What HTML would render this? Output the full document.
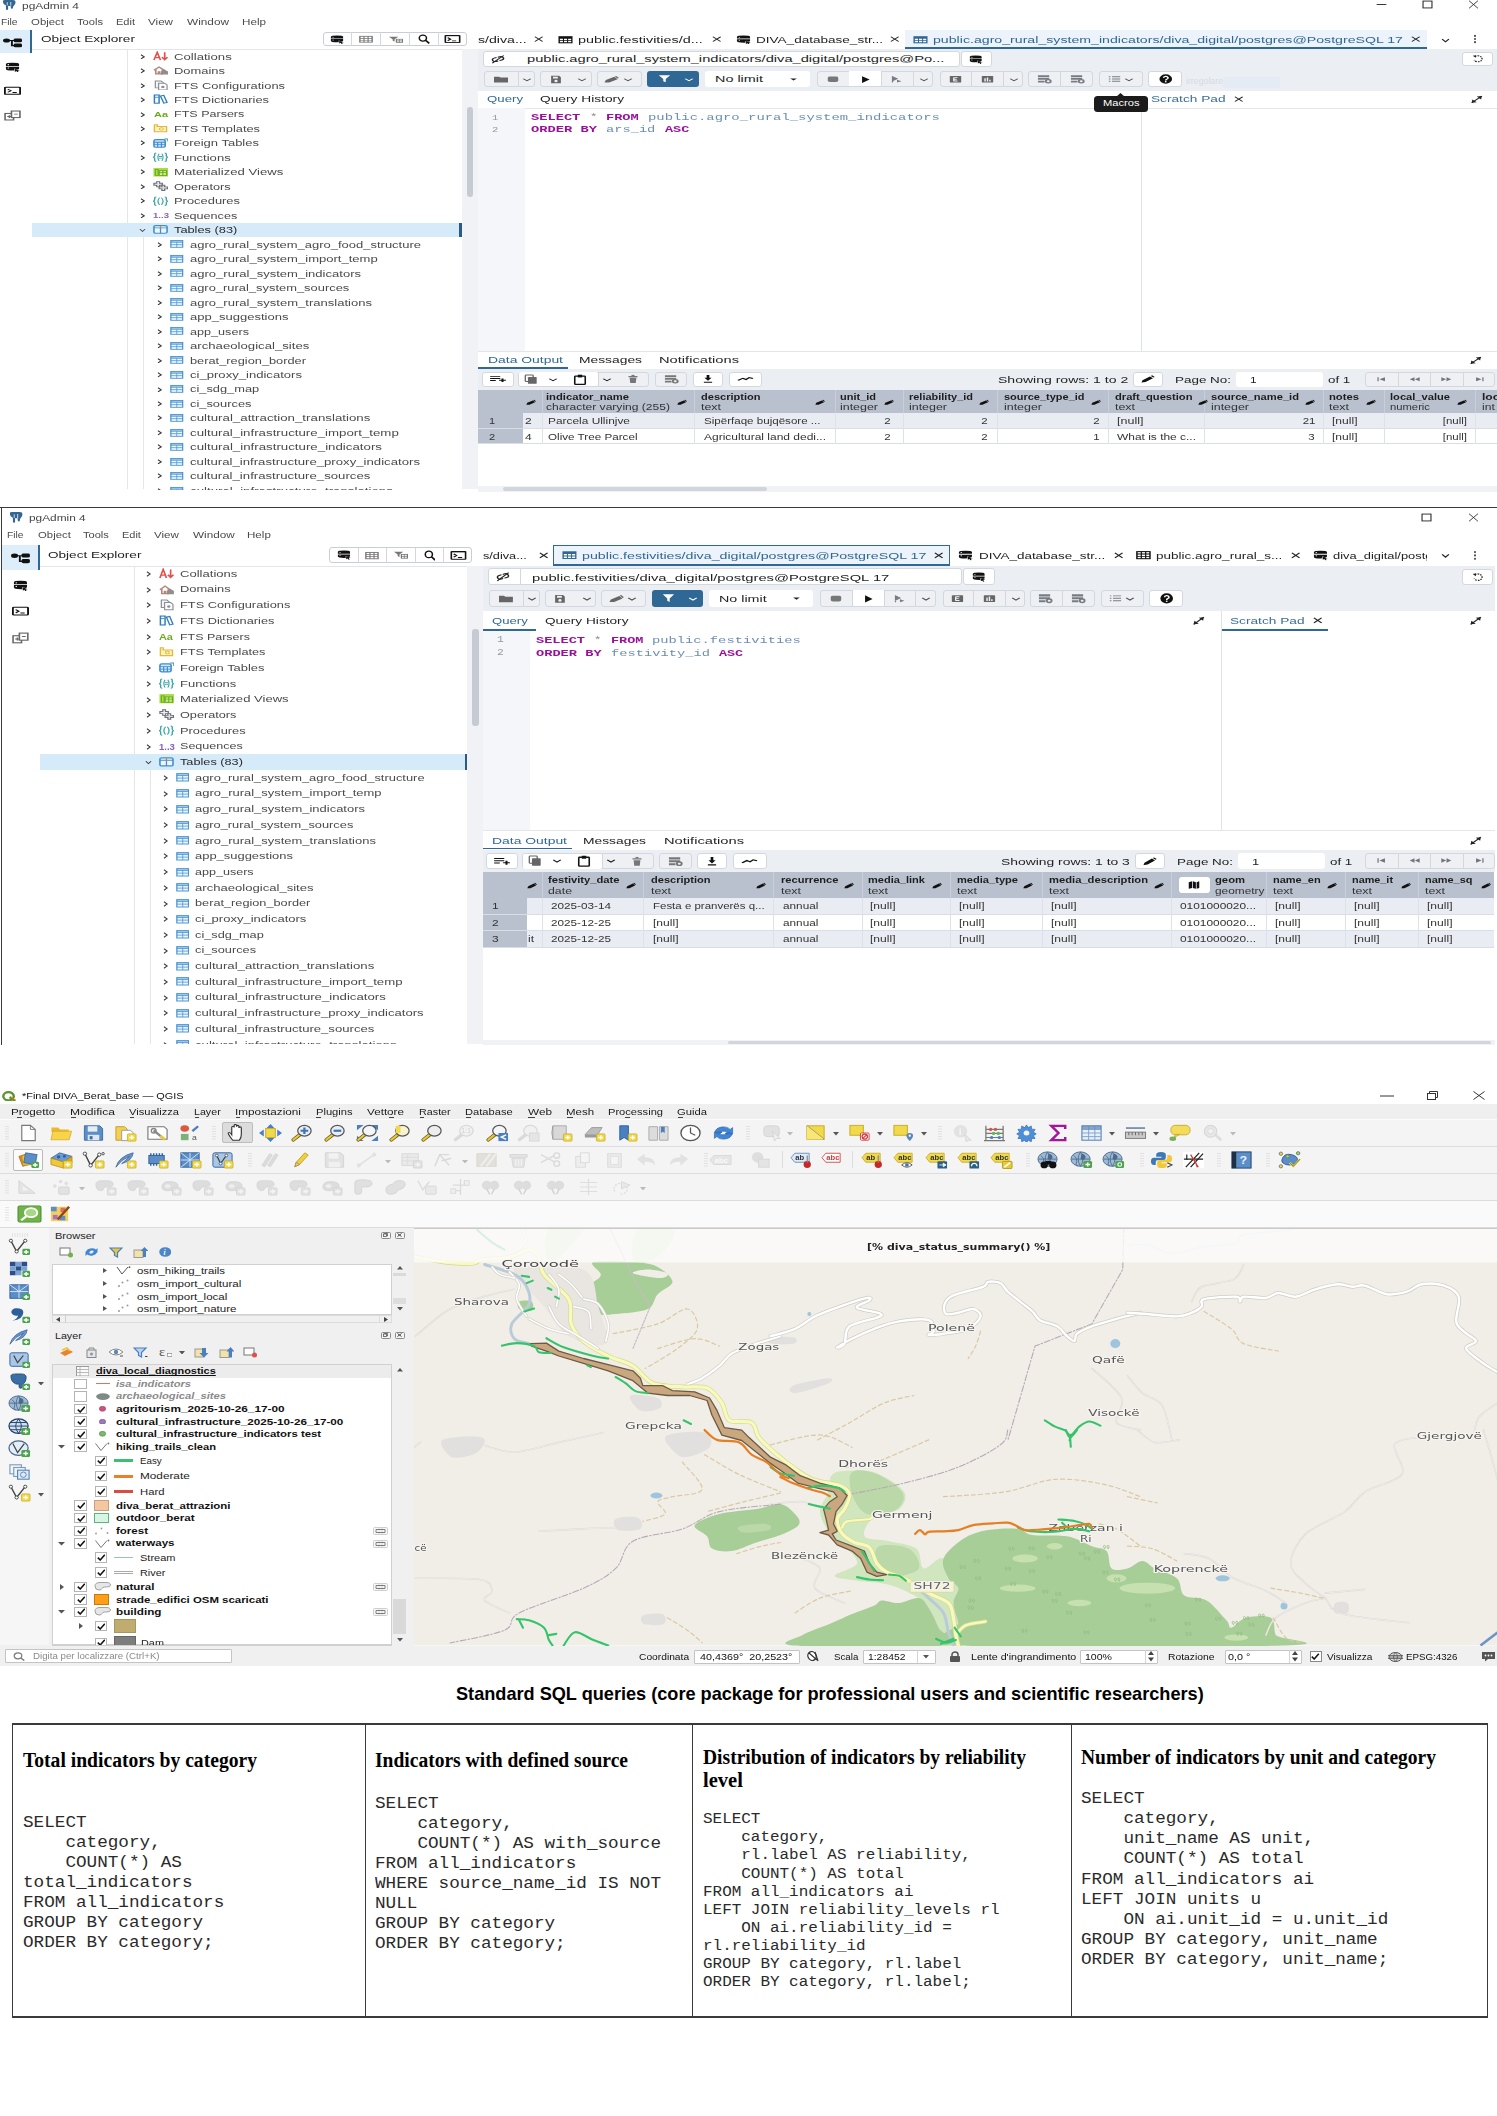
<!DOCTYPE html>
<html><head><meta charset="utf-8"><title>DIVA database documentation</title>
<style>
html,body{margin:0;padding:0;background:#fff;}
body{width:1497px;height:2116px;position:relative;overflow:hidden;font-family:"Liberation Sans",sans-serif;}
.a{position:absolute;display:block;}
.t{position:absolute;display:block;white-space:nowrap;}
</style></head><body>
<div class="a" style="left:0;top:0;width:1497px;height:1675px;filter:blur(0.45px);">
<svg class="a" style="left:2.00px;top:-0.50px;" width="14.00" height="10.00" viewBox="0 0 16 16" preserveAspectRatio="none"><path d="M1 1.5 q0 -1.500 2.500 -1.500 h9 q3 0 3 3 q0 4 -2 6 q-1 1 -1 3.500 q0 1.500 -1.300 1.500 q-1.200 0 -1.200 -2 v-3 q-1.500 .8 -3 0 v5.500 q0 1.500 -1.200 1.500 q-1.300 0 -1.300 -1.500 v-6 q-3.500 -1.500 -3.500 -7z" fill="#336791"/><path d="M6 3.5 v5 M10 3 v6" stroke="#fff" stroke-width="1"/></svg>
<span class="t" style="top:1.77px;font-size:8.50px;line-height:8.50px;color:#444;left:22.00px;transform-origin:0 50%;transform:scaleX(1.4025);">pgAdmin 4</span>
<span class="t" style="top:18.27px;font-size:8.50px;line-height:8.50px;color:#4a4a4a;left:0.60px;transform-origin:0 50%;transform:scaleX(1.2114);">File</span>
<span class="t" style="top:18.27px;font-size:8.50px;line-height:8.50px;color:#4a4a4a;left:31.00px;transform-origin:0 50%;transform:scaleX(1.3427);">Object</span>
<span class="t" style="top:18.27px;font-size:8.50px;line-height:8.50px;color:#4a4a4a;left:77.00px;transform-origin:0 50%;transform:scaleX(1.3102);">Tools</span>
<span class="t" style="top:18.27px;font-size:8.50px;line-height:8.50px;color:#4a4a4a;left:116.00px;transform-origin:0 50%;transform:scaleX(1.2964);">Edit</span>
<span class="t" style="top:18.27px;font-size:8.50px;line-height:8.50px;color:#4a4a4a;left:148.00px;transform-origin:0 50%;transform:scaleX(1.3675);">View</span>
<span class="t" style="top:18.27px;font-size:8.50px;line-height:8.50px;color:#4a4a4a;left:187.00px;transform-origin:0 50%;transform:scaleX(1.3891);">Window</span>
<span class="t" style="top:18.27px;font-size:8.50px;line-height:8.50px;color:#4a4a4a;left:242.00px;transform-origin:0 50%;transform:scaleX(1.3727);">Help</span>
<svg class="a" style="left:1375.00px;top:-1.20px;" width="13.00" height="11.00" viewBox="0 0 16 16" preserveAspectRatio="none"><path d="M2 8h12" stroke="#222" stroke-width="1.2"/></svg>
<svg class="a" style="left:1420.50px;top:-1.20px;" width="13.00" height="11.00" viewBox="0 0 16 16" preserveAspectRatio="none"><rect x="2.5" y="3" width="11" height="10" fill="none" stroke="#222" stroke-width="1.3"/></svg>
<svg class="a" style="left:1467.10px;top:-1.20px;" width="13.00" height="11.00" viewBox="0 0 16 16" preserveAspectRatio="none"><path d="M2.5 2.5 L13.5 13.5 M13.5 2.5 L2.5 13.5" stroke="#222" stroke-width="1.1" fill="none"/></svg>
<div class="a" style="left:-6.60px;top:30.00px;width:36.90px;height:23.00px;background:#ddeefa;"></div>
<div class="a" style="left:30.30px;top:30.00px;width:1.90px;height:23.00px;background:#2f6895;"></div>
<svg class="a" style="left:2.50px;top:36.50px;" width="19.00" height="11.00" viewBox="0 0 16 16" preserveAspectRatio="none"><circle cx="3" cy="5" r="3" fill="#111"/><rect x="9" y="2" width="7" height="5.5" rx="1.5" fill="#111"/><rect x="9" y="9.5" width="7" height="5.5" rx="1.5" fill="#111"/><path d="M5 5 H10 M7.5 5 V12.5 H10" stroke="#111" stroke-width="1.6" fill="none"/></svg>
<svg class="a" style="left:4.50px;top:61.75px;" width="15.00" height="10.50" viewBox="0 0 16 16" preserveAspectRatio="none"><path d="M1 3 q0 -2 7 -2 q7 0 7 2 v3 h-14z M1 7.200 h14 v3 q0 .8 -2 1.200 l-3 -1.500 v3.100 q-9 .3 -9 -2.300z" fill="#111"/><path d="M10.500 10.200 l5.300 2.700 -2.300 .4 1.200 2.300 -1.300 .5 -1.200 -2.300 -1.700 1.300z" fill="#111"/><circle cx="3.500" cy="4" r=".8" fill="#fff"/><circle cx="3.500" cy="9" r=".8" fill="#fff"/></svg>
<svg class="a" style="left:3.50px;top:86.25px;" width="17.00" height="9.50" viewBox="0 0 16 16" preserveAspectRatio="none"><rect x="0.8" y="2" width="14.4" height="12" rx="1" fill="none" stroke="#111" stroke-width="1.8"/><path d="M3.5 5.5 L6.5 8 L3.5 10.5 M8 11 H12" stroke="#111" stroke-width="1.5" fill="none"/></svg>
<svg class="a" style="left:3.50px;top:109.50px;" width="17.00" height="11.00" viewBox="0 0 16 16" preserveAspectRatio="none"><rect x="1" y="5" width="8" height="9.5" fill="none" stroke="#666" stroke-width="1.5"/><rect x="7" y="1.5" width="8" height="9.5" fill="#fff" stroke="#666" stroke-width="1.5"/><path d="M3 9.5h4M5 7.5v4M9.5 6h3.5" stroke="#666" stroke-width="1.2"/></svg>
<span class="t" style="top:35.20px;font-size:9.18px;line-height:9.18px;color:#222;left:41.00px;transform-origin:0 50%;transform:scaleX(1.4869);">Object Explorer</span>
<div class="a" style="left:32.20px;top:48.60px;width:443.80px;height:0.80px;background:#e2e5ea;"></div>
<div class="a" style="left:323.00px;top:31.60px;width:144.00px;height:14.80px;background:#fff;border:1px solid #c9cdd4;box-sizing:border-box;border-radius:3px;"></div>
<div class="a" style="left:351.40px;top:32.00px;width:0.80px;height:14.00px;background:#d3d7de;"></div>
<div class="a" style="left:380.20px;top:32.00px;width:0.80px;height:14.00px;background:#d3d7de;"></div>
<div class="a" style="left:409.00px;top:32.00px;width:0.80px;height:14.00px;background:#d3d7de;"></div>
<div class="a" style="left:437.80px;top:32.00px;width:0.80px;height:14.00px;background:#d3d7de;"></div>
<svg class="a" style="left:330.40px;top:34.50px;" width="14.00" height="9.00" viewBox="0 0 16 16" preserveAspectRatio="none"><path d="M1 3 q0 -2 7 -2 q7 0 7 2 v3 h-14z M1 7.200 h14 v3 q0 .8 -2 1.200 l-3 -1.500 v3.100 q-9 .3 -9 -2.300z" fill="#111"/><path d="M10.500 10.200 l5.300 2.700 -2.300 .4 1.200 2.300 -1.300 .5 -1.200 -2.300 -1.700 1.300z" fill="#111"/><circle cx="3.500" cy="4" r=".8" fill="#fff"/><circle cx="3.500" cy="9" r=".8" fill="#fff"/></svg>
<svg class="a" style="left:359.20px;top:34.75px;" width="14.00" height="8.50" viewBox="0 0 16 16" preserveAspectRatio="none"><rect x="1" y="2.5" width="14" height="11" fill="none" stroke="#777" stroke-width="1.6"/><path d="M1 6.2h14M1 9.9h14M5.7 2.5v11M10.4 2.5v11" stroke="#777" stroke-width="1.3"/></svg>
<svg class="a" style="left:387.50px;top:34.50px;" width="15.00" height="9.00" viewBox="0 0 16 16" preserveAspectRatio="none"><path d="M1 3 h10 l-4 4.5 v4 l-2 -1.2 v-2.8z" fill="#777"/><rect x="9" y="7.5" width="6.5" height="6" fill="none" stroke="#777" stroke-width="1.3"/><path d="M9 10.5h6.5M12.2 7.5v6" stroke="#777" stroke-width="1"/></svg>
<svg class="a" style="left:417.80px;top:34.00px;" width="12.00" height="10.00" viewBox="0 0 16 16" preserveAspectRatio="none"><circle cx="6.5" cy="6.5" r="4.8" fill="none" stroke="#111" stroke-width="2"/><path d="M10 10 L15 15" stroke="#111" stroke-width="2.4"/></svg>
<svg class="a" style="left:444.10px;top:34.00px;" width="17.00" height="10.00" viewBox="0 0 16 16" preserveAspectRatio="none"><rect x="0.5" y="1.5" width="15" height="13" rx="1.2" fill="#111"/><rect x="2" y="3.5" width="12" height="9.5" fill="#fff"/><path d="M3.5 5.8 L6.2 8.2 L3.5 10.6 M7.5 11 H11.5" stroke="#111" stroke-width="1.5" fill="none"/></svg>
<div class="a" style="left:461.70px;top:49.40px;width:15.90px;height:440.10px;background:#f0f2f5;"></div>
<div class="a" style="left:126.60px;top:49.40px;width:1.00px;height:440.10px;background:#e4e6ea;"></div>
<div class="a" style="left:142.90px;top:237.30px;width:1.00px;height:252.20px;background:#e4e6ea;"></div>
<div class="a" style="left:466.70px;top:107.00px;width:6.60px;height:90.00px;background:#c6cad2;border-radius:3px;"></div>
<div class="a" style="left:31.70px;top:222.70px;width:430.00px;height:14.60px;background:#d6ebf9;"></div>
<div class="a" style="left:459.00px;top:222.70px;width:2.70px;height:14.60px;background:#2b5b84;"></div>
<svg class="a" style="left:140.10px;top:53.60px;" width="5.20" height="5.60" viewBox="0 0 16 16" preserveAspectRatio="none"><path d="M3 2 L13 8 L3 14" fill="none" stroke="#333" stroke-width="3"/></svg>
<svg class="a" style="left:153.00px;top:50.75px;" width="15.00" height="10.50" viewBox="0 0 16 16" preserveAspectRatio="none"><path d="M1 14 L4.500 2 L8 14 M2.300 10 h4.400" stroke="#e0504d" stroke-width="1.800" fill="none"/><path d="M12.500 2 v11 M9.500 9.500 l3 3.800 3 -3.800" stroke="#e0504d" stroke-width="1.800" fill="none"/></svg>
<span class="t" style="top:52.57px;font-size:8.50px;line-height:8.50px;color:#4a4a4a;left:174.00px;transform-origin:0 50%;transform:scaleX(1.5458);">Collations</span>
<svg class="a" style="left:140.10px;top:68.08px;" width="5.20" height="5.60" viewBox="0 0 16 16" preserveAspectRatio="none"><path d="M3 2 L13 8 L3 14" fill="none" stroke="#333" stroke-width="3"/></svg>
<svg class="a" style="left:153.00px;top:65.22px;" width="15.00" height="10.50" viewBox="0 0 16 16" preserveAspectRatio="none"><path d="M1 8 L6.500 3 L12 8 M3 7v6.500h7V7" fill="none" stroke="#b5847a" stroke-width="1.700"/><path d="M8.500 10 L12.200 6.800 L16 10 v4.500 h-7.500z" fill="#8e8e8e"/><rect x="5" y="9.500" width="3" height="4" fill="#b5847a"/></svg>
<span class="t" style="top:67.04px;font-size:8.50px;line-height:8.50px;color:#4a4a4a;left:174.00px;transform-origin:0 50%;transform:scaleX(1.5203);">Domains</span>
<svg class="a" style="left:140.10px;top:82.55px;" width="5.20" height="5.60" viewBox="0 0 16 16" preserveAspectRatio="none"><path d="M3 2 L13 8 L3 14" fill="none" stroke="#333" stroke-width="3"/></svg>
<svg class="a" style="left:153.00px;top:79.70px;" width="15.00" height="10.50" viewBox="0 0 16 16" preserveAspectRatio="none"><path d="M2.500 1.500h6l2.500 2.500V12H2.500z" fill="#f4f4f4" stroke="#8a8f98" stroke-width="1.300"/><path d="M6 5h6.500l2.500 2.500V15H6z" fill="#fff" stroke="#8a8f98" stroke-width="1.300"/><circle cx="10.500" cy="10.500" r="1.800" fill="#8a8f98"/></svg>
<span class="t" style="top:81.52px;font-size:8.50px;line-height:8.50px;color:#4a4a4a;left:174.00px;transform-origin:0 50%;transform:scaleX(1.5157);">FTS Configurations</span>
<svg class="a" style="left:140.10px;top:97.03px;" width="5.20" height="5.60" viewBox="0 0 16 16" preserveAspectRatio="none"><path d="M3 2 L13 8 L3 14" fill="none" stroke="#333" stroke-width="3"/></svg>
<svg class="a" style="left:153.00px;top:94.17px;" width="15.00" height="10.50" viewBox="0 0 16 16" preserveAspectRatio="none"><rect x="1.5" y="1.5" width="5" height="12.5" fill="none" stroke="#2f7fc1" stroke-width="1.6"/><path d="M8 3 l3.5 -1 l3.5 11 l-3.5 1z" fill="none" stroke="#2f7fc1" stroke-width="1.5"/><path d="M2 5h4" stroke="#2f7fc1"/></svg>
<span class="t" style="top:95.99px;font-size:8.50px;line-height:8.50px;color:#4a4a4a;left:174.00px;transform-origin:0 50%;transform:scaleX(1.5121);">FTS Dictionaries</span>
<svg class="a" style="left:140.10px;top:111.50px;" width="5.20" height="5.60" viewBox="0 0 16 16" preserveAspectRatio="none"><path d="M3 2 L13 8 L3 14" fill="none" stroke="#333" stroke-width="3"/></svg>
<span class="t" style="top:110.70px;font-size:8.07px;line-height:8.07px;color:#6da81f;font-weight:bold;left:153.50px;transform-origin:0 50%;transform:scaleX(1.3576);">Aa</span>
<span class="t" style="top:110.47px;font-size:8.50px;line-height:8.50px;color:#4a4a4a;left:174.00px;transform-origin:0 50%;transform:scaleX(1.4737);">FTS Parsers</span>
<svg class="a" style="left:140.10px;top:125.98px;" width="5.20" height="5.60" viewBox="0 0 16 16" preserveAspectRatio="none"><path d="M3 2 L13 8 L3 14" fill="none" stroke="#333" stroke-width="3"/></svg>
<svg class="a" style="left:153.00px;top:123.12px;" width="15.00" height="10.50" viewBox="0 0 16 16" preserveAspectRatio="none"><path d="M1.5 2.5v11h13v-8h-10v-3z" fill="#fff3c4" stroke="#e3b93c" stroke-width="1.5"/><circle cx="9" cy="9" r="2" fill="none" stroke="#e3b93c" stroke-width="1.2"/></svg>
<span class="t" style="top:124.94px;font-size:8.50px;line-height:8.50px;color:#4a4a4a;left:174.00px;transform-origin:0 50%;transform:scaleX(1.5084);">FTS Templates</span>
<svg class="a" style="left:140.10px;top:140.45px;" width="5.20" height="5.60" viewBox="0 0 16 16" preserveAspectRatio="none"><path d="M3 2 L13 8 L3 14" fill="none" stroke="#333" stroke-width="3"/></svg>
<svg class="a" style="left:153.00px;top:137.60px;" width="15.00" height="10.50" viewBox="0 0 16 16" preserveAspectRatio="none"><rect x="1" y="2.500" width="12" height="11.500" rx="2" fill="#cfe4f7" stroke="#3d8fd1" stroke-width="1.700"/><path d="M1 6.500h12M5 6.500v7.500M9 6.500v7.500M1 10h12" stroke="#3d8fd1" stroke-width="1.300"/><path d="M12 1.500 h4 v4" fill="none" stroke="#3d8fd1" stroke-width="1.500"/></svg>
<span class="t" style="top:139.42px;font-size:8.50px;line-height:8.50px;color:#4a4a4a;left:174.00px;transform-origin:0 50%;transform:scaleX(1.5285);">Foreign Tables</span>
<svg class="a" style="left:140.10px;top:154.92px;" width="5.20" height="5.60" viewBox="0 0 16 16" preserveAspectRatio="none"><path d="M3 2 L13 8 L3 14" fill="none" stroke="#333" stroke-width="3"/></svg>
<svg class="a" style="left:153.00px;top:152.07px;" width="15.00" height="10.50" viewBox="0 0 16 16" preserveAspectRatio="none"><path d="M3.500 1.500 q-2 0 -1.700 3 q.3 2.500 -1.300 3.500 q1.600 1 1.300 3.500 q-.3 3 1.700 3 M12.500 1.500 q2 0 1.700 3 q-.3 2.500 1.300 3.500 q-1.600 1 -1.300 3.500 q.3 3 -1.700 3" fill="none" stroke="#3ba6a6" stroke-width="1.500"/><path d="M6.500 2.500 q-2.500 5.500 0 11 M9.500 2.500 q2.500 5.500 0 11" fill="none" stroke="#3ba6a6" stroke-width="1.200"/><path d="M6.300 6.800h3.400M6.300 9.300h3.400" stroke="#3ba6a6" stroke-width="1.300"/></svg>
<span class="t" style="top:153.89px;font-size:8.50px;line-height:8.50px;color:#4a4a4a;left:174.00px;transform-origin:0 50%;transform:scaleX(1.5383);">Functions</span>
<svg class="a" style="left:140.10px;top:169.40px;" width="5.20" height="5.60" viewBox="0 0 16 16" preserveAspectRatio="none"><path d="M3 2 L13 8 L3 14" fill="none" stroke="#333" stroke-width="3"/></svg>
<svg class="a" style="left:153.00px;top:166.55px;" width="15.00" height="10.50" viewBox="0 0 16 16" preserveAspectRatio="none"><rect x="0.500" y="1.500" width="15.500" height="13" fill="#a4e043"/><rect x="2.500" y="4" width="3" height="9" fill="none" stroke="#6aa51e" stroke-width="1.100"/><rect x="6.500" y="5.500" width="8" height="7.500" fill="#c9ef8e" stroke="#6aa51e" stroke-width="1.300"/><path d="M6.500 8.500h8M10.500 5.500v7.500" stroke="#6aa51e" stroke-width="1.100"/></svg>
<span class="t" style="top:168.37px;font-size:8.50px;line-height:8.50px;color:#4a4a4a;left:174.00px;transform-origin:0 50%;transform:scaleX(1.5456);">Materialized Views</span>
<svg class="a" style="left:140.10px;top:183.88px;" width="5.20" height="5.60" viewBox="0 0 16 16" preserveAspectRatio="none"><path d="M3 2 L13 8 L3 14" fill="none" stroke="#333" stroke-width="3"/></svg>
<svg class="a" style="left:153.00px;top:181.03px;" width="15.00" height="10.50" viewBox="0 0 16 16" preserveAspectRatio="none"><path d="M4 1 h3 v2.500 h3 v3 h-3 v2.500 h-3 v-2.500 h-3 v-3 h3z" fill="#eee" stroke="#6a6f78" stroke-width="1.300"/><path d="M9.500 6.500 h3 v2.500 h3 v3 h-3 v2.500 h-3 v-2.500 h-3 v-3 h3z" fill="#ddd" stroke="#6a6f78" stroke-width="1.300"/></svg>
<span class="t" style="top:182.84px;font-size:8.50px;line-height:8.50px;color:#4a4a4a;left:174.00px;transform-origin:0 50%;transform:scaleX(1.5001);">Operators</span>
<svg class="a" style="left:140.10px;top:198.35px;" width="5.20" height="5.60" viewBox="0 0 16 16" preserveAspectRatio="none"><path d="M3 2 L13 8 L3 14" fill="none" stroke="#333" stroke-width="3"/></svg>
<svg class="a" style="left:153.00px;top:195.50px;" width="15.00" height="10.50" viewBox="0 0 16 16" preserveAspectRatio="none"><path d="M3.500 1.500 q-2 0 -1.700 3 q.3 2.500 -1.300 3.500 q1.600 1 1.300 3.500 q-.3 3 1.700 3 M12.500 1.500 q2 0 1.700 3 q-.3 2.500 1.300 3.500 q-1.600 1 -1.300 3.500 q.3 3 -1.700 3" fill="none" stroke="#3ba6a6" stroke-width="1.500"/><path d="M7 2.500 q-3.500 5.500 0 11 M9 2.500 q3.500 5.500 0 11" fill="none" stroke="#3ba6a6" stroke-width="1.300"/></svg>
<span class="t" style="top:197.32px;font-size:8.50px;line-height:8.50px;color:#4a4a4a;left:174.00px;transform-origin:0 50%;transform:scaleX(1.5183);">Procedures</span>
<svg class="a" style="left:140.10px;top:212.82px;" width="5.20" height="5.60" viewBox="0 0 16 16" preserveAspectRatio="none"><path d="M3 2 L13 8 L3 14" fill="none" stroke="#333" stroke-width="3"/></svg>
<span class="t" style="top:212.26px;font-size:7.65px;line-height:7.65px;color:#8a5fc7;font-weight:bold;left:153.00px;transform-origin:0 50%;transform:scaleX(1.2549);">1..3</span>
<span class="t" style="top:211.79px;font-size:8.50px;line-height:8.50px;color:#4a4a4a;left:174.00px;transform-origin:0 50%;transform:scaleX(1.4878);">Sequences</span>
<svg class="a" style="left:139.20px;top:227.85px;" width="7.00" height="4.50" viewBox="0 0 16 16" preserveAspectRatio="none"><path d="M2 4 L8 12 L14 4" fill="none" stroke="#333" stroke-width="2.4"/></svg>
<svg class="a" style="left:153.00px;top:224.45px;" width="15.00" height="10.50" viewBox="0 0 16 16" preserveAspectRatio="none"><rect x="1" y="2.500" width="14" height="11.500" rx="1.800" fill="#eef5fc" stroke="#3d8fd1" stroke-width="1.700"/><path d="M1 6h14M8 6v8" stroke="#3d8fd1" stroke-width="1.300"/><path d="M7.300 3.200h1.400v4h-1.400z" fill="#e0704d"/></svg>
<span class="t" style="top:226.27px;font-size:8.50px;line-height:8.50px;color:#2a2a2a;left:174.00px;transform-origin:0 50%;transform:scaleX(1.5049);">Tables (83)</span>
<svg class="a" style="left:156.70px;top:241.77px;" width="5.20" height="5.60" viewBox="0 0 16 16" preserveAspectRatio="none"><path d="M3 2 L13 8 L3 14" fill="none" stroke="#333" stroke-width="3"/></svg>
<svg class="a" style="left:170.25px;top:239.42px;" width="13.50" height="9.50" viewBox="0 0 16 16" preserveAspectRatio="none"><rect x="1" y="2.5" width="14" height="11.5" fill="#eef5fc" stroke="#4a97d6" stroke-width="1.5"/><path d="M1 5.5h14M1 9.5h14M8 5.500v8.500" stroke="#4a97d6" stroke-width="1.1"/><rect x="1" y="2.5" width="14" height="3" fill="#3d8fd1" opacity=".4"/></svg>
<span class="t" style="top:240.74px;font-size:8.50px;line-height:8.50px;color:#4a4a4a;left:189.50px;transform-origin:0 50%;transform:scaleX(1.5277);">agro_rural_system_agro_food_structure</span>
<svg class="a" style="left:156.70px;top:256.25px;" width="5.20" height="5.60" viewBox="0 0 16 16" preserveAspectRatio="none"><path d="M3 2 L13 8 L3 14" fill="none" stroke="#333" stroke-width="3"/></svg>
<svg class="a" style="left:170.25px;top:253.90px;" width="13.50" height="9.50" viewBox="0 0 16 16" preserveAspectRatio="none"><rect x="1" y="2.5" width="14" height="11.5" fill="#eef5fc" stroke="#4a97d6" stroke-width="1.5"/><path d="M1 5.5h14M1 9.5h14M8 5.500v8.500" stroke="#4a97d6" stroke-width="1.1"/><rect x="1" y="2.5" width="14" height="3" fill="#3d8fd1" opacity=".4"/></svg>
<span class="t" style="top:255.22px;font-size:8.50px;line-height:8.50px;color:#4a4a4a;left:189.50px;transform-origin:0 50%;transform:scaleX(1.5340);">agro_rural_system_import_temp</span>
<svg class="a" style="left:156.70px;top:270.72px;" width="5.20" height="5.60" viewBox="0 0 16 16" preserveAspectRatio="none"><path d="M3 2 L13 8 L3 14" fill="none" stroke="#333" stroke-width="3"/></svg>
<svg class="a" style="left:170.25px;top:268.38px;" width="13.50" height="9.50" viewBox="0 0 16 16" preserveAspectRatio="none"><rect x="1" y="2.5" width="14" height="11.5" fill="#eef5fc" stroke="#4a97d6" stroke-width="1.5"/><path d="M1 5.5h14M1 9.5h14M8 5.500v8.500" stroke="#4a97d6" stroke-width="1.1"/><rect x="1" y="2.5" width="14" height="3" fill="#3d8fd1" opacity=".4"/></svg>
<span class="t" style="top:269.69px;font-size:8.50px;line-height:8.50px;color:#4a4a4a;left:189.50px;transform-origin:0 50%;transform:scaleX(1.5336);">agro_rural_system_indicators</span>
<svg class="a" style="left:156.70px;top:285.20px;" width="5.20" height="5.60" viewBox="0 0 16 16" preserveAspectRatio="none"><path d="M3 2 L13 8 L3 14" fill="none" stroke="#333" stroke-width="3"/></svg>
<svg class="a" style="left:170.25px;top:282.85px;" width="13.50" height="9.50" viewBox="0 0 16 16" preserveAspectRatio="none"><rect x="1" y="2.5" width="14" height="11.5" fill="#eef5fc" stroke="#4a97d6" stroke-width="1.5"/><path d="M1 5.5h14M1 9.5h14M8 5.500v8.500" stroke="#4a97d6" stroke-width="1.1"/><rect x="1" y="2.5" width="14" height="3" fill="#3d8fd1" opacity=".4"/></svg>
<span class="t" style="top:284.17px;font-size:8.50px;line-height:8.50px;color:#4a4a4a;left:189.50px;transform-origin:0 50%;transform:scaleX(1.5187);">agro_rural_system_sources</span>
<svg class="a" style="left:156.70px;top:299.67px;" width="5.20" height="5.60" viewBox="0 0 16 16" preserveAspectRatio="none"><path d="M3 2 L13 8 L3 14" fill="none" stroke="#333" stroke-width="3"/></svg>
<svg class="a" style="left:170.25px;top:297.32px;" width="13.50" height="9.50" viewBox="0 0 16 16" preserveAspectRatio="none"><rect x="1" y="2.5" width="14" height="11.5" fill="#eef5fc" stroke="#4a97d6" stroke-width="1.5"/><path d="M1 5.5h14M1 9.5h14M8 5.500v8.500" stroke="#4a97d6" stroke-width="1.1"/><rect x="1" y="2.5" width="14" height="3" fill="#3d8fd1" opacity=".4"/></svg>
<span class="t" style="top:298.64px;font-size:8.50px;line-height:8.50px;color:#4a4a4a;left:189.50px;transform-origin:0 50%;transform:scaleX(1.5347);">agro_rural_system_translations</span>
<svg class="a" style="left:156.70px;top:314.15px;" width="5.20" height="5.60" viewBox="0 0 16 16" preserveAspectRatio="none"><path d="M3 2 L13 8 L3 14" fill="none" stroke="#333" stroke-width="3"/></svg>
<svg class="a" style="left:170.25px;top:311.80px;" width="13.50" height="9.50" viewBox="0 0 16 16" preserveAspectRatio="none"><rect x="1" y="2.5" width="14" height="11.5" fill="#eef5fc" stroke="#4a97d6" stroke-width="1.5"/><path d="M1 5.5h14M1 9.5h14M8 5.500v8.500" stroke="#4a97d6" stroke-width="1.1"/><rect x="1" y="2.5" width="14" height="3" fill="#3d8fd1" opacity=".4"/></svg>
<span class="t" style="top:313.12px;font-size:8.50px;line-height:8.50px;color:#4a4a4a;left:189.50px;transform-origin:0 50%;transform:scaleX(1.5323);">app_suggestions</span>
<svg class="a" style="left:156.70px;top:328.62px;" width="5.20" height="5.60" viewBox="0 0 16 16" preserveAspectRatio="none"><path d="M3 2 L13 8 L3 14" fill="none" stroke="#333" stroke-width="3"/></svg>
<svg class="a" style="left:170.25px;top:326.27px;" width="13.50" height="9.50" viewBox="0 0 16 16" preserveAspectRatio="none"><rect x="1" y="2.5" width="14" height="11.5" fill="#eef5fc" stroke="#4a97d6" stroke-width="1.5"/><path d="M1 5.5h14M1 9.5h14M8 5.500v8.500" stroke="#4a97d6" stroke-width="1.1"/><rect x="1" y="2.5" width="14" height="3" fill="#3d8fd1" opacity=".4"/></svg>
<span class="t" style="top:327.59px;font-size:8.50px;line-height:8.50px;color:#4a4a4a;left:189.50px;transform-origin:0 50%;transform:scaleX(1.4860);">app_users</span>
<svg class="a" style="left:156.70px;top:343.10px;" width="5.20" height="5.60" viewBox="0 0 16 16" preserveAspectRatio="none"><path d="M3 2 L13 8 L3 14" fill="none" stroke="#333" stroke-width="3"/></svg>
<svg class="a" style="left:170.25px;top:340.75px;" width="13.50" height="9.50" viewBox="0 0 16 16" preserveAspectRatio="none"><rect x="1" y="2.5" width="14" height="11.5" fill="#eef5fc" stroke="#4a97d6" stroke-width="1.5"/><path d="M1 5.5h14M1 9.5h14M8 5.500v8.500" stroke="#4a97d6" stroke-width="1.1"/><rect x="1" y="2.5" width="14" height="3" fill="#3d8fd1" opacity=".4"/></svg>
<span class="t" style="top:342.07px;font-size:8.50px;line-height:8.50px;color:#4a4a4a;left:189.50px;transform-origin:0 50%;transform:scaleX(1.5487);">archaeological_sites</span>
<svg class="a" style="left:156.70px;top:357.57px;" width="5.20" height="5.60" viewBox="0 0 16 16" preserveAspectRatio="none"><path d="M3 2 L13 8 L3 14" fill="none" stroke="#333" stroke-width="3"/></svg>
<svg class="a" style="left:170.25px;top:355.22px;" width="13.50" height="9.50" viewBox="0 0 16 16" preserveAspectRatio="none"><rect x="1" y="2.5" width="14" height="11.5" fill="#eef5fc" stroke="#4a97d6" stroke-width="1.5"/><path d="M1 5.5h14M1 9.5h14M8 5.500v8.500" stroke="#4a97d6" stroke-width="1.1"/><rect x="1" y="2.5" width="14" height="3" fill="#3d8fd1" opacity=".4"/></svg>
<span class="t" style="top:356.54px;font-size:8.50px;line-height:8.50px;color:#4a4a4a;left:189.50px;transform-origin:0 50%;transform:scaleX(1.5059);">berat_region_border</span>
<svg class="a" style="left:156.70px;top:372.05px;" width="5.20" height="5.60" viewBox="0 0 16 16" preserveAspectRatio="none"><path d="M3 2 L13 8 L3 14" fill="none" stroke="#333" stroke-width="3"/></svg>
<svg class="a" style="left:170.25px;top:369.70px;" width="13.50" height="9.50" viewBox="0 0 16 16" preserveAspectRatio="none"><rect x="1" y="2.5" width="14" height="11.5" fill="#eef5fc" stroke="#4a97d6" stroke-width="1.5"/><path d="M1 5.5h14M1 9.5h14M8 5.500v8.500" stroke="#4a97d6" stroke-width="1.1"/><rect x="1" y="2.5" width="14" height="3" fill="#3d8fd1" opacity=".4"/></svg>
<span class="t" style="top:371.02px;font-size:8.50px;line-height:8.50px;color:#4a4a4a;left:189.50px;transform-origin:0 50%;transform:scaleX(1.5392);">ci_proxy_indicators</span>
<svg class="a" style="left:156.70px;top:386.52px;" width="5.20" height="5.60" viewBox="0 0 16 16" preserveAspectRatio="none"><path d="M3 2 L13 8 L3 14" fill="none" stroke="#333" stroke-width="3"/></svg>
<svg class="a" style="left:170.25px;top:384.18px;" width="13.50" height="9.50" viewBox="0 0 16 16" preserveAspectRatio="none"><rect x="1" y="2.5" width="14" height="11.5" fill="#eef5fc" stroke="#4a97d6" stroke-width="1.5"/><path d="M1 5.5h14M1 9.5h14M8 5.500v8.500" stroke="#4a97d6" stroke-width="1.1"/><rect x="1" y="2.5" width="14" height="3" fill="#3d8fd1" opacity=".4"/></svg>
<span class="t" style="top:385.49px;font-size:8.50px;line-height:8.50px;color:#4a4a4a;left:189.50px;transform-origin:0 50%;transform:scaleX(1.5095);">ci_sdg_map</span>
<svg class="a" style="left:156.70px;top:401.00px;" width="5.20" height="5.60" viewBox="0 0 16 16" preserveAspectRatio="none"><path d="M3 2 L13 8 L3 14" fill="none" stroke="#333" stroke-width="3"/></svg>
<svg class="a" style="left:170.25px;top:398.65px;" width="13.50" height="9.50" viewBox="0 0 16 16" preserveAspectRatio="none"><rect x="1" y="2.5" width="14" height="11.5" fill="#eef5fc" stroke="#4a97d6" stroke-width="1.5"/><path d="M1 5.5h14M1 9.5h14M8 5.500v8.500" stroke="#4a97d6" stroke-width="1.1"/><rect x="1" y="2.5" width="14" height="3" fill="#3d8fd1" opacity=".4"/></svg>
<span class="t" style="top:399.97px;font-size:8.50px;line-height:8.50px;color:#4a4a4a;left:189.50px;transform-origin:0 50%;transform:scaleX(1.5133);">ci_sources</span>
<svg class="a" style="left:156.70px;top:415.47px;" width="5.20" height="5.60" viewBox="0 0 16 16" preserveAspectRatio="none"><path d="M3 2 L13 8 L3 14" fill="none" stroke="#333" stroke-width="3"/></svg>
<svg class="a" style="left:170.25px;top:413.12px;" width="13.50" height="9.50" viewBox="0 0 16 16" preserveAspectRatio="none"><rect x="1" y="2.5" width="14" height="11.5" fill="#eef5fc" stroke="#4a97d6" stroke-width="1.5"/><path d="M1 5.5h14M1 9.5h14M8 5.500v8.500" stroke="#4a97d6" stroke-width="1.1"/><rect x="1" y="2.5" width="14" height="3" fill="#3d8fd1" opacity=".4"/></svg>
<span class="t" style="top:414.44px;font-size:8.50px;line-height:8.50px;color:#4a4a4a;left:189.50px;transform-origin:0 50%;transform:scaleX(1.5647);">cultural_attraction_translations</span>
<svg class="a" style="left:156.70px;top:429.95px;" width="5.20" height="5.60" viewBox="0 0 16 16" preserveAspectRatio="none"><path d="M3 2 L13 8 L3 14" fill="none" stroke="#333" stroke-width="3"/></svg>
<svg class="a" style="left:170.25px;top:427.60px;" width="13.50" height="9.50" viewBox="0 0 16 16" preserveAspectRatio="none"><rect x="1" y="2.5" width="14" height="11.5" fill="#eef5fc" stroke="#4a97d6" stroke-width="1.5"/><path d="M1 5.5h14M1 9.5h14M8 5.500v8.500" stroke="#4a97d6" stroke-width="1.1"/><rect x="1" y="2.5" width="14" height="3" fill="#3d8fd1" opacity=".4"/></svg>
<span class="t" style="top:428.92px;font-size:8.50px;line-height:8.50px;color:#4a4a4a;left:189.50px;transform-origin:0 50%;transform:scaleX(1.5617);">cultural_infrastructure_import_temp</span>
<svg class="a" style="left:156.70px;top:444.42px;" width="5.20" height="5.60" viewBox="0 0 16 16" preserveAspectRatio="none"><path d="M3 2 L13 8 L3 14" fill="none" stroke="#333" stroke-width="3"/></svg>
<svg class="a" style="left:170.25px;top:442.07px;" width="13.50" height="9.50" viewBox="0 0 16 16" preserveAspectRatio="none"><rect x="1" y="2.5" width="14" height="11.5" fill="#eef5fc" stroke="#4a97d6" stroke-width="1.5"/><path d="M1 5.5h14M1 9.5h14M8 5.500v8.500" stroke="#4a97d6" stroke-width="1.1"/><rect x="1" y="2.5" width="14" height="3" fill="#3d8fd1" opacity=".4"/></svg>
<span class="t" style="top:443.39px;font-size:8.50px;line-height:8.50px;color:#4a4a4a;left:189.50px;transform-origin:0 50%;transform:scaleX(1.5630);">cultural_infrastructure_indicators</span>
<svg class="a" style="left:156.70px;top:458.90px;" width="5.20" height="5.60" viewBox="0 0 16 16" preserveAspectRatio="none"><path d="M3 2 L13 8 L3 14" fill="none" stroke="#333" stroke-width="3"/></svg>
<svg class="a" style="left:170.25px;top:456.55px;" width="13.50" height="9.50" viewBox="0 0 16 16" preserveAspectRatio="none"><rect x="1" y="2.5" width="14" height="11.5" fill="#eef5fc" stroke="#4a97d6" stroke-width="1.5"/><path d="M1 5.5h14M1 9.5h14M8 5.500v8.500" stroke="#4a97d6" stroke-width="1.1"/><rect x="1" y="2.5" width="14" height="3" fill="#3d8fd1" opacity=".4"/></svg>
<span class="t" style="top:457.87px;font-size:8.50px;line-height:8.50px;color:#4a4a4a;left:189.50px;transform-origin:0 50%;transform:scaleX(1.5503);">cultural_infrastructure_proxy_indicators</span>
<svg class="a" style="left:156.70px;top:473.37px;" width="5.20" height="5.60" viewBox="0 0 16 16" preserveAspectRatio="none"><path d="M3 2 L13 8 L3 14" fill="none" stroke="#333" stroke-width="3"/></svg>
<svg class="a" style="left:170.25px;top:471.02px;" width="13.50" height="9.50" viewBox="0 0 16 16" preserveAspectRatio="none"><rect x="1" y="2.5" width="14" height="11.5" fill="#eef5fc" stroke="#4a97d6" stroke-width="1.5"/><path d="M1 5.5h14M1 9.5h14M8 5.500v8.500" stroke="#4a97d6" stroke-width="1.1"/><rect x="1" y="2.5" width="14" height="3" fill="#3d8fd1" opacity=".4"/></svg>
<span class="t" style="top:472.34px;font-size:8.50px;line-height:8.50px;color:#4a4a4a;left:189.50px;transform-origin:0 50%;transform:scaleX(1.5520);">cultural_infrastructure_sources</span>
<svg class="a" style="left:156.70px;top:487.85px;" width="5.20" height="5.60" viewBox="0 0 16 16" preserveAspectRatio="none"><path d="M3 2 L13 8 L3 14" fill="none" stroke="#333" stroke-width="3"/></svg>
<svg class="a" style="left:170.25px;top:485.50px;" width="13.50" height="9.50" viewBox="0 0 16 16" preserveAspectRatio="none"><rect x="1" y="2.5" width="14" height="11.5" fill="#eef5fc" stroke="#4a97d6" stroke-width="1.5"/><path d="M1 5.5h14M1 9.5h14M8 5.500v8.500" stroke="#4a97d6" stroke-width="1.1"/><rect x="1" y="2.5" width="14" height="3" fill="#3d8fd1" opacity=".4"/></svg>
<span class="t" style="top:486.82px;font-size:8.50px;line-height:8.50px;color:#4a4a4a;left:189.50px;transform-origin:0 50%;transform:scaleX(1.5608);">cultural_infrastructure_translations</span>
<div class="a" style="left:0.00px;top:489.50px;width:1497.00px;height:14.00px;background:#fff;"></div>
<span class="t" style="top:35.87px;font-size:8.50px;line-height:8.50px;color:#222;left:478.00px;transform-origin:0 50%;transform:scaleX(1.6623);">s/diva...</span>
<svg class="a" style="left:534.25px;top:36.15px;" width="9.50" height="6.30" viewBox="0 0 16 16" preserveAspectRatio="none"><path d="M1.5 2 L14.5 14 M14.5 2 L1.5 14" stroke="#222" stroke-width="2.3" fill="none"/></svg>
<svg class="a" style="left:557.80px;top:34.55px;" width="15.00" height="9.50" viewBox="0 0 16 16" preserveAspectRatio="none"><rect x="0.5" y="2" width="15" height="12" fill="#111"/><path d="M2 6.3h3.3v2.4H2z M6.4 6.3h3.3v2.4H6.4z M10.8 6.3h3.3v2.4h-3.3z M2 10h3.3v2.4H2z M6.4 10h3.3v2.4H6.4z M10.8 10h3.3v2.4h-3.3z" fill="#fff"/></svg>
<span class="t" style="top:35.87px;font-size:8.50px;line-height:8.50px;color:#222;left:578.00px;transform-origin:0 50%;transform:scaleX(1.6919);">public.festivities/d...</span>
<svg class="a" style="left:711.95px;top:36.15px;" width="9.50" height="6.30" viewBox="0 0 16 16" preserveAspectRatio="none"><path d="M1.5 2 L14.5 14 M14.5 2 L1.5 14" stroke="#222" stroke-width="2.3" fill="none"/></svg>
<svg class="a" style="left:735.80px;top:34.55px;" width="15.00" height="9.50" viewBox="0 0 16 16" preserveAspectRatio="none"><path d="M1 3 q0 -2 7 -2 q7 0 7 2 v3 h-14z M1 7.200 h14 v3 q0 .8 -2 1.200 l-3 -1.500 v3.100 q-9 .3 -9 -2.300z" fill="#111"/><path d="M10.500 10.200 l5.300 2.700 -2.300 .4 1.200 2.300 -1.300 .5 -1.200 -2.300 -1.700 1.300z" fill="#111"/><circle cx="3.500" cy="4" r=".8" fill="#fff"/><circle cx="3.500" cy="9" r=".8" fill="#fff"/></svg>
<span class="t" style="top:35.87px;font-size:8.50px;line-height:8.50px;color:#222;left:756.00px;transform-origin:0 50%;transform:scaleX(1.5934);">DIVA_database_str...</span>
<svg class="a" style="left:890.25px;top:36.15px;" width="9.50" height="6.30" viewBox="0 0 16 16" preserveAspectRatio="none"><path d="M1.5 2 L14.5 14 M14.5 2 L1.5 14" stroke="#222" stroke-width="2.3" fill="none"/></svg>
<div class="a" style="left:905.00px;top:30.00px;width:522.00px;height:19.00px;background:#ecf3fa;"></div>
<div class="a" style="left:905.00px;top:47.20px;width:522.00px;height:2.00px;background:#2f6895;"></div>
<svg class="a" style="left:913.00px;top:34.55px;" width="15.00" height="9.50" viewBox="0 0 16 16" preserveAspectRatio="none"><rect x="0.5" y="2" width="15" height="12" fill="#2f6895"/><path d="M2 6.3h3.3v2.4H2z M6.4 6.3h3.3v2.4H6.4z M10.8 6.3h3.3v2.4h-3.3z M2 10h3.3v2.4H2z M6.4 10h3.3v2.4H6.4z M10.8 10h3.3v2.4h-3.3z" fill="#fff"/></svg>
<span class="t" style="top:35.87px;font-size:8.50px;line-height:8.50px;color:#2f6895;left:933.00px;transform-origin:0 50%;transform:scaleX(1.6645);">public.agro_rural_system_indicators/diva_digital/postgres@PostgreSQL 17</span>
<svg class="a" style="left:1411.25px;top:36.15px;" width="9.50" height="6.30" viewBox="0 0 16 16" preserveAspectRatio="none"><path d="M1.5 2 L14.5 14 M14.5 2 L1.5 14" stroke="#222" stroke-width="2.3" fill="none"/></svg>
<div class="a" style="left:1427.50px;top:30.00px;width:69.50px;height:19.00px;background:#fff;"></div>
<svg class="a" style="left:1440.50px;top:36.50px;" width="9.00" height="7.00" viewBox="0 0 16 16" preserveAspectRatio="none"><path d="M2 5 L8 11 L14 5" fill="none" stroke="#222" stroke-width="2.4"/></svg>
<svg class="a" style="left:1471.20px;top:34.30px;" width="8.00" height="10.00" viewBox="0 0 16 16" preserveAspectRatio="none"><circle cx="8" cy="3" r="1.7" fill="#222"/><circle cx="8" cy="8" r="1.7" fill="#222"/><circle cx="8" cy="13" r="1.7" fill="#222"/></svg>
<div class="a" style="left:477.60px;top:49.20px;width:1019.40px;height:41.50px;background:#ebeef3;"></div>
<div class="a" style="left:483.00px;top:51.00px;width:477.00px;height:15.70px;background:#fff;border:1px solid #d3d7de;box-sizing:border-box;border-radius:3px;"></div>
<svg class="a" style="left:491.00px;top:54.50px;" width="14.00" height="9.00" viewBox="0 0 16 16" preserveAspectRatio="none"><path d="M7 10.500 h-2.500 a3 3.200 0 0 1 0 -6.400 h3 M9 4.100 h2.500 a3 3.200 0 0 1 0 6.400 h-3" fill="none" stroke="#222" stroke-width="1.7" transform="rotate(-22 8 7.3)"/><path d="M1.500 14.500 L14.500 1" stroke="#222" stroke-width="1.5"/></svg>
<span class="t" style="top:55.20px;font-size:9.18px;line-height:9.18px;color:#222;left:526.70px;transform-origin:0 50%;transform:scaleX(1.5978);">public.agro_rural_system_indicators/diva_digital/postgres@Po...</span>
<div class="a" style="left:960.70px;top:51.00px;width:31.60px;height:15.70px;background:#fff;border:1px solid #d3d7de;box-sizing:border-box;border-radius:3px;"></div>
<svg class="a" style="left:969.25px;top:54.50px;" width="13.50" height="9.00" viewBox="0 0 16 16" preserveAspectRatio="none"><path d="M1 3 q0 -2 7 -2 q7 0 7 2 v3 h-14z M1 7.200 h14 v3 q0 .8 -2 1.200 l-3 -1.500 v3.100 q-9 .3 -9 -2.300z" fill="#111"/><path d="M10.500 10.200 l5.300 2.700 -2.300 .4 1.200 2.300 -1.300 .5 -1.200 -2.300 -1.700 1.300z" fill="#111"/><circle cx="3.500" cy="4" r=".8" fill="#fff"/><circle cx="3.500" cy="9" r=".8" fill="#fff"/></svg>
<div class="a" style="left:1462.00px;top:51.60px;width:31.00px;height:14.60px;background:#fff;border:1px solid #d3d7de;box-sizing:border-box;border-radius:3px;"></div>
<svg class="a" style="left:1471.50px;top:54.25px;" width="12.00" height="9.50" viewBox="0 0 16 16" preserveAspectRatio="none"><path d="M4 4.5 a5.5 5 0 1 1 -1.2 5.5" fill="none" stroke="#222" stroke-width="1.7" stroke-dasharray="2.2 1.4"/><path d="M1 3 l4.5 -1 l-.5 4.5z" fill="#222"/></svg>
<div class="a" style="left:484.00px;top:70.70px;width:51.00px;height:16.00px;background:#eef0f4;border:1px solid #d3d7de;box-sizing:border-box;border-radius:3px;"></div>
<div class="a" style="left:517.60px;top:71.20px;width:0.80px;height:15.00px;background:#d3d7de;"></div>
<svg class="a" style="left:492.50px;top:74.50px;" width="16.00" height="9.00" viewBox="0 0 16 16" preserveAspectRatio="none"><path d="M1 3 h5 l1.5 1.5 H15 v9 H1z" fill="#666"/></svg>
<svg class="a" style="left:521.50px;top:76.55px;" width="10.00" height="5.50" viewBox="0 0 16 16" preserveAspectRatio="none"><path d="M2 5 L8 11 L14 5" fill="none" stroke="#555" stroke-width="2.4"/></svg>
<div class="a" style="left:540.00px;top:70.70px;width:51.70px;height:16.00px;background:#eef0f4;border:1px solid #d3d7de;box-sizing:border-box;border-radius:3px;"></div>
<svg class="a" style="left:549.50px;top:74.50px;" width="12.00" height="9.00" viewBox="0 0 16 16" preserveAspectRatio="none"><path d="M1.5 1.5 h10.5 l2.5 2.5 v10.5 h-13z" fill="#666"/><rect x="4" y="3" width="6.5" height="3.2" fill="#eef0f4"/><circle cx="8" cy="10.5" r="2.2" fill="#eef0f4"/></svg>
<svg class="a" style="left:577.00px;top:76.55px;" width="10.00" height="5.50" viewBox="0 0 16 16" preserveAspectRatio="none"><path d="M2 5 L8 11 L14 5" fill="none" stroke="#555" stroke-width="2.4"/></svg>
<div class="a" style="left:596.70px;top:70.70px;width:45.00px;height:16.00px;background:#eef0f4;border:1px solid #d3d7de;box-sizing:border-box;border-radius:3px;"></div>
<svg class="a" style="left:604.00px;top:74.75px;" width="15.00" height="8.50" viewBox="0 0 16 16" preserveAspectRatio="none"><path d="M0.5 14 l1.5 -4.5 l9 -6 l3.5 4.500 l-9 6z" fill="#666"/><path d="M11.500 2.800 l1.500 -1 l3 4 l-1.500 1z" fill="#666"/></svg>
<svg class="a" style="left:622.50px;top:76.55px;" width="10.00" height="5.50" viewBox="0 0 16 16" preserveAspectRatio="none"><path d="M2 5 L8 11 L14 5" fill="none" stroke="#555" stroke-width="2.4"/></svg>
<div class="a" style="left:647.30px;top:70.70px;width:51.40px;height:16.00px;background:#2f6895;border-radius:3px;"></div>
<svg class="a" style="left:657.50px;top:74.25px;" width="13.00" height="9.50" viewBox="0 0 16 16" preserveAspectRatio="none"><path d="M1 2 h14 l-5.5 6.5 v5.5 l-3 -1.8 v-3.7z" fill="#fff"/></svg>
<svg class="a" style="left:683.50px;top:76.55px;" width="10.00" height="5.50" viewBox="0 0 16 16" preserveAspectRatio="none"><path d="M2 5 L8 11 L14 5" fill="none" stroke="#fff" stroke-width="2.4"/></svg>
<div class="a" style="left:705.00px;top:70.70px;width:105.00px;height:16.00px;background:#fff;border-radius:3px;"></div>
<span class="t" style="top:75.20px;font-size:9.18px;line-height:9.18px;color:#222;left:715.00px;transform-origin:0 50%;transform:scaleX(1.5697);">No limit</span>
<svg class="a" style="left:788.50px;top:77.05px;" width="9.00" height="4.50" viewBox="0 0 16 16" preserveAspectRatio="none"><path d="M2 5 L14 5 L8 12 Z" fill="#222"/></svg>
<div class="a" style="left:816.70px;top:70.70px;width:116.30px;height:16.00px;background:#eef0f4;border:1px solid #d3d7de;box-sizing:border-box;border-radius:3px;"></div>
<div class="a" style="left:848.60px;top:71.20px;width:0.80px;height:15.00px;background:#d3d7de;"></div>
<div class="a" style="left:880.90px;top:71.20px;width:0.80px;height:15.00px;background:#d3d7de;"></div>
<div class="a" style="left:912.60px;top:71.20px;width:0.80px;height:15.00px;background:#d3d7de;"></div>
<div class="a" style="left:849.40px;top:71.30px;width:31.50px;height:14.80px;background:#fff;"></div>
<svg class="a" style="left:826.00px;top:74.75px;" width="14.00" height="8.50" viewBox="0 0 16 16" preserveAspectRatio="none"><rect x="2" y="3" width="12" height="10" rx="2.5" fill="#777"/></svg>
<svg class="a" style="left:859.50px;top:74.50px;" width="11.00" height="9.00" viewBox="0 0 16 16" preserveAspectRatio="none"><path d="M3 2 L14 8 L3 14z" fill="#111"/></svg>
<svg class="a" style="left:891.00px;top:74.50px;" width="12.00" height="9.00" viewBox="0 0 16 16" preserveAspectRatio="none"><path d="M2 2.5 v11 M2 3 l6 3.5 -6 3.5z" fill="#777b82" stroke="#777b82" stroke-width="1.6"/><path d="M8 8.5 l6 2.5 -6 2.5z" fill="#777b82"/></svg>
<svg class="a" style="left:918.50px;top:76.55px;" width="10.00" height="5.50" viewBox="0 0 16 16" preserveAspectRatio="none"><path d="M2 5 L8 11 L14 5" fill="none" stroke="#555" stroke-width="2.4"/></svg>
<div class="a" style="left:940.00px;top:70.70px;width:83.00px;height:16.00px;background:#eef0f4;border:1px solid #d3d7de;box-sizing:border-box;border-radius:3px;"></div>
<div class="a" style="left:970.60px;top:71.20px;width:0.80px;height:15.00px;background:#d3d7de;"></div>
<div class="a" style="left:1002.60px;top:71.20px;width:0.80px;height:15.00px;background:#d3d7de;"></div>
<svg class="a" style="left:948.50px;top:74.75px;" width="13.00" height="8.50" viewBox="0 0 16 16" preserveAspectRatio="none"><rect x="1" y="2" width="14" height="12" rx="1" fill="#666"/><path d="M5.5 4.8 h5 M5.5 8 h4 M5.5 11.2 h5 M5.8 4.8 v6.4" stroke="#eef0f4" stroke-width="1.6" fill="none"/></svg>
<svg class="a" style="left:980.50px;top:74.75px;" width="13.00" height="8.50" viewBox="0 0 16 16" preserveAspectRatio="none"><rect x="1" y="2" width="14" height="12" rx="1" fill="#666"/><path d="M5 6 v6 M8 4.5 v7.5 M11 9 v3" stroke="#eef0f4" stroke-width="1.8" fill="none"/></svg>
<svg class="a" style="left:1008.50px;top:76.55px;" width="10.00" height="5.50" viewBox="0 0 16 16" preserveAspectRatio="none"><path d="M2 5 L8 11 L14 5" fill="none" stroke="#555" stroke-width="2.4"/></svg>
<div class="a" style="left:1028.00px;top:70.70px;width:65.00px;height:16.00px;background:#eef0f4;border:1px solid #d3d7de;box-sizing:border-box;border-radius:3px;"></div>
<div class="a" style="left:1060.10px;top:71.20px;width:0.80px;height:15.00px;background:#d3d7de;"></div>
<svg class="a" style="left:1036.50px;top:74.00px;" width="15.00" height="10.00" viewBox="0 0 16 16" preserveAspectRatio="none"><path d="M1 2 h12 v3 h-12z M1 6.3 h12 v3 h-12z M1 10.6 h7 v3 h-7z" fill="#777b82"/><circle cx="12" cy="11.5" r="3.6" fill="#777b82"/><circle cx="12" cy="11.5" r="1.6" fill="#eef0f4"/></svg>
<svg class="a" style="left:1069.50px;top:74.00px;" width="15.00" height="10.00" viewBox="0 0 16 16" preserveAspectRatio="none"><path d="M1 2 h12 v3 h-12z M1 6.3 h12 v3 h-12z M1 10.6 h7 v3 h-7z" fill="#777b82"/><circle cx="12" cy="11.5" r="3.6" fill="#777b82"/><circle cx="12" cy="11.5" r="1.6" fill="#eef0f4"/></svg>
<div class="a" style="left:1099.00px;top:70.70px;width:44.00px;height:16.00px;background:#eef0f4;border:1px solid #d3d7de;box-sizing:border-box;border-radius:3px;"></div>
<svg class="a" style="left:1107.50px;top:75.00px;" width="13.00" height="8.00" viewBox="0 0 16 16" preserveAspectRatio="none"><path d="M1 3.5h2M1 8h2M1 12.5h2M5 3.5h10M5 8h10M5 12.5h10" stroke="#777b82" stroke-width="1.7" fill="none"/></svg>
<svg class="a" style="left:1123.50px;top:76.55px;" width="10.00" height="5.50" viewBox="0 0 16 16" preserveAspectRatio="none"><path d="M2 5 L8 11 L14 5" fill="none" stroke="#555" stroke-width="2.4"/></svg>
<div class="a" style="left:1148.00px;top:70.70px;width:33.70px;height:16.00px;background:#fff;border:1px solid #d3d7de;box-sizing:border-box;border-radius:3px;"></div>
<svg class="a" style="left:1159.25px;top:74.00px;" width="13.50" height="10.00" viewBox="0 0 16 16" preserveAspectRatio="none"><circle cx="8" cy="8" r="7.5" fill="#111"/><path d="M5.5 6.2 a2.6 2.4 0 1 1 3.6 2.2 q-1.1 .5 -1.1 1.8" fill="none" stroke="#fff" stroke-width="1.9"/><circle cx="8" cy="12.3" r="1.1" fill="#fff"/></svg>
<div class="a" style="left:477.60px;top:107.60px;width:1019.40px;height:1.00px;background:#e2e5ea;"></div>
<div class="a" style="left:477.60px;top:108.30px;width:47.40px;height:242.50px;background:#f5f6f9;"></div>
<span class="t" style="top:95.20px;font-size:9.18px;line-height:9.18px;color:#2f6895;left:487.00px;transform-origin:0 50%;transform:scaleX(1.4409);">Query</span>
<span class="t" style="top:95.20px;font-size:9.18px;line-height:9.18px;color:#222;left:540.00px;transform-origin:0 50%;transform:scaleX(1.4983);">Query History</span>
<span class="t" style="top:94.90px;font-size:9.18px;line-height:9.18px;color:#3a6d9a;left:1150.70px;transform-origin:0 50%;transform:scaleX(1.4909);">Scratch Pad</span>
<svg class="a" style="left:1233.65px;top:95.85px;" width="9.50" height="6.30" viewBox="0 0 16 16" preserveAspectRatio="none"><path d="M1.5 2 L14.5 14 M14.5 2 L1.5 14" stroke="#222" stroke-width="2.3" fill="none"/></svg>
<div class="a" style="left:1141.00px;top:108.30px;width:1.00px;height:242.50px;background:#dfe2e7;"></div>
<svg class="a" style="left:1469.75px;top:95.20px;" width="13.50" height="8.80" viewBox="0 0 16 16" preserveAspectRatio="none"><path d="M2 14 L14 2" stroke="#222" stroke-width="1.6"/><path d="M14 2 l-6 .8 5.2 5.2z M2 14 l6 -.8 -5.2 -5.2z" fill="#222"/></svg>
<span class="t" style="top:114.10px;font-size:8.07px;line-height:8.07px;color:#999;font-family:'Liberation Mono', monospace;left:491.50px;transform-origin:0 50%;transform:scaleX(1.3000);">1</span>
<span class="t" style="top:113.73px;font-size:8.76px;line-height:8.76px;color:#9b0f9b;font-family:'Liberation Mono', monospace;font-weight:bold;white-space:pre;left:531.00px;transform-origin:0 50%;transform:scaleX(1.5662);">SELECT</span>
<span class="t" style="top:113.73px;font-size:8.76px;line-height:8.76px;color:#888;font-family:'Liberation Mono', monospace;white-space:pre;left:581.16px;transform-origin:0 50%;transform:scaleX(1.4357);"> </span>
<span class="t" style="top:113.73px;font-size:8.76px;line-height:8.76px;color:#888;font-family:'Liberation Mono', monospace;white-space:pre;left:589.52px;transform-origin:0 50%;transform:scaleX(1.4357);">*</span>
<span class="t" style="top:113.73px;font-size:8.76px;line-height:8.76px;color:#888;font-family:'Liberation Mono', monospace;white-space:pre;left:597.88px;transform-origin:0 50%;transform:scaleX(1.4357);"> </span>
<span class="t" style="top:113.73px;font-size:8.76px;line-height:8.76px;color:#9b0f9b;font-family:'Liberation Mono', monospace;font-weight:bold;white-space:pre;left:606.24px;transform-origin:0 50%;transform:scaleX(1.5531);">FROM</span>
<span class="t" style="top:113.73px;font-size:8.76px;line-height:8.76px;color:#888;font-family:'Liberation Mono', monospace;white-space:pre;left:639.68px;transform-origin:0 50%;transform:scaleX(1.4357);"> </span>
<span class="t" style="top:113.73px;font-size:8.76px;line-height:8.76px;color:#6c8eb5;font-family:'Liberation Mono', monospace;white-space:pre;left:648.04px;transform-origin:0 50%;transform:scaleX(1.5878);">public.agro_rural_system_indicators</span>
<span class="t" style="top:126.10px;font-size:8.07px;line-height:8.07px;color:#999;font-family:'Liberation Mono', monospace;left:491.50px;transform-origin:0 50%;transform:scaleX(1.3000);">2</span>
<span class="t" style="top:125.73px;font-size:8.76px;line-height:8.76px;color:#9b0f9b;font-family:'Liberation Mono', monospace;font-weight:bold;white-space:pre;left:531.00px;transform-origin:0 50%;transform:scaleX(1.5727);">ORDER BY</span>
<span class="t" style="top:125.73px;font-size:8.76px;line-height:8.76px;color:#888;font-family:'Liberation Mono', monospace;white-space:pre;left:597.88px;transform-origin:0 50%;transform:scaleX(1.4357);"> </span>
<span class="t" style="top:125.73px;font-size:8.76px;line-height:8.76px;color:#6c8eb5;font-family:'Liberation Mono', monospace;white-space:pre;left:606.24px;transform-origin:0 50%;transform:scaleX(1.5662);">ars_id</span>
<span class="t" style="top:125.73px;font-size:8.76px;line-height:8.76px;color:#888;font-family:'Liberation Mono', monospace;white-space:pre;left:656.40px;transform-origin:0 50%;transform:scaleX(1.4357);"> </span>
<span class="t" style="top:125.73px;font-size:8.76px;line-height:8.76px;color:#9b0f9b;font-family:'Liberation Mono', monospace;font-weight:bold;white-space:pre;left:664.76px;transform-origin:0 50%;transform:scaleX(1.5401);">ASC</span>
<div class="a" style="left:477.60px;top:350.80px;width:1019.40px;height:1.00px;background:#e2e5ea;"></div>
<span class="t" style="top:355.90px;font-size:9.18px;line-height:9.18px;color:#2f6895;left:487.80px;transform-origin:0 50%;transform:scaleX(1.5161);">Data Output</span>
<div class="a" style="left:477.60px;top:367.20px;width:90.70px;height:1.50px;background:#2f6895;"></div>
<span class="t" style="top:355.90px;font-size:9.18px;line-height:9.18px;color:#222;left:579.00px;transform-origin:0 50%;transform:scaleX(1.5067);">Messages</span>
<span class="t" style="top:355.90px;font-size:9.18px;line-height:9.18px;color:#222;left:659.30px;transform-origin:0 50%;transform:scaleX(1.6010);">Notifications</span>
<svg class="a" style="left:1469.45px;top:356.20px;" width="13.50" height="8.80" viewBox="0 0 16 16" preserveAspectRatio="none"><path d="M2 14 L14 2" stroke="#222" stroke-width="1.6"/><path d="M14 2 l-6 .8 5.2 5.2z M2 14 l6 -.8 -5.2 -5.2z" fill="#222"/></svg>
<div class="a" style="left:477.60px;top:368.90px;width:1019.40px;height:20.90px;background:#ebeef3;"></div>
<div class="a" style="left:481.60px;top:371.70px;width:32.40px;height:15.20px;background:#fff;border:1px solid #d3d7de;box-sizing:border-box;border-radius:3px;"></div>
<svg class="a" style="left:488.50px;top:374.45px;" width="18.00" height="9.50" viewBox="0 0 16 16" preserveAspectRatio="none"><path d="M1 4h9M1 7.5h9M1 11h5" stroke="#111" stroke-width="1.6"/><path d="M9 10.5h6M12 7.5v6" stroke="#111" stroke-width="1.8"/></svg>
<div class="a" style="left:517.70px;top:371.70px;width:131.70px;height:15.20px;background:#eef0f4;border:1px solid #d3d7de;box-sizing:border-box;border-radius:3px;"></div>
<div class="a" style="left:518.50px;top:372.30px;width:79.00px;height:14.00px;background:#fff;border-radius:2px;"></div>
<svg class="a" style="left:523.50px;top:373.95px;" width="14.00" height="10.50" viewBox="0 0 16 16" preserveAspectRatio="none"><rect x="1.5" y="1.5" width="9" height="10" rx="1" fill="none" stroke="#666" stroke-width="1.5"/><rect x="4.5" y="4.5" width="10" height="10.5" rx="1" fill="#666"/></svg>
<svg class="a" style="left:547.50px;top:376.75px;" width="10.00" height="5.50" viewBox="0 0 16 16" preserveAspectRatio="none"><path d="M2 5 L8 11 L14 5" fill="none" stroke="#222" stroke-width="2.4"/></svg>
<svg class="a" style="left:572.50px;top:373.70px;" width="14.00" height="11.00" viewBox="0 0 16 16" preserveAspectRatio="none"><rect x="2" y="3" width="12" height="12" rx="1" fill="none" stroke="#111" stroke-width="1.8"/><rect x="5.5" y="1" width="5" height="4" fill="#111"/></svg>
<div class="a" style="left:597.50px;top:372.20px;width:0.80px;height:14.20px;background:#d3d7de;"></div>
<svg class="a" style="left:602.00px;top:376.75px;" width="10.00" height="5.50" viewBox="0 0 16 16" preserveAspectRatio="none"><path d="M2 5 L8 11 L14 5" fill="none" stroke="#222" stroke-width="2.4"/></svg>
<svg class="a" style="left:627.00px;top:374.45px;" width="12.00" height="9.50" viewBox="0 0 16 16" preserveAspectRatio="none"><path d="M2 3.5h12v2H2z M3.5 6.5h9l-.8 8.5h-7.4z" fill="#777"/><rect x="6" y="1.5" width="4" height="2" fill="#777"/></svg>
<div class="a" style="left:654.80px;top:371.70px;width:32.50px;height:15.20px;background:#eef0f4;border:1px solid #d3d7de;box-sizing:border-box;border-radius:3px;"></div>
<svg class="a" style="left:663.50px;top:374.20px;" width="15.00" height="10.00" viewBox="0 0 16 16" preserveAspectRatio="none"><path d="M1 2 h12 v3 h-12z M1 6.3 h12 v3 h-12z M1 10.6 h7 v3 h-7z" fill="#777"/><circle cx="12" cy="11.5" r="3.6" fill="#777"/><circle cx="12" cy="11.5" r="1.6" fill="#eef0f4"/></svg>
<div class="a" style="left:692.70px;top:371.70px;width:30.60px;height:15.20px;background:#fff;border:1px solid #d3d7de;box-sizing:border-box;border-radius:3px;"></div>
<svg class="a" style="left:702.00px;top:374.45px;" width="12.00" height="9.50" viewBox="0 0 16 16" preserveAspectRatio="none"><path d="M6.2 1.5h3.6v5h3l-4.8 5-4.8-5h3z M2.5 13h11v1.8h-11z" fill="#111"/></svg>
<div class="a" style="left:728.80px;top:371.70px;width:33.50px;height:15.20px;background:#fff;border:1px solid #d3d7de;box-sizing:border-box;border-radius:3px;"></div>
<svg class="a" style="left:737.00px;top:375.45px;" width="17.00" height="7.50" viewBox="0 0 16 16" preserveAspectRatio="none"><path d="M1 11.5 L5.5 7 L8.5 9.5 L11.5 5.5 L15 7.5" fill="none" stroke="#111" stroke-width="2"/></svg>
<span class="t" style="top:375.50px;font-size:9.18px;line-height:9.18px;color:#222;left:998.40px;transform-origin:0 50%;transform:scaleX(1.5292);">Showing rows: 1 to 2</span>
<div class="a" style="left:1132.90px;top:371.70px;width:29.80px;height:15.20px;background:#fff;border:1px solid #d3d7de;box-sizing:border-box;border-radius:3px;"></div>
<svg class="a" style="left:1140.90px;top:375.20px;" width="14.00" height="8.00" viewBox="0 0 16 16" preserveAspectRatio="none"><path d="M0.500 15 l1.200 -4.500 l8.500 -7.500 l3.500 3.500 l-8.500 7.500z M11.200 2 l1.500 -1.300 l3 3.200 l-1.500 1.300z" fill="#111"/></svg>
<span class="t" style="top:375.50px;font-size:9.18px;line-height:9.18px;color:#222;left:1174.70px;transform-origin:0 50%;transform:scaleX(1.4641);">Page No:</span>
<div class="a" style="left:1235.70px;top:371.70px;width:87.00px;height:15.20px;background:#fff;border-radius:3px;"></div>
<span class="t" style="top:375.50px;font-size:9.18px;line-height:9.18px;color:#222;left:1249.90px;transform-origin:0 50%;transform:scaleX(1.3000);">1</span>
<span class="t" style="top:375.50px;font-size:9.18px;line-height:9.18px;color:#222;left:1327.90px;transform-origin:0 50%;transform:scaleX(1.4563);">of 1</span>
<div class="a" style="left:1365.20px;top:371.70px;width:129.80px;height:15.20px;background:#eef0f4;border:1px solid #d3d7de;box-sizing:border-box;border-radius:3px;"></div>
<div class="a" style="left:1397.80px;top:372.20px;width:0.80px;height:14.20px;background:#d3d7de;"></div>
<div class="a" style="left:1430.20px;top:372.20px;width:0.80px;height:14.20px;background:#d3d7de;"></div>
<div class="a" style="left:1462.60px;top:372.20px;width:0.80px;height:14.20px;background:#d3d7de;"></div>
<svg class="a" style="left:1376.20px;top:375.95px;" width="11.00" height="6.50" viewBox="0 0 16 16" preserveAspectRatio="none"><path d="M3 3v10" stroke="#70747b" stroke-width="1.8"/><path d="M13 3 L5 8 L13 13z" fill="#70747b"/></svg>
<svg class="a" style="left:1408.70px;top:375.95px;" width="11.00" height="6.50" viewBox="0 0 16 16" preserveAspectRatio="none"><path d="M8 3 L1 8 L8 13z M15.5 3 L8.5 8 L15.5 13z" fill="#70747b"/></svg>
<svg class="a" style="left:1441.00px;top:375.95px;" width="11.00" height="6.50" viewBox="0 0 16 16" preserveAspectRatio="none"><path d="M8 3 L15 8 L8 13z M0.5 3 L7.5 8 L0.5 13z" fill="#70747b"/></svg>
<svg class="a" style="left:1473.50px;top:375.95px;" width="11.00" height="6.50" viewBox="0 0 16 16" preserveAspectRatio="none"><path d="M13 3v10" stroke="#70747b" stroke-width="1.8"/><path d="M3 3 L11 8 L3 13z" fill="#70747b"/></svg>
<div class="a" style="left:477.60px;top:389.80px;width:1019.40px;height:23.40px;background:#b9c0ce;"></div>
<div class="a" style="left:477.60px;top:413.20px;width:1019.40px;height:15.25px;background:#e9ecf2;"></div>
<div class="a" style="left:477.60px;top:428.45px;width:1019.40px;height:15.25px;background:#fff;"></div>
<div class="a" style="left:477.60px;top:413.20px;width:45.40px;height:30.50px;background:#b9c0ce;"></div>
<div class="a" style="left:477.60px;top:428.05px;width:1019.40px;height:0.80px;background:#d9dde5;"></div>
<span class="t" style="top:417.29px;font-size:8.50px;line-height:8.50px;color:#333;left:488.50px;transform-origin:0 50%;transform:scaleX(1.3000);">1</span>
<div class="a" style="left:477.60px;top:443.30px;width:1019.40px;height:0.80px;background:#d9dde5;"></div>
<span class="t" style="top:432.54px;font-size:8.50px;line-height:8.50px;color:#333;left:488.50px;transform-origin:0 50%;transform:scaleX(1.3000);">2</span>
<div class="a" style="left:542.15px;top:389.80px;width:0.70px;height:23.40px;background:#c9cfda;"></div>
<div class="a" style="left:542.15px;top:413.20px;width:0.70px;height:30.50px;background:#dde1e8;"></div>
<div class="a" style="left:694.15px;top:389.80px;width:0.70px;height:23.40px;background:#c9cfda;"></div>
<div class="a" style="left:694.15px;top:413.20px;width:0.70px;height:30.50px;background:#dde1e8;"></div>
<div class="a" style="left:834.65px;top:389.80px;width:0.70px;height:23.40px;background:#c9cfda;"></div>
<div class="a" style="left:834.65px;top:413.20px;width:0.70px;height:30.50px;background:#dde1e8;"></div>
<div class="a" style="left:902.65px;top:389.80px;width:0.70px;height:23.40px;background:#c9cfda;"></div>
<div class="a" style="left:902.65px;top:413.20px;width:0.70px;height:30.50px;background:#dde1e8;"></div>
<div class="a" style="left:996.95px;top:389.80px;width:0.70px;height:23.40px;background:#c9cfda;"></div>
<div class="a" style="left:996.95px;top:413.20px;width:0.70px;height:30.50px;background:#dde1e8;"></div>
<div class="a" style="left:1107.65px;top:389.80px;width:0.70px;height:23.40px;background:#c9cfda;"></div>
<div class="a" style="left:1107.65px;top:413.20px;width:0.70px;height:30.50px;background:#dde1e8;"></div>
<div class="a" style="left:1204.25px;top:389.80px;width:0.70px;height:23.40px;background:#c9cfda;"></div>
<div class="a" style="left:1204.25px;top:413.20px;width:0.70px;height:30.50px;background:#dde1e8;"></div>
<div class="a" style="left:1322.95px;top:389.80px;width:0.70px;height:23.40px;background:#c9cfda;"></div>
<div class="a" style="left:1322.95px;top:413.20px;width:0.70px;height:30.50px;background:#dde1e8;"></div>
<div class="a" style="left:1383.95px;top:389.80px;width:0.70px;height:23.40px;background:#c9cfda;"></div>
<div class="a" style="left:1383.95px;top:413.20px;width:0.70px;height:30.50px;background:#dde1e8;"></div>
<div class="a" style="left:1475.05px;top:389.80px;width:0.70px;height:23.40px;background:#c9cfda;"></div>
<div class="a" style="left:1475.05px;top:413.20px;width:0.70px;height:30.50px;background:#dde1e8;"></div>
<svg class="a" style="left:526.00px;top:398.55px;" width="10.00" height="6.50" viewBox="0 0 16 16" preserveAspectRatio="none"><path d="M0.5 14 l1.5 -4.5 l9 -6 l3.5 4.500 l-9 6z" fill="#111"/><path d="M11.500 2.800 l1.500 -1 l3 4 l-1.500 1z" fill="#111"/></svg>
<span class="t" style="top:417.39px;font-size:8.50px;line-height:8.50px;color:#333;left:524.50px;transform-origin:0 50%;transform:scaleX(1.4200);">2</span>
<span class="t" style="top:432.64px;font-size:8.50px;line-height:8.50px;color:#333;left:524.50px;transform-origin:0 50%;transform:scaleX(1.4200);">4</span>
<span class="t" style="top:393.16px;font-size:8.33px;line-height:8.33px;color:#1d1d1d;font-weight:bold;left:545.50px;transform-origin:0 50%;transform:scaleX(1.3482);">indicator_name</span>
<span class="t" style="top:402.86px;font-size:8.33px;line-height:8.33px;color:#333;left:545.50px;transform-origin:0 50%;transform:scaleX(1.4479);">character varying (255)</span>
<svg class="a" style="left:677.00px;top:398.55px;" width="10.00" height="6.50" viewBox="0 0 16 16" preserveAspectRatio="none"><path d="M0.5 14 l1.5 -4.5 l9 -6 l3.5 4.500 l-9 6z" fill="#111"/><path d="M11.500 2.800 l1.500 -1 l3 4 l-1.500 1z" fill="#111"/></svg>
<span class="t" style="top:417.39px;font-size:8.50px;line-height:8.50px;color:#333;left:547.50px;transform-origin:0 50%;transform:scaleX(1.3995);">Parcela Ullinjve</span>
<span class="t" style="top:432.64px;font-size:8.50px;line-height:8.50px;color:#333;left:547.50px;transform-origin:0 50%;transform:scaleX(1.3726);">Olive Tree Parcel</span>
<span class="t" style="top:393.16px;font-size:8.33px;line-height:8.33px;color:#1d1d1d;font-weight:bold;left:701.00px;transform-origin:0 50%;transform:scaleX(1.3254);">description</span>
<span class="t" style="top:402.86px;font-size:8.33px;line-height:8.33px;color:#333;left:701.00px;transform-origin:0 50%;transform:scaleX(1.4884);">text</span>
<svg class="a" style="left:815.00px;top:398.55px;" width="10.00" height="6.50" viewBox="0 0 16 16" preserveAspectRatio="none"><path d="M0.5 14 l1.5 -4.5 l9 -6 l3.5 4.500 l-9 6z" fill="#111"/><path d="M11.500 2.800 l1.500 -1 l3 4 l-1.500 1z" fill="#111"/></svg>
<span class="t" style="top:417.39px;font-size:8.50px;line-height:8.50px;color:#333;left:704.00px;transform-origin:0 50%;transform:scaleX(1.3621);">Sipërfaqe bujqësore ...</span>
<span class="t" style="top:432.64px;font-size:8.50px;line-height:8.50px;color:#333;left:704.00px;transform-origin:0 50%;transform:scaleX(1.4109);">Agricultural land dedi...</span>
<span class="t" style="top:393.16px;font-size:8.33px;line-height:8.33px;color:#1d1d1d;font-weight:bold;left:840.00px;transform-origin:0 50%;transform:scaleX(1.3188);">unit_id</span>
<span class="t" style="top:402.86px;font-size:8.33px;line-height:8.33px;color:#333;left:840.00px;transform-origin:0 50%;transform:scaleX(1.4920);">integer</span>
<svg class="a" style="left:884.00px;top:398.55px;" width="10.00" height="6.50" viewBox="0 0 16 16" preserveAspectRatio="none"><path d="M0.5 14 l1.5 -4.5 l9 -6 l3.5 4.500 l-9 6z" fill="#111"/><path d="M11.500 2.800 l1.500 -1 l3 4 l-1.500 1z" fill="#111"/></svg>
<span class="t" style="top:417.39px;font-size:8.50px;line-height:8.50px;color:#333;right:606.00px;transform-origin:100% 50%;transform:scaleX(1.3500);">2</span>
<span class="t" style="top:432.64px;font-size:8.50px;line-height:8.50px;color:#333;right:606.00px;transform-origin:100% 50%;transform:scaleX(1.3500);">2</span>
<span class="t" style="top:393.16px;font-size:8.33px;line-height:8.33px;color:#1d1d1d;font-weight:bold;left:909.00px;transform-origin:0 50%;transform:scaleX(1.3166);">reliability_id</span>
<span class="t" style="top:402.86px;font-size:8.33px;line-height:8.33px;color:#333;left:909.00px;transform-origin:0 50%;transform:scaleX(1.4920);">integer</span>
<svg class="a" style="left:979.40px;top:398.55px;" width="10.00" height="6.50" viewBox="0 0 16 16" preserveAspectRatio="none"><path d="M0.5 14 l1.5 -4.5 l9 -6 l3.5 4.500 l-9 6z" fill="#111"/><path d="M11.500 2.800 l1.500 -1 l3 4 l-1.500 1z" fill="#111"/></svg>
<span class="t" style="top:417.39px;font-size:8.50px;line-height:8.50px;color:#333;right:509.00px;transform-origin:100% 50%;transform:scaleX(1.3500);">2</span>
<span class="t" style="top:432.64px;font-size:8.50px;line-height:8.50px;color:#333;right:509.00px;transform-origin:100% 50%;transform:scaleX(1.3500);">2</span>
<span class="t" style="top:393.16px;font-size:8.33px;line-height:8.33px;color:#1d1d1d;font-weight:bold;left:1003.80px;transform-origin:0 50%;transform:scaleX(1.3173);">source_type_id</span>
<span class="t" style="top:402.86px;font-size:8.33px;line-height:8.33px;color:#333;left:1003.80px;transform-origin:0 50%;transform:scaleX(1.4920);">integer</span>
<svg class="a" style="left:1090.60px;top:398.55px;" width="10.00" height="6.50" viewBox="0 0 16 16" preserveAspectRatio="none"><path d="M0.5 14 l1.5 -4.5 l9 -6 l3.5 4.500 l-9 6z" fill="#111"/><path d="M11.500 2.800 l1.500 -1 l3 4 l-1.500 1z" fill="#111"/></svg>
<span class="t" style="top:417.39px;font-size:8.50px;line-height:8.50px;color:#333;right:397.00px;transform-origin:100% 50%;transform:scaleX(1.3500);">2</span>
<span class="t" style="top:432.64px;font-size:8.50px;line-height:8.50px;color:#333;right:397.00px;transform-origin:100% 50%;transform:scaleX(1.3500);">1</span>
<span class="t" style="top:393.16px;font-size:8.33px;line-height:8.33px;color:#1d1d1d;font-weight:bold;left:1115.00px;transform-origin:0 50%;transform:scaleX(1.3398);">draft_question</span>
<span class="t" style="top:402.86px;font-size:8.33px;line-height:8.33px;color:#333;left:1115.00px;transform-origin:0 50%;transform:scaleX(1.4884);">text</span>
<svg class="a" style="left:1198.00px;top:398.55px;" width="10.00" height="6.50" viewBox="0 0 16 16" preserveAspectRatio="none"><path d="M0.5 14 l1.5 -4.5 l9 -6 l3.5 4.500 l-9 6z" fill="#111"/><path d="M11.500 2.800 l1.500 -1 l3 4 l-1.500 1z" fill="#111"/></svg>
<span class="t" style="top:417.39px;font-size:8.50px;line-height:8.50px;color:#333;left:1116.70px;transform-origin:0 50%;transform:scaleX(1.4748);">[null]</span>
<span class="t" style="top:432.64px;font-size:8.50px;line-height:8.50px;color:#333;left:1116.70px;transform-origin:0 50%;transform:scaleX(1.4052);">What is the c...</span>
<span class="t" style="top:393.16px;font-size:8.33px;line-height:8.33px;color:#1d1d1d;font-weight:bold;left:1211.00px;transform-origin:0 50%;transform:scaleX(1.3387);">source_name_id</span>
<span class="t" style="top:402.86px;font-size:8.33px;line-height:8.33px;color:#333;left:1211.00px;transform-origin:0 50%;transform:scaleX(1.4920);">integer</span>
<svg class="a" style="left:1304.70px;top:398.55px;" width="10.00" height="6.50" viewBox="0 0 16 16" preserveAspectRatio="none"><path d="M0.5 14 l1.5 -4.5 l9 -6 l3.5 4.500 l-9 6z" fill="#111"/><path d="M11.500 2.800 l1.500 -1 l3 4 l-1.500 1z" fill="#111"/></svg>
<span class="t" style="top:417.39px;font-size:8.50px;line-height:8.50px;color:#333;right:182.00px;transform-origin:100% 50%;transform:scaleX(1.3500);">21</span>
<span class="t" style="top:432.64px;font-size:8.50px;line-height:8.50px;color:#333;right:182.00px;transform-origin:100% 50%;transform:scaleX(1.3500);">3</span>
<span class="t" style="top:393.16px;font-size:8.33px;line-height:8.33px;color:#1d1d1d;font-weight:bold;left:1329.40px;transform-origin:0 50%;transform:scaleX(1.3502);">notes</span>
<span class="t" style="top:402.86px;font-size:8.33px;line-height:8.33px;color:#333;left:1329.40px;transform-origin:0 50%;transform:scaleX(1.4884);">text</span>
<svg class="a" style="left:1366.40px;top:398.55px;" width="10.00" height="6.50" viewBox="0 0 16 16" preserveAspectRatio="none"><path d="M0.5 14 l1.5 -4.5 l9 -6 l3.5 4.500 l-9 6z" fill="#111"/><path d="M11.500 2.800 l1.500 -1 l3 4 l-1.500 1z" fill="#111"/></svg>
<span class="t" style="top:417.39px;font-size:8.50px;line-height:8.50px;color:#333;left:1332.40px;transform-origin:0 50%;transform:scaleX(1.4191);">[null]</span>
<span class="t" style="top:432.64px;font-size:8.50px;line-height:8.50px;color:#333;left:1332.40px;transform-origin:0 50%;transform:scaleX(1.4191);">[null]</span>
<span class="t" style="top:393.16px;font-size:8.33px;line-height:8.33px;color:#1d1d1d;font-weight:bold;left:1390.40px;transform-origin:0 50%;transform:scaleX(1.3361);">local_value</span>
<span class="t" style="top:402.86px;font-size:8.33px;line-height:8.33px;color:#333;left:1390.40px;transform-origin:0 50%;transform:scaleX(1.3502);">numeric</span>
<svg class="a" style="left:1457.00px;top:398.55px;" width="10.00" height="6.50" viewBox="0 0 16 16" preserveAspectRatio="none"><path d="M0.5 14 l1.5 -4.5 l9 -6 l3.5 4.500 l-9 6z" fill="#111"/><path d="M11.500 2.800 l1.500 -1 l3 4 l-1.500 1z" fill="#111"/></svg>
<span class="t" style="top:417.39px;font-size:8.50px;line-height:8.50px;color:#333;right:30.00px;transform-origin:100% 50%;transform:scaleX(1.3500);">[null]</span>
<span class="t" style="top:432.64px;font-size:8.50px;line-height:8.50px;color:#333;right:30.00px;transform-origin:100% 50%;transform:scaleX(1.3500);">[null]</span>
<span class="t" style="top:393.16px;font-size:8.33px;line-height:8.33px;color:#1d1d1d;font-weight:bold;left:1481.90px;transform-origin:0 50%;transform:scaleX(1.4500);">loc</span>
<span class="t" style="top:402.86px;font-size:8.33px;line-height:8.33px;color:#333;left:1481.90px;transform-origin:0 50%;transform:scaleX(1.4500);">int</span>
<div class="a" style="left:477.60px;top:486.00px;width:1019.40px;height:5.50px;background:#f0f2f5;"></div>
<div class="a" style="left:503.00px;top:486.50px;width:263.60px;height:4.50px;background:#d2d5db;border-radius:2px;"></div>
<div class="a" style="left:0.00px;top:491.50px;width:1497.00px;height:12.00px;background:#fff;"></div>
<div class="a" style="left:1094.00px;top:96.00px;width:53.50px;height:16.30px;background:#1b1b1b;border-radius:3.5px;"></div>
<svg class="a" style="left:1115.50px;top:92.60px;" width="9.00" height="4.00" viewBox="0 0 9 4" preserveAspectRatio="none"><path d="M0 4 L4.5 0 L9 4z" fill="#1b1b1b"/></svg>
<span class="t" style="top:99.30px;font-size:9.00px;line-height:9.00px;color:#fff;left:1102.50px;transform-origin:0 50%;transform:scaleX(1.2366);">Macros</span>
<span class="t" style="top:77.37px;font-size:8.50px;line-height:8.50px;color:#c9d0dc;opacity:0.6;left:1186.00px;transform-origin:0 50%;transform:scaleX(1.0305);">irregolare</span>
<div class="a" style="left:1223.00px;top:77.00px;width:57.00px;height:11.00px;background:#e3eaf5;opacity:.7;"></div>
<svg class="a" style="left:8.79px;top:512.36px;" width="13.91" height="10.84" viewBox="0 0 16 16" preserveAspectRatio="none"><path d="M1 1.5 q0 -1.500 2.500 -1.500 h9 q3 0 3 3 q0 4 -2 6 q-1 1 -1 3.500 q0 1.500 -1.300 1.500 q-1.200 0 -1.200 -2 v-3 q-1.500 .8 -3 0 v5.500 q0 1.500 -1.200 1.500 q-1.300 0 -1.300 -1.500 v-6 q-3.500 -1.500 -3.500 -7z" fill="#336791"/><path d="M6 3.5 v5 M10 3 v6" stroke="#fff" stroke-width="1"/></svg>
<span class="t" style="top:513.52px;font-size:9.21px;line-height:9.21px;color:#444;left:28.67px;transform-origin:0 50%;transform:scaleX(1.2876);">pgAdmin 4</span>
<span class="t" style="top:531.40px;font-size:9.21px;line-height:9.21px;color:#4a4a4a;left:7.40px;transform-origin:0 50%;transform:scaleX(1.1115);">File</span>
<span class="t" style="top:531.40px;font-size:9.21px;line-height:9.21px;color:#4a4a4a;left:37.61px;transform-origin:0 50%;transform:scaleX(1.2326);">Object</span>
<span class="t" style="top:531.40px;font-size:9.21px;line-height:9.21px;color:#4a4a4a;left:83.33px;transform-origin:0 50%;transform:scaleX(1.2028);">Tools</span>
<span class="t" style="top:531.40px;font-size:9.21px;line-height:9.21px;color:#4a4a4a;left:122.09px;transform-origin:0 50%;transform:scaleX(1.1907);">Edit</span>
<span class="t" style="top:531.40px;font-size:9.21px;line-height:9.21px;color:#4a4a4a;left:153.90px;transform-origin:0 50%;transform:scaleX(1.2561);">View</span>
<span class="t" style="top:531.40px;font-size:9.21px;line-height:9.21px;color:#4a4a4a;left:192.66px;transform-origin:0 50%;transform:scaleX(1.2752);">Window</span>
<span class="t" style="top:531.40px;font-size:9.21px;line-height:9.21px;color:#4a4a4a;left:247.32px;transform-origin:0 50%;transform:scaleX(1.2596);">Help</span>
<svg class="a" style="left:1419.80px;top:511.70px;" width="13.00" height="11.00" viewBox="0 0 16 16" preserveAspectRatio="none"><rect x="2.5" y="3" width="11" height="10" fill="none" stroke="#222" stroke-width="1.3"/></svg>
<svg class="a" style="left:1467.10px;top:511.70px;" width="13.00" height="11.00" viewBox="0 0 16 16" preserveAspectRatio="none"><path d="M2.5 2.5 L13.5 13.5 M13.5 2.5 L2.5 13.5" stroke="#222" stroke-width="1.1" fill="none"/></svg>
<div class="a" style="left:1.74px;top:545.42px;width:36.67px;height:24.93px;background:#ddeefa;"></div>
<div class="a" style="left:38.42px;top:545.42px;width:1.89px;height:24.93px;background:#2f6895;"></div>
<svg class="a" style="left:10.78px;top:552.47px;" width="18.88" height="11.92" viewBox="0 0 16 16" preserveAspectRatio="none"><circle cx="3" cy="5" r="3" fill="#111"/><rect x="9" y="2" width="7" height="5.5" rx="1.5" fill="#111"/><rect x="9" y="9.5" width="7" height="5.5" rx="1.5" fill="#111"/><path d="M5 5 H10 M7.5 5 V12.5 H10" stroke="#111" stroke-width="1.6" fill="none"/></svg>
<svg class="a" style="left:12.77px;top:579.84px;" width="14.91" height="11.38" viewBox="0 0 16 16" preserveAspectRatio="none"><path d="M1 3 q0 -2 7 -2 q7 0 7 2 v3 h-14z M1 7.200 h14 v3 q0 .8 -2 1.200 l-3 -1.500 v3.100 q-9 .3 -9 -2.300z" fill="#111"/><path d="M10.500 10.200 l5.300 2.700 -2.300 .4 1.200 2.300 -1.300 .5 -1.200 -2.300 -1.700 1.300z" fill="#111"/><circle cx="3.500" cy="4" r=".8" fill="#fff"/><circle cx="3.500" cy="9" r=".8" fill="#fff"/></svg>
<svg class="a" style="left:11.78px;top:606.39px;" width="16.90" height="10.30" viewBox="0 0 16 16" preserveAspectRatio="none"><rect x="0.8" y="2" width="14.4" height="12" rx="1" fill="none" stroke="#111" stroke-width="1.8"/><path d="M3.5 5.5 L6.5 8 L3.5 10.5 M8 11 H12" stroke="#111" stroke-width="1.5" fill="none"/></svg>
<svg class="a" style="left:11.78px;top:631.60px;" width="16.90" height="11.92" viewBox="0 0 16 16" preserveAspectRatio="none"><rect x="1" y="5" width="8" height="9.5" fill="none" stroke="#666" stroke-width="1.5"/><rect x="7" y="1.5" width="8" height="9.5" fill="#fff" stroke="#666" stroke-width="1.5"/><path d="M3 9.5h4M5 7.5v4M9.5 6h3.5" stroke="#666" stroke-width="1.2"/></svg>
<span class="t" style="top:549.75px;font-size:9.95px;line-height:9.95px;color:#222;left:47.55px;transform-origin:0 50%;transform:scaleX(1.3639);">Object Explorer</span>
<div class="a" style="left:40.30px;top:565.58px;width:441.09px;height:0.87px;background:#e2e5ea;"></div>
<div class="a" style="left:329.33px;top:547.15px;width:143.12px;height:16.04px;background:#fff;border:1px solid #c9cdd4;box-sizing:border-box;border-radius:3px;"></div>
<div class="a" style="left:357.56px;top:547.59px;width:0.80px;height:15.18px;background:#d3d7de;"></div>
<div class="a" style="left:386.18px;top:547.59px;width:0.80px;height:15.18px;background:#d3d7de;"></div>
<div class="a" style="left:414.81px;top:547.59px;width:0.80px;height:15.18px;background:#d3d7de;"></div>
<div class="a" style="left:443.43px;top:547.59px;width:0.80px;height:15.18px;background:#d3d7de;"></div>
<svg class="a" style="left:336.68px;top:550.30px;" width="13.91" height="9.76" viewBox="0 0 16 16" preserveAspectRatio="none"><path d="M1 3 q0 -2 7 -2 q7 0 7 2 v3 h-14z M1 7.200 h14 v3 q0 .8 -2 1.200 l-3 -1.500 v3.100 q-9 .3 -9 -2.300z" fill="#111"/><path d="M10.500 10.200 l5.300 2.700 -2.300 .4 1.200 2.300 -1.300 .5 -1.200 -2.300 -1.700 1.300z" fill="#111"/><circle cx="3.500" cy="4" r=".8" fill="#fff"/><circle cx="3.500" cy="9" r=".8" fill="#fff"/></svg>
<svg class="a" style="left:365.31px;top:550.57px;" width="13.91" height="9.21" viewBox="0 0 16 16" preserveAspectRatio="none"><rect x="1" y="2.5" width="14" height="11" fill="none" stroke="#777" stroke-width="1.6"/><path d="M1 6.2h14M1 9.9h14M5.7 2.5v11M10.4 2.5v11" stroke="#777" stroke-width="1.3"/></svg>
<svg class="a" style="left:393.44px;top:550.30px;" width="14.91" height="9.76" viewBox="0 0 16 16" preserveAspectRatio="none"><path d="M1 3 h10 l-4 4.5 v4 l-2 -1.2 v-2.8z" fill="#777"/><rect x="9" y="7.5" width="6.5" height="6" fill="none" stroke="#777" stroke-width="1.3"/><path d="M9 10.5h6.5M12.2 7.5v6" stroke="#777" stroke-width="1"/></svg>
<svg class="a" style="left:423.55px;top:549.76px;" width="11.93" height="10.84" viewBox="0 0 16 16" preserveAspectRatio="none"><circle cx="6.5" cy="6.5" r="4.8" fill="none" stroke="#111" stroke-width="2"/><path d="M10 10 L15 15" stroke="#111" stroke-width="2.4"/></svg>
<svg class="a" style="left:449.69px;top:549.76px;" width="16.90" height="10.84" viewBox="0 0 16 16" preserveAspectRatio="none"><rect x="0.5" y="1.5" width="15" height="13" rx="1.2" fill="#111"/><rect x="2" y="3.5" width="12" height="9.5" fill="#fff"/><path d="M3.5 5.8 L6.2 8.2 L3.5 10.6 M7.5 11 H11.5" stroke="#111" stroke-width="1.5" fill="none"/></svg>
<div class="a" style="left:467.18px;top:566.45px;width:15.80px;height:477.55px;background:#f0f2f5;"></div>
<div class="a" style="left:134.13px;top:566.45px;width:1.00px;height:477.55px;background:#e4e6ea;"></div>
<div class="a" style="left:150.33px;top:770.13px;width:1.00px;height:273.87px;background:#e4e6ea;"></div>
<div class="a" style="left:472.15px;top:628.89px;width:6.56px;height:97.56px;background:#c6cad2;border-radius:3px;"></div>
<div class="a" style="left:39.81px;top:754.31px;width:427.38px;height:15.83px;background:#d6ebf9;"></div>
<div class="a" style="left:464.50px;top:754.31px;width:2.68px;height:15.83px;background:#2b5b84;"></div>
<svg class="a" style="left:146.05px;top:571.00px;" width="5.17" height="6.07" viewBox="0 0 16 16" preserveAspectRatio="none"><path d="M3 2 L13 8 L3 14" fill="none" stroke="#333" stroke-width="3"/></svg>
<svg class="a" style="left:158.87px;top:567.91px;" width="14.91" height="11.38" viewBox="0 0 16 16" preserveAspectRatio="none"><path d="M1 14 L4.500 2 L8 14 M2.300 10 h4.400" stroke="#e0504d" stroke-width="1.800" fill="none"/><path d="M12.500 2 v11 M9.500 9.500 l3 3.800 3 -3.800" stroke="#e0504d" stroke-width="1.800" fill="none"/></svg>
<span class="t" style="top:569.78px;font-size:9.21px;line-height:9.21px;color:#4a4a4a;left:179.74px;transform-origin:0 50%;transform:scaleX(1.4187);">Collations</span>
<svg class="a" style="left:146.05px;top:586.69px;" width="5.17" height="6.07" viewBox="0 0 16 16" preserveAspectRatio="none"><path d="M3 2 L13 8 L3 14" fill="none" stroke="#333" stroke-width="3"/></svg>
<svg class="a" style="left:158.87px;top:583.60px;" width="14.91" height="11.38" viewBox="0 0 16 16" preserveAspectRatio="none"><path d="M1 8 L6.500 3 L12 8 M3 7v6.500h7V7" fill="none" stroke="#b5847a" stroke-width="1.700"/><path d="M8.500 10 L12.200 6.800 L16 10 v4.500 h-7.500z" fill="#8e8e8e"/><rect x="5" y="9.500" width="3" height="4" fill="#b5847a"/></svg>
<span class="t" style="top:585.47px;font-size:9.21px;line-height:9.21px;color:#4a4a4a;left:179.74px;transform-origin:0 50%;transform:scaleX(1.3953);">Domains</span>
<svg class="a" style="left:146.05px;top:602.38px;" width="5.17" height="6.07" viewBox="0 0 16 16" preserveAspectRatio="none"><path d="M3 2 L13 8 L3 14" fill="none" stroke="#333" stroke-width="3"/></svg>
<svg class="a" style="left:158.87px;top:599.29px;" width="14.91" height="11.38" viewBox="0 0 16 16" preserveAspectRatio="none"><path d="M2.500 1.500h6l2.500 2.500V12H2.500z" fill="#f4f4f4" stroke="#8a8f98" stroke-width="1.300"/><path d="M6 5h6.500l2.500 2.500V15H6z" fill="#fff" stroke="#8a8f98" stroke-width="1.300"/><circle cx="10.500" cy="10.500" r="1.800" fill="#8a8f98"/></svg>
<span class="t" style="top:601.16px;font-size:9.21px;line-height:9.21px;color:#4a4a4a;left:179.74px;transform-origin:0 50%;transform:scaleX(1.3913);">FTS Configurations</span>
<svg class="a" style="left:146.05px;top:618.08px;" width="5.17" height="6.07" viewBox="0 0 16 16" preserveAspectRatio="none"><path d="M3 2 L13 8 L3 14" fill="none" stroke="#333" stroke-width="3"/></svg>
<svg class="a" style="left:158.87px;top:614.99px;" width="14.91" height="11.38" viewBox="0 0 16 16" preserveAspectRatio="none"><rect x="1.5" y="1.5" width="5" height="12.5" fill="none" stroke="#2f7fc1" stroke-width="1.6"/><path d="M8 3 l3.5 -1 l3.5 11 l-3.5 1z" fill="none" stroke="#2f7fc1" stroke-width="1.5"/><path d="M2 5h4" stroke="#2f7fc1"/></svg>
<span class="t" style="top:616.86px;font-size:9.21px;line-height:9.21px;color:#4a4a4a;left:179.74px;transform-origin:0 50%;transform:scaleX(1.3879);">FTS Dictionaries</span>
<svg class="a" style="left:146.05px;top:633.77px;" width="5.17" height="6.07" viewBox="0 0 16 16" preserveAspectRatio="none"><path d="M3 2 L13 8 L3 14" fill="none" stroke="#333" stroke-width="3"/></svg>
<span class="t" style="top:632.80px;font-size:8.75px;line-height:8.75px;color:#6da81f;font-weight:bold;left:159.36px;transform-origin:0 50%;transform:scaleX(1.2438);">Aa</span>
<span class="t" style="top:632.55px;font-size:9.21px;line-height:9.21px;color:#4a4a4a;left:179.74px;transform-origin:0 50%;transform:scaleX(1.3526);">FTS Parsers</span>
<svg class="a" style="left:146.05px;top:649.46px;" width="5.17" height="6.07" viewBox="0 0 16 16" preserveAspectRatio="none"><path d="M3 2 L13 8 L3 14" fill="none" stroke="#333" stroke-width="3"/></svg>
<svg class="a" style="left:158.87px;top:646.37px;" width="14.91" height="11.38" viewBox="0 0 16 16" preserveAspectRatio="none"><path d="M1.5 2.5v11h13v-8h-10v-3z" fill="#fff3c4" stroke="#e3b93c" stroke-width="1.5"/><circle cx="9" cy="9" r="2" fill="none" stroke="#e3b93c" stroke-width="1.2"/></svg>
<span class="t" style="top:648.24px;font-size:9.21px;line-height:9.21px;color:#4a4a4a;left:179.74px;transform-origin:0 50%;transform:scaleX(1.3849);">FTS Templates</span>
<svg class="a" style="left:146.05px;top:665.15px;" width="5.17" height="6.07" viewBox="0 0 16 16" preserveAspectRatio="none"><path d="M3 2 L13 8 L3 14" fill="none" stroke="#333" stroke-width="3"/></svg>
<svg class="a" style="left:158.87px;top:662.06px;" width="14.91" height="11.38" viewBox="0 0 16 16" preserveAspectRatio="none"><rect x="1" y="2.500" width="12" height="11.500" rx="2" fill="#cfe4f7" stroke="#3d8fd1" stroke-width="1.700"/><path d="M1 6.500h12M5 6.500v7.500M9 6.500v7.500M1 10h12" stroke="#3d8fd1" stroke-width="1.300"/><path d="M12 1.500 h4 v4" fill="none" stroke="#3d8fd1" stroke-width="1.500"/></svg>
<span class="t" style="top:663.93px;font-size:9.21px;line-height:9.21px;color:#4a4a4a;left:179.74px;transform-origin:0 50%;transform:scaleX(1.4033);">Foreign Tables</span>
<svg class="a" style="left:146.05px;top:680.84px;" width="5.17" height="6.07" viewBox="0 0 16 16" preserveAspectRatio="none"><path d="M3 2 L13 8 L3 14" fill="none" stroke="#333" stroke-width="3"/></svg>
<svg class="a" style="left:158.87px;top:677.75px;" width="14.91" height="11.38" viewBox="0 0 16 16" preserveAspectRatio="none"><path d="M3.500 1.500 q-2 0 -1.700 3 q.3 2.500 -1.300 3.500 q1.600 1 1.300 3.500 q-.3 3 1.700 3 M12.500 1.500 q2 0 1.700 3 q-.3 2.500 1.300 3.500 q-1.600 1 -1.300 3.500 q.3 3 -1.700 3" fill="none" stroke="#3ba6a6" stroke-width="1.500"/><path d="M6.500 2.500 q-2.500 5.500 0 11 M9.500 2.500 q2.500 5.500 0 11" fill="none" stroke="#3ba6a6" stroke-width="1.200"/><path d="M6.300 6.800h3.400M6.300 9.300h3.400" stroke="#3ba6a6" stroke-width="1.300"/></svg>
<span class="t" style="top:679.62px;font-size:9.21px;line-height:9.21px;color:#4a4a4a;left:179.74px;transform-origin:0 50%;transform:scaleX(1.4122);">Functions</span>
<svg class="a" style="left:146.05px;top:696.53px;" width="5.17" height="6.07" viewBox="0 0 16 16" preserveAspectRatio="none"><path d="M3 2 L13 8 L3 14" fill="none" stroke="#333" stroke-width="3"/></svg>
<svg class="a" style="left:158.87px;top:693.44px;" width="14.91" height="11.38" viewBox="0 0 16 16" preserveAspectRatio="none"><rect x="0.500" y="1.500" width="15.500" height="13" fill="#a4e043"/><rect x="2.500" y="4" width="3" height="9" fill="none" stroke="#6aa51e" stroke-width="1.100"/><rect x="6.500" y="5.500" width="8" height="7.500" fill="#c9ef8e" stroke="#6aa51e" stroke-width="1.300"/><path d="M6.500 8.500h8M10.500 5.500v7.500" stroke="#6aa51e" stroke-width="1.100"/></svg>
<span class="t" style="top:695.31px;font-size:9.21px;line-height:9.21px;color:#4a4a4a;left:179.74px;transform-origin:0 50%;transform:scaleX(1.4189);">Materialized Views</span>
<svg class="a" style="left:146.05px;top:712.22px;" width="5.17" height="6.07" viewBox="0 0 16 16" preserveAspectRatio="none"><path d="M3 2 L13 8 L3 14" fill="none" stroke="#333" stroke-width="3"/></svg>
<svg class="a" style="left:158.87px;top:709.13px;" width="14.91" height="11.38" viewBox="0 0 16 16" preserveAspectRatio="none"><path d="M4 1 h3 v2.500 h3 v3 h-3 v2.500 h-3 v-2.500 h-3 v-3 h3z" fill="#eee" stroke="#6a6f78" stroke-width="1.300"/><path d="M9.500 6.500 h3 v2.500 h3 v3 h-3 v2.500 h-3 v-2.500 h-3 v-3 h3z" fill="#ddd" stroke="#6a6f78" stroke-width="1.300"/></svg>
<span class="t" style="top:711.00px;font-size:9.21px;line-height:9.21px;color:#4a4a4a;left:179.74px;transform-origin:0 50%;transform:scaleX(1.3771);">Operators</span>
<svg class="a" style="left:146.05px;top:727.91px;" width="5.17" height="6.07" viewBox="0 0 16 16" preserveAspectRatio="none"><path d="M3 2 L13 8 L3 14" fill="none" stroke="#333" stroke-width="3"/></svg>
<svg class="a" style="left:158.87px;top:724.82px;" width="14.91" height="11.38" viewBox="0 0 16 16" preserveAspectRatio="none"><path d="M3.500 1.500 q-2 0 -1.700 3 q.3 2.500 -1.300 3.500 q1.600 1 1.300 3.500 q-.3 3 1.700 3 M12.500 1.500 q2 0 1.700 3 q-.3 2.500 1.300 3.500 q-1.600 1 -1.300 3.500 q.3 3 -1.700 3" fill="none" stroke="#3ba6a6" stroke-width="1.500"/><path d="M7 2.500 q-3.500 5.500 0 11 M9 2.500 q3.500 5.500 0 11" fill="none" stroke="#3ba6a6" stroke-width="1.300"/></svg>
<span class="t" style="top:726.69px;font-size:9.21px;line-height:9.21px;color:#4a4a4a;left:179.74px;transform-origin:0 50%;transform:scaleX(1.3934);">Procedures</span>
<svg class="a" style="left:146.05px;top:743.60px;" width="5.17" height="6.07" viewBox="0 0 16 16" preserveAspectRatio="none"><path d="M3 2 L13 8 L3 14" fill="none" stroke="#333" stroke-width="3"/></svg>
<span class="t" style="top:742.88px;font-size:8.29px;line-height:8.29px;color:#8a5fc7;font-weight:bold;left:158.87px;transform-origin:0 50%;transform:scaleX(1.1500);">1..3</span>
<span class="t" style="top:742.38px;font-size:9.21px;line-height:9.21px;color:#4a4a4a;left:179.74px;transform-origin:0 50%;transform:scaleX(1.3658);">Sequences</span>
<svg class="a" style="left:145.15px;top:759.89px;" width="6.96" height="4.88" viewBox="0 0 16 16" preserveAspectRatio="none"><path d="M2 4 L8 12 L14 4" fill="none" stroke="#333" stroke-width="2.4"/></svg>
<svg class="a" style="left:158.87px;top:756.20px;" width="14.91" height="11.38" viewBox="0 0 16 16" preserveAspectRatio="none"><rect x="1" y="2.500" width="14" height="11.500" rx="1.800" fill="#eef5fc" stroke="#3d8fd1" stroke-width="1.700"/><path d="M1 6h14M8 6v8" stroke="#3d8fd1" stroke-width="1.300"/><path d="M7.300 3.200h1.400v4h-1.400z" fill="#e0704d"/></svg>
<span class="t" style="top:758.07px;font-size:9.21px;line-height:9.21px;color:#2a2a2a;left:179.74px;transform-origin:0 50%;transform:scaleX(1.3818);">Tables (83)</span>
<svg class="a" style="left:162.54px;top:774.98px;" width="5.17" height="6.07" viewBox="0 0 16 16" preserveAspectRatio="none"><path d="M3 2 L13 8 L3 14" fill="none" stroke="#333" stroke-width="3"/></svg>
<svg class="a" style="left:176.01px;top:772.44px;" width="13.42" height="10.30" viewBox="0 0 16 16" preserveAspectRatio="none"><rect x="1" y="2.5" width="14" height="11.5" fill="#eef5fc" stroke="#4a97d6" stroke-width="1.5"/><path d="M1 5.5h14M1 9.5h14M8 5.500v8.500" stroke="#4a97d6" stroke-width="1.1"/><rect x="1" y="2.5" width="14" height="3" fill="#3d8fd1" opacity=".4"/></svg>
<span class="t" style="top:773.76px;font-size:9.21px;line-height:9.21px;color:#4a4a4a;left:195.14px;transform-origin:0 50%;transform:scaleX(1.4025);">agro_rural_system_agro_food_structure</span>
<svg class="a" style="left:162.54px;top:790.67px;" width="5.17" height="6.07" viewBox="0 0 16 16" preserveAspectRatio="none"><path d="M3 2 L13 8 L3 14" fill="none" stroke="#333" stroke-width="3"/></svg>
<svg class="a" style="left:176.01px;top:788.13px;" width="13.42" height="10.30" viewBox="0 0 16 16" preserveAspectRatio="none"><rect x="1" y="2.5" width="14" height="11.5" fill="#eef5fc" stroke="#4a97d6" stroke-width="1.5"/><path d="M1 5.5h14M1 9.5h14M8 5.500v8.500" stroke="#4a97d6" stroke-width="1.1"/><rect x="1" y="2.5" width="14" height="3" fill="#3d8fd1" opacity=".4"/></svg>
<span class="t" style="top:789.45px;font-size:9.21px;line-height:9.21px;color:#4a4a4a;left:195.14px;transform-origin:0 50%;transform:scaleX(1.4081);">agro_rural_system_import_temp</span>
<svg class="a" style="left:162.54px;top:806.37px;" width="5.17" height="6.07" viewBox="0 0 16 16" preserveAspectRatio="none"><path d="M3 2 L13 8 L3 14" fill="none" stroke="#333" stroke-width="3"/></svg>
<svg class="a" style="left:176.01px;top:803.82px;" width="13.42" height="10.30" viewBox="0 0 16 16" preserveAspectRatio="none"><rect x="1" y="2.5" width="14" height="11.5" fill="#eef5fc" stroke="#4a97d6" stroke-width="1.5"/><path d="M1 5.5h14M1 9.5h14M8 5.500v8.500" stroke="#4a97d6" stroke-width="1.1"/><rect x="1" y="2.5" width="14" height="3" fill="#3d8fd1" opacity=".4"/></svg>
<span class="t" style="top:805.15px;font-size:9.21px;line-height:9.21px;color:#4a4a4a;left:195.14px;transform-origin:0 50%;transform:scaleX(1.4077);">agro_rural_system_indicators</span>
<svg class="a" style="left:162.54px;top:822.06px;" width="5.17" height="6.07" viewBox="0 0 16 16" preserveAspectRatio="none"><path d="M3 2 L13 8 L3 14" fill="none" stroke="#333" stroke-width="3"/></svg>
<svg class="a" style="left:176.01px;top:819.51px;" width="13.42" height="10.30" viewBox="0 0 16 16" preserveAspectRatio="none"><rect x="1" y="2.5" width="14" height="11.5" fill="#eef5fc" stroke="#4a97d6" stroke-width="1.5"/><path d="M1 5.5h14M1 9.5h14M8 5.500v8.500" stroke="#4a97d6" stroke-width="1.1"/><rect x="1" y="2.5" width="14" height="3" fill="#3d8fd1" opacity=".4"/></svg>
<span class="t" style="top:820.84px;font-size:9.21px;line-height:9.21px;color:#4a4a4a;left:195.14px;transform-origin:0 50%;transform:scaleX(1.3942);">agro_rural_system_sources</span>
<svg class="a" style="left:162.54px;top:837.75px;" width="5.17" height="6.07" viewBox="0 0 16 16" preserveAspectRatio="none"><path d="M3 2 L13 8 L3 14" fill="none" stroke="#333" stroke-width="3"/></svg>
<svg class="a" style="left:176.01px;top:835.20px;" width="13.42" height="10.30" viewBox="0 0 16 16" preserveAspectRatio="none"><rect x="1" y="2.5" width="14" height="11.5" fill="#eef5fc" stroke="#4a97d6" stroke-width="1.5"/><path d="M1 5.5h14M1 9.5h14M8 5.500v8.500" stroke="#4a97d6" stroke-width="1.1"/><rect x="1" y="2.5" width="14" height="3" fill="#3d8fd1" opacity=".4"/></svg>
<span class="t" style="top:836.53px;font-size:9.21px;line-height:9.21px;color:#4a4a4a;left:195.14px;transform-origin:0 50%;transform:scaleX(1.4087);">agro_rural_system_translations</span>
<svg class="a" style="left:162.54px;top:853.44px;" width="5.17" height="6.07" viewBox="0 0 16 16" preserveAspectRatio="none"><path d="M3 2 L13 8 L3 14" fill="none" stroke="#333" stroke-width="3"/></svg>
<svg class="a" style="left:176.01px;top:850.89px;" width="13.42" height="10.30" viewBox="0 0 16 16" preserveAspectRatio="none"><rect x="1" y="2.5" width="14" height="11.5" fill="#eef5fc" stroke="#4a97d6" stroke-width="1.5"/><path d="M1 5.5h14M1 9.5h14M8 5.500v8.500" stroke="#4a97d6" stroke-width="1.1"/><rect x="1" y="2.5" width="14" height="3" fill="#3d8fd1" opacity=".4"/></svg>
<span class="t" style="top:852.22px;font-size:9.21px;line-height:9.21px;color:#4a4a4a;left:195.14px;transform-origin:0 50%;transform:scaleX(1.4067);">app_suggestions</span>
<svg class="a" style="left:162.54px;top:869.13px;" width="5.17" height="6.07" viewBox="0 0 16 16" preserveAspectRatio="none"><path d="M3 2 L13 8 L3 14" fill="none" stroke="#333" stroke-width="3"/></svg>
<svg class="a" style="left:176.01px;top:866.58px;" width="13.42" height="10.30" viewBox="0 0 16 16" preserveAspectRatio="none"><rect x="1" y="2.5" width="14" height="11.5" fill="#eef5fc" stroke="#4a97d6" stroke-width="1.5"/><path d="M1 5.5h14M1 9.5h14M8 5.500v8.500" stroke="#4a97d6" stroke-width="1.1"/><rect x="1" y="2.5" width="14" height="3" fill="#3d8fd1" opacity=".4"/></svg>
<span class="t" style="top:867.91px;font-size:9.21px;line-height:9.21px;color:#4a4a4a;left:195.14px;transform-origin:0 50%;transform:scaleX(1.3642);">app_users</span>
<svg class="a" style="left:162.54px;top:884.82px;" width="5.17" height="6.07" viewBox="0 0 16 16" preserveAspectRatio="none"><path d="M3 2 L13 8 L3 14" fill="none" stroke="#333" stroke-width="3"/></svg>
<svg class="a" style="left:176.01px;top:882.27px;" width="13.42" height="10.30" viewBox="0 0 16 16" preserveAspectRatio="none"><rect x="1" y="2.5" width="14" height="11.5" fill="#eef5fc" stroke="#4a97d6" stroke-width="1.5"/><path d="M1 5.5h14M1 9.5h14M8 5.500v8.500" stroke="#4a97d6" stroke-width="1.1"/><rect x="1" y="2.5" width="14" height="3" fill="#3d8fd1" opacity=".4"/></svg>
<span class="t" style="top:883.60px;font-size:9.21px;line-height:9.21px;color:#4a4a4a;left:195.14px;transform-origin:0 50%;transform:scaleX(1.4219);">archaeological_sites</span>
<svg class="a" style="left:162.54px;top:900.51px;" width="5.17" height="6.07" viewBox="0 0 16 16" preserveAspectRatio="none"><path d="M3 2 L13 8 L3 14" fill="none" stroke="#333" stroke-width="3"/></svg>
<svg class="a" style="left:176.01px;top:897.96px;" width="13.42" height="10.30" viewBox="0 0 16 16" preserveAspectRatio="none"><rect x="1" y="2.5" width="14" height="11.5" fill="#eef5fc" stroke="#4a97d6" stroke-width="1.5"/><path d="M1 5.5h14M1 9.5h14M8 5.500v8.500" stroke="#4a97d6" stroke-width="1.1"/><rect x="1" y="2.5" width="14" height="3" fill="#3d8fd1" opacity=".4"/></svg>
<span class="t" style="top:899.29px;font-size:9.21px;line-height:9.21px;color:#4a4a4a;left:195.14px;transform-origin:0 50%;transform:scaleX(1.3823);">berat_region_border</span>
<svg class="a" style="left:162.54px;top:916.20px;" width="5.17" height="6.07" viewBox="0 0 16 16" preserveAspectRatio="none"><path d="M3 2 L13 8 L3 14" fill="none" stroke="#333" stroke-width="3"/></svg>
<svg class="a" style="left:176.01px;top:913.65px;" width="13.42" height="10.30" viewBox="0 0 16 16" preserveAspectRatio="none"><rect x="1" y="2.5" width="14" height="11.5" fill="#eef5fc" stroke="#4a97d6" stroke-width="1.5"/><path d="M1 5.5h14M1 9.5h14M8 5.500v8.500" stroke="#4a97d6" stroke-width="1.1"/><rect x="1" y="2.5" width="14" height="3" fill="#3d8fd1" opacity=".4"/></svg>
<span class="t" style="top:914.98px;font-size:9.21px;line-height:9.21px;color:#4a4a4a;left:195.14px;transform-origin:0 50%;transform:scaleX(1.4130);">ci_proxy_indicators</span>
<svg class="a" style="left:162.54px;top:931.89px;" width="5.17" height="6.07" viewBox="0 0 16 16" preserveAspectRatio="none"><path d="M3 2 L13 8 L3 14" fill="none" stroke="#333" stroke-width="3"/></svg>
<svg class="a" style="left:176.01px;top:929.35px;" width="13.42" height="10.30" viewBox="0 0 16 16" preserveAspectRatio="none"><rect x="1" y="2.5" width="14" height="11.5" fill="#eef5fc" stroke="#4a97d6" stroke-width="1.5"/><path d="M1 5.5h14M1 9.5h14M8 5.500v8.500" stroke="#4a97d6" stroke-width="1.1"/><rect x="1" y="2.5" width="14" height="3" fill="#3d8fd1" opacity=".4"/></svg>
<span class="t" style="top:930.67px;font-size:9.21px;line-height:9.21px;color:#4a4a4a;left:195.14px;transform-origin:0 50%;transform:scaleX(1.3860);">ci_sdg_map</span>
<svg class="a" style="left:162.54px;top:947.58px;" width="5.17" height="6.07" viewBox="0 0 16 16" preserveAspectRatio="none"><path d="M3 2 L13 8 L3 14" fill="none" stroke="#333" stroke-width="3"/></svg>
<svg class="a" style="left:176.01px;top:945.04px;" width="13.42" height="10.30" viewBox="0 0 16 16" preserveAspectRatio="none"><rect x="1" y="2.5" width="14" height="11.5" fill="#eef5fc" stroke="#4a97d6" stroke-width="1.5"/><path d="M1 5.5h14M1 9.5h14M8 5.500v8.500" stroke="#4a97d6" stroke-width="1.1"/><rect x="1" y="2.5" width="14" height="3" fill="#3d8fd1" opacity=".4"/></svg>
<span class="t" style="top:946.36px;font-size:9.21px;line-height:9.21px;color:#4a4a4a;left:195.14px;transform-origin:0 50%;transform:scaleX(1.3892);">ci_sources</span>
<svg class="a" style="left:162.54px;top:963.27px;" width="5.17" height="6.07" viewBox="0 0 16 16" preserveAspectRatio="none"><path d="M3 2 L13 8 L3 14" fill="none" stroke="#333" stroke-width="3"/></svg>
<svg class="a" style="left:176.01px;top:960.73px;" width="13.42" height="10.30" viewBox="0 0 16 16" preserveAspectRatio="none"><rect x="1" y="2.5" width="14" height="11.5" fill="#eef5fc" stroke="#4a97d6" stroke-width="1.5"/><path d="M1 5.5h14M1 9.5h14M8 5.500v8.500" stroke="#4a97d6" stroke-width="1.1"/><rect x="1" y="2.5" width="14" height="3" fill="#3d8fd1" opacity=".4"/></svg>
<span class="t" style="top:962.05px;font-size:9.21px;line-height:9.21px;color:#4a4a4a;left:195.14px;transform-origin:0 50%;transform:scaleX(1.4364);">cultural_attraction_translations</span>
<svg class="a" style="left:162.54px;top:978.97px;" width="5.17" height="6.07" viewBox="0 0 16 16" preserveAspectRatio="none"><path d="M3 2 L13 8 L3 14" fill="none" stroke="#333" stroke-width="3"/></svg>
<svg class="a" style="left:176.01px;top:976.42px;" width="13.42" height="10.30" viewBox="0 0 16 16" preserveAspectRatio="none"><rect x="1" y="2.5" width="14" height="11.5" fill="#eef5fc" stroke="#4a97d6" stroke-width="1.5"/><path d="M1 5.5h14M1 9.5h14M8 5.500v8.500" stroke="#4a97d6" stroke-width="1.1"/><rect x="1" y="2.5" width="14" height="3" fill="#3d8fd1" opacity=".4"/></svg>
<span class="t" style="top:977.75px;font-size:9.21px;line-height:9.21px;color:#4a4a4a;left:195.14px;transform-origin:0 50%;transform:scaleX(1.4335);">cultural_infrastructure_import_temp</span>
<svg class="a" style="left:162.54px;top:994.66px;" width="5.17" height="6.07" viewBox="0 0 16 16" preserveAspectRatio="none"><path d="M3 2 L13 8 L3 14" fill="none" stroke="#333" stroke-width="3"/></svg>
<svg class="a" style="left:176.01px;top:992.11px;" width="13.42" height="10.30" viewBox="0 0 16 16" preserveAspectRatio="none"><rect x="1" y="2.5" width="14" height="11.5" fill="#eef5fc" stroke="#4a97d6" stroke-width="1.5"/><path d="M1 5.5h14M1 9.5h14M8 5.500v8.500" stroke="#4a97d6" stroke-width="1.1"/><rect x="1" y="2.5" width="14" height="3" fill="#3d8fd1" opacity=".4"/></svg>
<span class="t" style="top:993.44px;font-size:9.21px;line-height:9.21px;color:#4a4a4a;left:195.14px;transform-origin:0 50%;transform:scaleX(1.4348);">cultural_infrastructure_indicators</span>
<svg class="a" style="left:162.54px;top:1010.35px;" width="5.17" height="6.07" viewBox="0 0 16 16" preserveAspectRatio="none"><path d="M3 2 L13 8 L3 14" fill="none" stroke="#333" stroke-width="3"/></svg>
<svg class="a" style="left:176.01px;top:1007.80px;" width="13.42" height="10.30" viewBox="0 0 16 16" preserveAspectRatio="none"><rect x="1" y="2.5" width="14" height="11.5" fill="#eef5fc" stroke="#4a97d6" stroke-width="1.5"/><path d="M1 5.5h14M1 9.5h14M8 5.500v8.500" stroke="#4a97d6" stroke-width="1.1"/><rect x="1" y="2.5" width="14" height="3" fill="#3d8fd1" opacity=".4"/></svg>
<span class="t" style="top:1009.13px;font-size:9.21px;line-height:9.21px;color:#4a4a4a;left:195.14px;transform-origin:0 50%;transform:scaleX(1.4232);">cultural_infrastructure_proxy_indicators</span>
<svg class="a" style="left:162.54px;top:1026.04px;" width="5.17" height="6.07" viewBox="0 0 16 16" preserveAspectRatio="none"><path d="M3 2 L13 8 L3 14" fill="none" stroke="#333" stroke-width="3"/></svg>
<svg class="a" style="left:176.01px;top:1023.49px;" width="13.42" height="10.30" viewBox="0 0 16 16" preserveAspectRatio="none"><rect x="1" y="2.5" width="14" height="11.5" fill="#eef5fc" stroke="#4a97d6" stroke-width="1.5"/><path d="M1 5.5h14M1 9.5h14M8 5.500v8.500" stroke="#4a97d6" stroke-width="1.1"/><rect x="1" y="2.5" width="14" height="3" fill="#3d8fd1" opacity=".4"/></svg>
<span class="t" style="top:1024.82px;font-size:9.21px;line-height:9.21px;color:#4a4a4a;left:195.14px;transform-origin:0 50%;transform:scaleX(1.4248);">cultural_infrastructure_sources</span>
<svg class="a" style="left:162.54px;top:1041.73px;" width="5.17" height="6.07" viewBox="0 0 16 16" preserveAspectRatio="none"><path d="M3 2 L13 8 L3 14" fill="none" stroke="#333" stroke-width="3"/></svg>
<svg class="a" style="left:176.01px;top:1039.18px;" width="13.42" height="10.30" viewBox="0 0 16 16" preserveAspectRatio="none"><rect x="1" y="2.5" width="14" height="11.5" fill="#eef5fc" stroke="#4a97d6" stroke-width="1.5"/><path d="M1 5.5h14M1 9.5h14M8 5.500v8.500" stroke="#4a97d6" stroke-width="1.1"/><rect x="1" y="2.5" width="14" height="3" fill="#3d8fd1" opacity=".4"/></svg>
<span class="t" style="top:1040.51px;font-size:9.21px;line-height:9.21px;color:#4a4a4a;left:195.14px;transform-origin:0 50%;transform:scaleX(1.4329);">cultural_infrastructure_translations</span>
<div class="a" style="left:0.00px;top:1044.00px;width:1497.00px;height:14.00px;background:#fff;"></div>
<span class="t" style="top:551.68px;font-size:9.21px;line-height:9.21px;color:#222;left:483.19px;transform-origin:0 50%;transform:scaleX(1.3787);">s/diva...</span>
<svg class="a" style="left:539.29px;top:552.09px;" width="9.44" height="6.83" viewBox="0 0 16 16" preserveAspectRatio="none"><path d="M1.5 2 L14.5 14 M14.5 2 L1.5 14" stroke="#222" stroke-width="2.3" fill="none"/></svg>
<div class="a" style="left:553.35px;top:545.42px;width:396.57px;height:20.60px;background:#ecf3fa;border:1px solid #2f6895;box-sizing:border-box;"></div>
<div class="a" style="left:553.35px;top:564.06px;width:396.57px;height:2.17px;background:#2f6895;"></div>
<svg class="a" style="left:561.90px;top:550.35px;" width="14.91" height="10.30" viewBox="0 0 16 16" preserveAspectRatio="none"><rect x="0.5" y="2" width="15" height="12" fill="#2f6895"/><path d="M2 6.3h3.3v2.4H2z M6.4 6.3h3.3v2.4H6.4z M10.8 6.3h3.3v2.4h-3.3z M2 10h3.3v2.4H2z M6.4 10h3.3v2.4H6.4z M10.8 10h3.3v2.4h-3.3z" fill="#fff"/></svg>
<span class="t" style="top:551.68px;font-size:9.21px;line-height:9.21px;color:#2f6895;left:581.78px;transform-origin:0 50%;transform:scaleX(1.5454);">public.festivities/diva_digital/postgres@PostgreSQL 17</span>
<svg class="a" style="left:934.27px;top:552.09px;" width="9.44" height="6.83" viewBox="0 0 16 16" preserveAspectRatio="none"><path d="M1.5 2 L14.5 14 M14.5 2 L1.5 14" stroke="#222" stroke-width="2.3" fill="none"/></svg>
<svg class="a" style="left:957.67px;top:550.35px;" width="14.91" height="10.30" viewBox="0 0 16 16" preserveAspectRatio="none"><path d="M1 3 q0 -2 7 -2 q7 0 7 2 v3 h-14z M1 7.200 h14 v3 q0 .8 -2 1.200 l-3 -1.500 v3.100 q-9 .3 -9 -2.300z" fill="#111"/><path d="M10.500 10.200 l5.300 2.700 -2.300 .4 1.200 2.300 -1.300 .5 -1.200 -2.300 -1.700 1.300z" fill="#111"/><circle cx="3.500" cy="4" r=".8" fill="#fff"/><circle cx="3.500" cy="9" r=".8" fill="#fff"/></svg>
<span class="t" style="top:551.68px;font-size:9.21px;line-height:9.21px;color:#222;left:978.74px;transform-origin:0 50%;transform:scaleX(1.4627);">DIVA_database_str...</span>
<svg class="a" style="left:1113.77px;top:552.09px;" width="9.44" height="6.83" viewBox="0 0 16 16" preserveAspectRatio="none"><path d="M1.5 2 L14.5 14 M14.5 2 L1.5 14" stroke="#222" stroke-width="2.3" fill="none"/></svg>
<svg class="a" style="left:1135.88px;top:550.35px;" width="14.91" height="10.30" viewBox="0 0 16 16" preserveAspectRatio="none"><rect x="1" y="2.5" width="14" height="11" fill="none" stroke="#111" stroke-width="1.6"/><path d="M1 6.2h14M1 9.9h14M5.7 2.5v11M10.4 2.5v11" stroke="#111" stroke-width="1.3"/></svg>
<span class="t" style="top:551.68px;font-size:9.21px;line-height:9.21px;color:#222;left:1155.56px;transform-origin:0 50%;transform:scaleX(1.4685);">public.agro_rural_s...</span>
<svg class="a" style="left:1290.68px;top:552.09px;" width="9.44" height="6.83" viewBox="0 0 16 16" preserveAspectRatio="none"><path d="M1.5 2 L14.5 14 M14.5 2 L1.5 14" stroke="#222" stroke-width="2.3" fill="none"/></svg>
<svg class="a" style="left:1312.79px;top:550.35px;" width="14.91" height="10.30" viewBox="0 0 16 16" preserveAspectRatio="none"><path d="M1 3 q0 -2 7 -2 q7 0 7 2 v3 h-14z M1 7.200 h14 v3 q0 .8 -2 1.200 l-3 -1.500 v3.100 q-9 .3 -9 -2.300z" fill="#111"/><path d="M10.500 10.200 l5.300 2.700 -2.300 .4 1.200 2.300 -1.300 .5 -1.200 -2.300 -1.700 1.300z" fill="#111"/><circle cx="3.500" cy="4" r=".8" fill="#fff"/><circle cx="3.500" cy="9" r=".8" fill="#fff"/></svg>
<span class="t" style="top:551.68px;font-size:9.21px;line-height:9.21px;color:#222;left:1333.17px;transform-origin:0 50%;transform:scaleX(1.3978);">diva_digital/postgres</span>
<div class="a" style="left:1426.50px;top:545.42px;width:70.50px;height:20.60px;background:#fff;"></div>
<svg class="a" style="left:1440.50px;top:552.47px;" width="9.00" height="7.59" viewBox="0 0 16 16" preserveAspectRatio="none"><path d="M2 5 L8 11 L14 5" fill="none" stroke="#222" stroke-width="2.4"/></svg>
<svg class="a" style="left:1471.20px;top:550.08px;" width="8.00" height="10.84" viewBox="0 0 16 16" preserveAspectRatio="none"><circle cx="8" cy="3" r="1.7" fill="#222"/><circle cx="8" cy="8" r="1.7" fill="#222"/><circle cx="8" cy="13" r="1.7" fill="#222"/></svg>
<div class="a" style="left:482.99px;top:566.23px;width:1012.01px;height:44.99px;background:#ebeef3;"></div>
<div class="a" style="left:488.35px;top:568.18px;width:474.09px;height:17.02px;background:#fff;border:1px solid #d3d7de;box-sizing:border-box;border-radius:3px;"></div>
<svg class="a" style="left:496.30px;top:571.98px;" width="13.91" height="9.76" viewBox="0 0 16 16" preserveAspectRatio="none"><path d="M7 10.500 h-2.500 a3 3.200 0 0 1 0 -6.400 h3 M9 4.100 h2.500 a3 3.200 0 0 1 0 6.400 h-3" fill="none" stroke="#222" stroke-width="1.7" transform="rotate(-22 8 7.3)"/><path d="M1.500 14.500 L14.500 1" stroke="#222" stroke-width="1.5"/></svg>
<div class="a" style="left:519.66px;top:568.18px;width:0.80px;height:17.02px;background:#d3d7de;"></div>
<span class="t" style="top:572.63px;font-size:9.95px;line-height:9.95px;color:#222;left:531.79px;transform-origin:0 50%;transform:scaleX(1.4849);">public.festivities/diva_digital/postgres@PostgreSQL 17</span>
<div class="a" style="left:963.14px;top:568.18px;width:31.41px;height:17.02px;background:#fff;border:1px solid #d3d7de;box-sizing:border-box;border-radius:3px;"></div>
<svg class="a" style="left:971.64px;top:571.98px;" width="13.42" height="9.76" viewBox="0 0 16 16" preserveAspectRatio="none"><path d="M1 3 q0 -2 7 -2 q7 0 7 2 v3 h-14z M1 7.200 h14 v3 q0 .8 -2 1.200 l-3 -1.500 v3.100 q-9 .3 -9 -2.300z" fill="#111"/><path d="M10.500 10.200 l5.300 2.700 -2.300 .4 1.200 2.300 -1.300 .5 -1.200 -2.300 -1.700 1.300z" fill="#111"/><circle cx="3.500" cy="4" r=".8" fill="#fff"/><circle cx="3.500" cy="9" r=".8" fill="#fff"/></svg>
<div class="a" style="left:1462.00px;top:568.83px;width:31.00px;height:15.83px;background:#fff;border:1px solid #d3d7de;box-sizing:border-box;border-radius:3px;"></div>
<svg class="a" style="left:1471.50px;top:571.71px;" width="12.00" height="10.30" viewBox="0 0 16 16" preserveAspectRatio="none"><path d="M4 4.5 a5.5 5 0 1 1 -1.2 5.5" fill="none" stroke="#222" stroke-width="1.7" stroke-dasharray="2.2 1.4"/><path d="M1 3 l4.5 -1 l-.5 4.5z" fill="#222"/></svg>
<div class="a" style="left:489.35px;top:589.54px;width:50.69px;height:17.34px;background:#eef0f4;border:1px solid #d3d7de;box-sizing:border-box;border-radius:3px;"></div>
<div class="a" style="left:522.74px;top:590.08px;width:0.80px;height:16.26px;background:#d3d7de;"></div>
<svg class="a" style="left:497.80px;top:593.66px;" width="15.90" height="9.76" viewBox="0 0 16 16" preserveAspectRatio="none"><path d="M1 3 h5 l1.5 1.5 H15 v9 H1z" fill="#666"/></svg>
<svg class="a" style="left:526.62px;top:595.88px;" width="9.94" height="5.96" viewBox="0 0 16 16" preserveAspectRatio="none"><path d="M2 5 L8 11 L14 5" fill="none" stroke="#555" stroke-width="2.4"/></svg>
<div class="a" style="left:545.01px;top:589.54px;width:51.38px;height:17.34px;background:#eef0f4;border:1px solid #d3d7de;box-sizing:border-box;border-radius:3px;"></div>
<svg class="a" style="left:554.45px;top:593.66px;" width="11.93" height="9.76" viewBox="0 0 16 16" preserveAspectRatio="none"><path d="M1.5 1.5 h10.5 l2.5 2.5 v10.5 h-13z" fill="#666"/><rect x="4" y="3" width="6.5" height="3.2" fill="#eef0f4"/><circle cx="8" cy="10.5" r="2.2" fill="#eef0f4"/></svg>
<svg class="a" style="left:581.78px;top:595.88px;" width="9.94" height="5.96" viewBox="0 0 16 16" preserveAspectRatio="none"><path d="M2 5 L8 11 L14 5" fill="none" stroke="#555" stroke-width="2.4"/></svg>
<div class="a" style="left:601.36px;top:589.54px;width:44.73px;height:17.34px;background:#eef0f4;border:1px solid #d3d7de;box-sizing:border-box;border-radius:3px;"></div>
<svg class="a" style="left:608.62px;top:593.93px;" width="14.91" height="9.21" viewBox="0 0 16 16" preserveAspectRatio="none"><path d="M0.5 14 l1.5 -4.5 l9 -6 l3.5 4.500 l-9 6z" fill="#666"/><path d="M11.500 2.800 l1.500 -1 l3 4 l-1.500 1z" fill="#666"/></svg>
<svg class="a" style="left:627.00px;top:595.88px;" width="9.94" height="5.96" viewBox="0 0 16 16" preserveAspectRatio="none"><path d="M2 5 L8 11 L14 5" fill="none" stroke="#555" stroke-width="2.4"/></svg>
<div class="a" style="left:651.65px;top:589.54px;width:51.09px;height:17.34px;background:#2f6895;border-radius:3px;"></div>
<svg class="a" style="left:661.79px;top:593.39px;" width="12.92" height="10.30" viewBox="0 0 16 16" preserveAspectRatio="none"><path d="M1 2 h14 l-5.5 6.5 v5.5 l-3 -1.8 v-3.7z" fill="#fff"/></svg>
<svg class="a" style="left:687.63px;top:595.88px;" width="9.94" height="5.96" viewBox="0 0 16 16" preserveAspectRatio="none"><path d="M2 5 L8 11 L14 5" fill="none" stroke="#fff" stroke-width="2.4"/></svg>
<div class="a" style="left:709.00px;top:589.54px;width:104.36px;height:17.34px;background:#fff;border-radius:3px;"></div>
<span class="t" style="top:594.31px;font-size:9.95px;line-height:9.95px;color:#222;left:718.94px;transform-origin:0 50%;transform:scaleX(1.4395);">No limit</span>
<svg class="a" style="left:791.99px;top:596.42px;" width="8.95" height="4.88" viewBox="0 0 16 16" preserveAspectRatio="none"><path d="M2 5 L14 5 L8 12 Z" fill="#222"/></svg>
<div class="a" style="left:820.02px;top:589.54px;width:115.59px;height:17.34px;background:#eef0f4;border:1px solid #d3d7de;box-sizing:border-box;border-radius:3px;"></div>
<div class="a" style="left:851.72px;top:590.08px;width:0.80px;height:16.26px;background:#d3d7de;"></div>
<div class="a" style="left:883.83px;top:590.08px;width:0.80px;height:16.26px;background:#d3d7de;"></div>
<div class="a" style="left:915.33px;top:590.08px;width:0.80px;height:16.26px;background:#d3d7de;"></div>
<div class="a" style="left:852.52px;top:590.19px;width:31.31px;height:16.04px;background:#fff;"></div>
<svg class="a" style="left:829.26px;top:593.93px;" width="13.91" height="9.21" viewBox="0 0 16 16" preserveAspectRatio="none"><rect x="2" y="3" width="12" height="10" rx="2.5" fill="#777"/></svg>
<svg class="a" style="left:862.56px;top:593.66px;" width="10.93" height="9.76" viewBox="0 0 16 16" preserveAspectRatio="none"><path d="M3 2 L14 8 L3 14z" fill="#111"/></svg>
<svg class="a" style="left:893.86px;top:593.66px;" width="11.93" height="9.76" viewBox="0 0 16 16" preserveAspectRatio="none"><path d="M2 2.5 v11 M2 3 l6 3.5 -6 3.5z" fill="#777b82" stroke="#777b82" stroke-width="1.6"/><path d="M8 8.5 l6 2.5 -6 2.5z" fill="#777b82"/></svg>
<svg class="a" style="left:921.20px;top:595.88px;" width="9.94" height="5.96" viewBox="0 0 16 16" preserveAspectRatio="none"><path d="M2 5 L8 11 L14 5" fill="none" stroke="#555" stroke-width="2.4"/></svg>
<div class="a" style="left:942.57px;top:589.54px;width:82.49px;height:17.34px;background:#eef0f4;border:1px solid #d3d7de;box-sizing:border-box;border-radius:3px;"></div>
<div class="a" style="left:972.98px;top:590.08px;width:0.80px;height:16.26px;background:#d3d7de;"></div>
<div class="a" style="left:1004.78px;top:590.08px;width:0.80px;height:16.26px;background:#d3d7de;"></div>
<svg class="a" style="left:951.01px;top:593.93px;" width="12.92" height="9.21" viewBox="0 0 16 16" preserveAspectRatio="none"><rect x="1" y="2" width="14" height="12" rx="1" fill="#666"/><path d="M5.5 4.8 h5 M5.5 8 h4 M5.5 11.2 h5 M5.8 4.8 v6.4" stroke="#eef0f4" stroke-width="1.6" fill="none"/></svg>
<svg class="a" style="left:982.82px;top:593.93px;" width="12.92" height="9.21" viewBox="0 0 16 16" preserveAspectRatio="none"><rect x="1" y="2" width="14" height="12" rx="1" fill="#666"/><path d="M5 6 v6 M8 4.5 v7.5 M11 9 v3" stroke="#eef0f4" stroke-width="1.8" fill="none"/></svg>
<svg class="a" style="left:1010.65px;top:595.88px;" width="9.94" height="5.96" viewBox="0 0 16 16" preserveAspectRatio="none"><path d="M2 5 L8 11 L14 5" fill="none" stroke="#555" stroke-width="2.4"/></svg>
<div class="a" style="left:1030.03px;top:589.54px;width:64.60px;height:17.34px;background:#eef0f4;border:1px solid #d3d7de;box-sizing:border-box;border-radius:3px;"></div>
<div class="a" style="left:1061.93px;top:590.08px;width:0.80px;height:16.26px;background:#d3d7de;"></div>
<svg class="a" style="left:1038.48px;top:593.12px;" width="14.91" height="10.84" viewBox="0 0 16 16" preserveAspectRatio="none"><path d="M1 2 h12 v3 h-12z M1 6.3 h12 v3 h-12z M1 10.6 h7 v3 h-7z" fill="#777b82"/><circle cx="12" cy="11.5" r="3.6" fill="#777b82"/><circle cx="12" cy="11.5" r="1.6" fill="#eef0f4"/></svg>
<svg class="a" style="left:1071.28px;top:593.12px;" width="14.91" height="10.84" viewBox="0 0 16 16" preserveAspectRatio="none"><path d="M1 2 h12 v3 h-12z M1 6.3 h12 v3 h-12z M1 10.6 h7 v3 h-7z" fill="#777b82"/><circle cx="12" cy="11.5" r="3.6" fill="#777b82"/><circle cx="12" cy="11.5" r="1.6" fill="#eef0f4"/></svg>
<div class="a" style="left:1100.60px;top:589.54px;width:43.73px;height:17.34px;background:#eef0f4;border:1px solid #d3d7de;box-sizing:border-box;border-radius:3px;"></div>
<svg class="a" style="left:1109.04px;top:594.20px;" width="12.92" height="8.67" viewBox="0 0 16 16" preserveAspectRatio="none"><path d="M1 3.5h2M1 8h2M1 12.5h2M5 3.5h10M5 8h10M5 12.5h10" stroke="#777b82" stroke-width="1.7" fill="none"/></svg>
<svg class="a" style="left:1124.95px;top:595.88px;" width="9.94" height="5.96" viewBox="0 0 16 16" preserveAspectRatio="none"><path d="M2 5 L8 11 L14 5" fill="none" stroke="#555" stroke-width="2.4"/></svg>
<div class="a" style="left:1149.30px;top:589.54px;width:33.49px;height:17.34px;background:#fff;border:1px solid #d3d7de;box-sizing:border-box;border-radius:3px;"></div>
<svg class="a" style="left:1160.48px;top:593.12px;" width="13.42" height="10.84" viewBox="0 0 16 16" preserveAspectRatio="none"><circle cx="8" cy="8" r="7.5" fill="#111"/><path d="M5.5 6.2 a2.6 2.4 0 1 1 3.6 2.2 q-1.1 .5 -1.1 1.8" fill="none" stroke="#fff" stroke-width="1.9"/><circle cx="8" cy="12.3" r="1.1" fill="#fff"/></svg>
<div class="a" style="left:482.99px;top:630.30px;width:47.11px;height:199.90px;background:#f5f6f9;"></div>
<span class="t" style="top:615.99px;font-size:9.95px;line-height:9.95px;color:#2f6895;left:492.33px;transform-origin:0 50%;transform:scaleX(1.3221);">Query</span>
<span class="t" style="top:615.99px;font-size:9.95px;line-height:9.95px;color:#222;left:545.01px;transform-origin:0 50%;transform:scaleX(1.3743);">Query History</span>
<div class="a" style="left:483.38px;top:629.21px;width:52.18px;height:1.41px;background:#2f6895;"></div>
<span class="t" style="top:615.69px;font-size:9.95px;line-height:9.95px;color:#3a6d9a;left:1229.70px;transform-origin:0 50%;transform:scaleX(1.3760);">Scratch Pad</span>
<svg class="a" style="left:1312.65px;top:616.80px;" width="9.50" height="6.83" viewBox="0 0 16 16" preserveAspectRatio="none"><path d="M1.5 2 L14.5 14 M14.5 2 L1.5 14" stroke="#222" stroke-width="2.3" fill="none"/></svg>
<div class="a" style="left:1221.00px;top:629.21px;width:107.00px;height:1.40px;background:#2f6895;"></div>
<div class="a" style="left:1221.00px;top:611.22px;width:1.00px;height:218.98px;background:#dfe2e7;"></div>
<svg class="a" style="left:1192.45px;top:616.10px;" width="13.50" height="9.54" viewBox="0 0 16 16" preserveAspectRatio="none"><path d="M2 14 L14 2" stroke="#222" stroke-width="1.6"/><path d="M14 2 l-6 .8 5.2 5.2z M2 14 l6 -.8 -5.2 -5.2z" fill="#222"/></svg>
<svg class="a" style="left:1468.65px;top:616.10px;" width="13.50" height="9.54" viewBox="0 0 16 16" preserveAspectRatio="none"><path d="M2 14 L14 2" stroke="#222" stroke-width="1.6"/><path d="M14 2 l-6 .8 5.2 5.2z M2 14 l6 -.8 -5.2 -5.2z" fill="#222"/></svg>
<span class="t" style="top:636.48px;font-size:8.75px;line-height:8.75px;color:#999;font-family:'Liberation Mono', monospace;left:496.80px;transform-origin:0 50%;transform:scaleX(1.3000);">1</span>
<span class="t" style="top:636.08px;font-size:9.49px;line-height:9.49px;color:#9b0f9b;font-family:'Liberation Mono', monospace;font-weight:bold;white-space:pre;left:536.06px;transform-origin:0 50%;transform:scaleX(1.4363);">SELECT</span>
<span class="t" style="top:636.08px;font-size:9.49px;line-height:9.49px;color:#888;font-family:'Liberation Mono', monospace;white-space:pre;left:585.91px;transform-origin:0 50%;transform:scaleX(1.3175);"> </span>
<span class="t" style="top:636.08px;font-size:9.49px;line-height:9.49px;color:#888;font-family:'Liberation Mono', monospace;white-space:pre;left:594.22px;transform-origin:0 50%;transform:scaleX(1.3175);">*</span>
<span class="t" style="top:636.08px;font-size:9.49px;line-height:9.49px;color:#888;font-family:'Liberation Mono', monospace;white-space:pre;left:602.53px;transform-origin:0 50%;transform:scaleX(1.3175);"> </span>
<span class="t" style="top:636.08px;font-size:9.49px;line-height:9.49px;color:#9b0f9b;font-family:'Liberation Mono', monospace;font-weight:bold;white-space:pre;left:610.84px;transform-origin:0 50%;transform:scaleX(1.4240);">FROM</span>
<span class="t" style="top:636.08px;font-size:9.49px;line-height:9.49px;color:#888;font-family:'Liberation Mono', monospace;white-space:pre;left:644.08px;transform-origin:0 50%;transform:scaleX(1.3175);"> </span>
<span class="t" style="top:636.08px;font-size:9.49px;line-height:9.49px;color:#6c8eb5;font-family:'Liberation Mono', monospace;white-space:pre;left:652.39px;transform-origin:0 50%;transform:scaleX(1.4520);">public.festivities</span>
<span class="t" style="top:649.49px;font-size:8.75px;line-height:8.75px;color:#999;font-family:'Liberation Mono', monospace;left:496.80px;transform-origin:0 50%;transform:scaleX(1.3000);">2</span>
<span class="t" style="top:649.09px;font-size:9.49px;line-height:9.49px;color:#9b0f9b;font-family:'Liberation Mono', monospace;font-weight:bold;white-space:pre;left:536.06px;transform-origin:0 50%;transform:scaleX(1.4420);">ORDER BY</span>
<span class="t" style="top:649.09px;font-size:9.49px;line-height:9.49px;color:#888;font-family:'Liberation Mono', monospace;white-space:pre;left:602.53px;transform-origin:0 50%;transform:scaleX(1.3175);"> </span>
<span class="t" style="top:649.09px;font-size:9.49px;line-height:9.49px;color:#6c8eb5;font-family:'Liberation Mono', monospace;white-space:pre;left:610.84px;transform-origin:0 50%;transform:scaleX(1.4479);">festivity_id</span>
<span class="t" style="top:649.09px;font-size:9.49px;line-height:9.49px;color:#888;font-family:'Liberation Mono', monospace;white-space:pre;left:710.55px;transform-origin:0 50%;transform:scaleX(1.3175);"> </span>
<span class="t" style="top:649.09px;font-size:9.49px;line-height:9.49px;color:#9b0f9b;font-family:'Liberation Mono', monospace;font-weight:bold;white-space:pre;left:718.86px;transform-origin:0 50%;transform:scaleX(1.4130);">ASC</span>
<div class="a" style="left:482.99px;top:830.20px;width:1012.01px;height:1.00px;background:#e2e5ea;"></div>
<span class="t" style="top:835.63px;font-size:9.95px;line-height:9.95px;color:#2f6895;left:492.00px;transform-origin:0 50%;transform:scaleX(1.3994);">Data Output</span>
<div class="a" style="left:482.99px;top:847.98px;width:89.51px;height:1.50px;background:#2f6895;"></div>
<span class="t" style="top:835.63px;font-size:9.95px;line-height:9.95px;color:#222;left:583.20px;transform-origin:0 50%;transform:scaleX(1.3908);">Messages</span>
<span class="t" style="top:835.63px;font-size:9.95px;line-height:9.95px;color:#222;left:663.50px;transform-origin:0 50%;transform:scaleX(1.4776);">Notifications</span>
<svg class="a" style="left:1469.45px;top:836.05px;" width="13.50" height="9.54" viewBox="0 0 16 16" preserveAspectRatio="none"><path d="M2 14 L14 2" stroke="#222" stroke-width="1.6"/><path d="M14 2 l-6 .8 5.2 5.2z M2 14 l6 -.8 -5.2 -5.2z" fill="#222"/></svg>
<div class="a" style="left:482.99px;top:849.82px;width:1012.01px;height:22.66px;background:#ebeef3;"></div>
<div class="a" style="left:485.80px;top:852.86px;width:32.40px;height:16.48px;background:#fff;border:1px solid #d3d7de;box-sizing:border-box;border-radius:3px;"></div>
<svg class="a" style="left:492.70px;top:855.84px;" width="18.00" height="10.30" viewBox="0 0 16 16" preserveAspectRatio="none"><path d="M1 4h9M1 7.5h9M1 11h5" stroke="#111" stroke-width="1.6"/><path d="M9 10.5h6M12 7.5v6" stroke="#111" stroke-width="1.8"/></svg>
<div class="a" style="left:521.90px;top:852.86px;width:131.70px;height:16.48px;background:#eef0f4;border:1px solid #d3d7de;box-sizing:border-box;border-radius:3px;"></div>
<div class="a" style="left:522.70px;top:853.51px;width:79.00px;height:15.18px;background:#fff;border-radius:2px;"></div>
<svg class="a" style="left:527.70px;top:855.29px;" width="14.00" height="11.38" viewBox="0 0 16 16" preserveAspectRatio="none"><rect x="1.5" y="1.5" width="9" height="10" rx="1" fill="none" stroke="#666" stroke-width="1.5"/><rect x="4.5" y="4.5" width="10" height="10.5" rx="1" fill="#666"/></svg>
<svg class="a" style="left:551.70px;top:858.33px;" width="10.00" height="5.96" viewBox="0 0 16 16" preserveAspectRatio="none"><path d="M2 5 L8 11 L14 5" fill="none" stroke="#222" stroke-width="2.4"/></svg>
<svg class="a" style="left:576.70px;top:855.02px;" width="14.00" height="11.92" viewBox="0 0 16 16" preserveAspectRatio="none"><rect x="2" y="3" width="12" height="12" rx="1" fill="none" stroke="#111" stroke-width="1.8"/><rect x="5.5" y="1" width="5" height="4" fill="#111"/></svg>
<div class="a" style="left:601.70px;top:853.40px;width:0.80px;height:15.39px;background:#d3d7de;"></div>
<svg class="a" style="left:606.20px;top:858.33px;" width="10.00" height="5.96" viewBox="0 0 16 16" preserveAspectRatio="none"><path d="M2 5 L8 11 L14 5" fill="none" stroke="#222" stroke-width="2.4"/></svg>
<svg class="a" style="left:631.20px;top:855.84px;" width="12.00" height="10.30" viewBox="0 0 16 16" preserveAspectRatio="none"><path d="M2 3.5h12v2H2z M3.5 6.5h9l-.8 8.5h-7.4z" fill="#777"/><rect x="6" y="1.5" width="4" height="2" fill="#777"/></svg>
<div class="a" style="left:659.00px;top:852.86px;width:32.50px;height:16.48px;background:#eef0f4;border:1px solid #d3d7de;box-sizing:border-box;border-radius:3px;"></div>
<svg class="a" style="left:667.70px;top:855.57px;" width="15.00" height="10.84" viewBox="0 0 16 16" preserveAspectRatio="none"><path d="M1 2 h12 v3 h-12z M1 6.3 h12 v3 h-12z M1 10.6 h7 v3 h-7z" fill="#777"/><circle cx="12" cy="11.5" r="3.6" fill="#777"/><circle cx="12" cy="11.5" r="1.6" fill="#eef0f4"/></svg>
<div class="a" style="left:696.90px;top:852.86px;width:30.60px;height:16.48px;background:#fff;border:1px solid #d3d7de;box-sizing:border-box;border-radius:3px;"></div>
<svg class="a" style="left:706.20px;top:855.84px;" width="12.00" height="10.30" viewBox="0 0 16 16" preserveAspectRatio="none"><path d="M6.2 1.5h3.6v5h3l-4.8 5-4.8-5h3z M2.5 13h11v1.8h-11z" fill="#111"/></svg>
<div class="a" style="left:733.00px;top:852.86px;width:33.50px;height:16.48px;background:#fff;border:1px solid #d3d7de;box-sizing:border-box;border-radius:3px;"></div>
<svg class="a" style="left:741.20px;top:856.92px;" width="17.00" height="8.13" viewBox="0 0 16 16" preserveAspectRatio="none"><path d="M1 11.5 L5.5 7 L8.5 9.5 L11.5 5.5 L15 7.5" fill="none" stroke="#111" stroke-width="2"/></svg>
<span class="t" style="top:856.89px;font-size:9.95px;line-height:9.95px;color:#222;left:1000.50px;transform-origin:0 50%;transform:scaleX(1.3962);">Showing rows: 1 to 3</span>
<div class="a" style="left:1135.00px;top:852.86px;width:29.80px;height:16.48px;background:#fff;border:1px solid #d3d7de;box-sizing:border-box;border-radius:3px;"></div>
<svg class="a" style="left:1143.00px;top:856.65px;" width="14.00" height="8.67" viewBox="0 0 16 16" preserveAspectRatio="none"><path d="M0.500 15 l1.200 -4.500 l8.500 -7.500 l3.500 3.500 l-8.500 7.500z M11.200 2 l1.500 -1.300 l3 3.200 l-1.500 1.300z" fill="#111"/></svg>
<span class="t" style="top:856.89px;font-size:9.95px;line-height:9.95px;color:#222;left:1176.80px;transform-origin:0 50%;transform:scaleX(1.3514);">Page No:</span>
<div class="a" style="left:1237.80px;top:852.86px;width:87.00px;height:16.48px;background:#fff;border-radius:3px;"></div>
<span class="t" style="top:856.89px;font-size:9.95px;line-height:9.95px;color:#222;left:1252.00px;transform-origin:0 50%;transform:scaleX(1.3000);">1</span>
<span class="t" style="top:856.89px;font-size:9.95px;line-height:9.95px;color:#222;left:1330.00px;transform-origin:0 50%;transform:scaleX(1.3451);">of 1</span>
<div class="a" style="left:1365.20px;top:852.86px;width:129.80px;height:16.48px;background:#eef0f4;border:1px solid #d3d7de;box-sizing:border-box;border-radius:3px;"></div>
<div class="a" style="left:1397.80px;top:853.40px;width:0.80px;height:15.39px;background:#d3d7de;"></div>
<div class="a" style="left:1430.20px;top:853.40px;width:0.80px;height:15.39px;background:#d3d7de;"></div>
<div class="a" style="left:1462.60px;top:853.40px;width:0.80px;height:15.39px;background:#d3d7de;"></div>
<svg class="a" style="left:1376.20px;top:857.46px;" width="11.00" height="7.05" viewBox="0 0 16 16" preserveAspectRatio="none"><path d="M3 3v10" stroke="#70747b" stroke-width="1.8"/><path d="M13 3 L5 8 L13 13z" fill="#70747b"/></svg>
<svg class="a" style="left:1408.70px;top:857.46px;" width="11.00" height="7.05" viewBox="0 0 16 16" preserveAspectRatio="none"><path d="M8 3 L1 8 L8 13z M15.5 3 L8.5 8 L15.5 13z" fill="#70747b"/></svg>
<svg class="a" style="left:1441.00px;top:857.46px;" width="11.00" height="7.05" viewBox="0 0 16 16" preserveAspectRatio="none"><path d="M8 3 L15 8 L8 13z M0.5 3 L7.5 8 L0.5 13z" fill="#70747b"/></svg>
<svg class="a" style="left:1473.50px;top:857.46px;" width="11.00" height="7.05" viewBox="0 0 16 16" preserveAspectRatio="none"><path d="M13 3v10" stroke="#70747b" stroke-width="1.8"/><path d="M3 3 L11 8 L3 13z" fill="#70747b"/></svg>
<div class="a" style="left:482.99px;top:872.48px;width:1011.41px;height:25.37px;background:#b9c0ce;"></div>
<div class="a" style="left:482.99px;top:897.84px;width:1011.41px;height:16.53px;background:#e9ecf2;"></div>
<div class="a" style="left:482.99px;top:914.37px;width:1011.41px;height:16.53px;background:#fff;"></div>
<div class="a" style="left:482.99px;top:930.90px;width:1011.41px;height:16.53px;background:#e9ecf2;"></div>
<div class="a" style="left:482.99px;top:897.84px;width:43.61px;height:49.59px;background:#b9c0ce;"></div>
<div class="a" style="left:482.99px;top:913.94px;width:1011.41px;height:0.87px;background:#d9dde5;"></div>
<span class="t" style="top:902.28px;font-size:9.21px;line-height:9.21px;color:#333;left:491.50px;transform-origin:0 50%;transform:scaleX(1.3000);">1</span>
<div class="a" style="left:482.99px;top:930.47px;width:1011.41px;height:0.87px;background:#d9dde5;"></div>
<span class="t" style="top:918.81px;font-size:9.21px;line-height:9.21px;color:#333;left:491.50px;transform-origin:0 50%;transform:scaleX(1.3000);">2</span>
<div class="a" style="left:482.99px;top:947.00px;width:1011.41px;height:0.87px;background:#d9dde5;"></div>
<span class="t" style="top:935.34px;font-size:9.21px;line-height:9.21px;color:#333;left:491.50px;transform-origin:0 50%;transform:scaleX(1.3000);">3</span>
<div class="a" style="left:541.55px;top:872.48px;width:0.70px;height:25.37px;background:#c9cfda;"></div>
<div class="a" style="left:541.55px;top:897.84px;width:0.70px;height:49.59px;background:#dde1e8;"></div>
<div class="a" style="left:643.15px;top:872.48px;width:0.70px;height:25.37px;background:#c9cfda;"></div>
<div class="a" style="left:643.15px;top:897.84px;width:0.70px;height:49.59px;background:#dde1e8;"></div>
<div class="a" style="left:773.45px;top:872.48px;width:0.70px;height:25.37px;background:#c9cfda;"></div>
<div class="a" style="left:773.45px;top:897.84px;width:0.70px;height:49.59px;background:#dde1e8;"></div>
<div class="a" style="left:861.95px;top:872.48px;width:0.70px;height:25.37px;background:#c9cfda;"></div>
<div class="a" style="left:861.95px;top:897.84px;width:0.70px;height:49.59px;background:#dde1e8;"></div>
<div class="a" style="left:950.05px;top:872.48px;width:0.70px;height:25.37px;background:#c9cfda;"></div>
<div class="a" style="left:950.05px;top:897.84px;width:0.70px;height:49.59px;background:#dde1e8;"></div>
<div class="a" style="left:1042.15px;top:872.48px;width:0.70px;height:25.37px;background:#c9cfda;"></div>
<div class="a" style="left:1042.15px;top:897.84px;width:0.70px;height:49.59px;background:#dde1e8;"></div>
<div class="a" style="left:1171.25px;top:872.48px;width:0.70px;height:25.37px;background:#c9cfda;"></div>
<div class="a" style="left:1171.25px;top:897.84px;width:0.70px;height:49.59px;background:#dde1e8;"></div>
<div class="a" style="left:1265.65px;top:872.48px;width:0.70px;height:25.37px;background:#c9cfda;"></div>
<div class="a" style="left:1265.65px;top:897.84px;width:0.70px;height:49.59px;background:#dde1e8;"></div>
<div class="a" style="left:1345.25px;top:872.48px;width:0.70px;height:25.37px;background:#c9cfda;"></div>
<div class="a" style="left:1345.25px;top:897.84px;width:0.70px;height:49.59px;background:#dde1e8;"></div>
<div class="a" style="left:1418.05px;top:872.48px;width:0.70px;height:25.37px;background:#c9cfda;"></div>
<div class="a" style="left:1418.05px;top:897.84px;width:0.70px;height:49.59px;background:#dde1e8;"></div>
<svg class="a" style="left:526.50px;top:881.96px;" width="10.00" height="7.05" viewBox="0 0 16 16" preserveAspectRatio="none"><path d="M0.5 14 l1.5 -4.5 l9 -6 l3.5 4.500 l-9 6z" fill="#111"/><path d="M11.500 2.800 l1.500 -1 l3 4 l-1.500 1z" fill="#111"/></svg>
<span class="t" style="top:935.45px;font-size:9.21px;line-height:9.21px;color:#333;left:528.00px;transform-origin:0 50%;transform:scaleX(1.3100);">it</span>
<span class="t" style="top:876.12px;font-size:9.03px;line-height:9.03px;color:#1d1d1d;font-weight:bold;left:547.90px;transform-origin:0 50%;transform:scaleX(1.2408);">festivity_date</span>
<span class="t" style="top:886.63px;font-size:9.03px;line-height:9.03px;color:#333;left:547.90px;transform-origin:0 50%;transform:scaleX(1.3665);">date</span>
<svg class="a" style="left:626.00px;top:881.96px;" width="10.00" height="7.05" viewBox="0 0 16 16" preserveAspectRatio="none"><path d="M0.5 14 l1.5 -4.5 l9 -6 l3.5 4.500 l-9 6z" fill="#111"/><path d="M11.500 2.800 l1.500 -1 l3 4 l-1.500 1z" fill="#111"/></svg>
<span class="t" style="top:902.39px;font-size:9.21px;line-height:9.21px;color:#333;left:550.70px;transform-origin:0 50%;transform:scaleX(1.2745);">2025-03-14</span>
<span class="t" style="top:918.92px;font-size:9.21px;line-height:9.21px;color:#333;left:550.70px;transform-origin:0 50%;transform:scaleX(1.2745);">2025-12-25</span>
<span class="t" style="top:935.45px;font-size:9.21px;line-height:9.21px;color:#333;left:550.70px;transform-origin:0 50%;transform:scaleX(1.2745);">2025-12-25</span>
<span class="t" style="top:876.12px;font-size:9.03px;line-height:9.03px;color:#1d1d1d;font-weight:bold;left:650.60px;transform-origin:0 50%;transform:scaleX(1.2244);">description</span>
<span class="t" style="top:886.63px;font-size:9.03px;line-height:9.03px;color:#333;left:650.60px;transform-origin:0 50%;transform:scaleX(1.3749);">text</span>
<svg class="a" style="left:756.00px;top:881.96px;" width="10.00" height="7.05" viewBox="0 0 16 16" preserveAspectRatio="none"><path d="M0.5 14 l1.5 -4.5 l9 -6 l3.5 4.500 l-9 6z" fill="#111"/><path d="M11.500 2.800 l1.500 -1 l3 4 l-1.500 1z" fill="#111"/></svg>
<span class="t" style="top:902.39px;font-size:9.21px;line-height:9.21px;color:#333;left:653.00px;transform-origin:0 50%;transform:scaleX(1.2465);">Festa e pranverës q...</span>
<span class="t" style="top:918.92px;font-size:9.21px;line-height:9.21px;color:#333;left:653.00px;transform-origin:0 50%;transform:scaleX(1.3108);">[null]</span>
<span class="t" style="top:935.45px;font-size:9.21px;line-height:9.21px;color:#333;left:653.00px;transform-origin:0 50%;transform:scaleX(1.3108);">[null]</span>
<span class="t" style="top:876.12px;font-size:9.03px;line-height:9.03px;color:#1d1d1d;font-weight:bold;left:780.90px;transform-origin:0 50%;transform:scaleX(1.2332);">recurrence</span>
<span class="t" style="top:886.63px;font-size:9.03px;line-height:9.03px;color:#333;left:780.90px;transform-origin:0 50%;transform:scaleX(1.3749);">text</span>
<svg class="a" style="left:843.80px;top:881.96px;" width="10.00" height="7.05" viewBox="0 0 16 16" preserveAspectRatio="none"><path d="M0.5 14 l1.5 -4.5 l9 -6 l3.5 4.500 l-9 6z" fill="#111"/><path d="M11.500 2.800 l1.500 -1 l3 4 l-1.500 1z" fill="#111"/></svg>
<span class="t" style="top:902.39px;font-size:9.21px;line-height:9.21px;color:#333;left:783.30px;transform-origin:0 50%;transform:scaleX(1.2807);">annual</span>
<span class="t" style="top:918.92px;font-size:9.21px;line-height:9.21px;color:#333;left:783.30px;transform-origin:0 50%;transform:scaleX(1.2807);">annual</span>
<span class="t" style="top:935.45px;font-size:9.21px;line-height:9.21px;color:#333;left:783.30px;transform-origin:0 50%;transform:scaleX(1.2807);">annual</span>
<span class="t" style="top:876.12px;font-size:9.03px;line-height:9.03px;color:#1d1d1d;font-weight:bold;left:868.30px;transform-origin:0 50%;transform:scaleX(1.2229);">media_link</span>
<span class="t" style="top:886.63px;font-size:9.03px;line-height:9.03px;color:#333;left:868.30px;transform-origin:0 50%;transform:scaleX(1.3749);">text</span>
<svg class="a" style="left:931.60px;top:881.96px;" width="10.00" height="7.05" viewBox="0 0 16 16" preserveAspectRatio="none"><path d="M0.5 14 l1.5 -4.5 l9 -6 l3.5 4.500 l-9 6z" fill="#111"/><path d="M11.500 2.800 l1.500 -1 l3 4 l-1.500 1z" fill="#111"/></svg>
<span class="t" style="top:902.39px;font-size:9.21px;line-height:9.21px;color:#333;left:870.00px;transform-origin:0 50%;transform:scaleX(1.3108);">[null]</span>
<span class="t" style="top:918.92px;font-size:9.21px;line-height:9.21px;color:#333;left:870.00px;transform-origin:0 50%;transform:scaleX(1.3108);">[null]</span>
<span class="t" style="top:935.45px;font-size:9.21px;line-height:9.21px;color:#333;left:870.00px;transform-origin:0 50%;transform:scaleX(1.3108);">[null]</span>
<span class="t" style="top:876.12px;font-size:9.03px;line-height:9.03px;color:#1d1d1d;font-weight:bold;left:956.80px;transform-origin:0 50%;transform:scaleX(1.2296);">media_type</span>
<span class="t" style="top:886.63px;font-size:9.03px;line-height:9.03px;color:#333;left:956.80px;transform-origin:0 50%;transform:scaleX(1.3749);">text</span>
<svg class="a" style="left:1023.00px;top:881.96px;" width="10.00" height="7.05" viewBox="0 0 16 16" preserveAspectRatio="none"><path d="M0.5 14 l1.5 -4.5 l9 -6 l3.5 4.500 l-9 6z" fill="#111"/><path d="M11.500 2.800 l1.500 -1 l3 4 l-1.500 1z" fill="#111"/></svg>
<span class="t" style="top:902.39px;font-size:9.21px;line-height:9.21px;color:#333;left:958.50px;transform-origin:0 50%;transform:scaleX(1.3108);">[null]</span>
<span class="t" style="top:918.92px;font-size:9.21px;line-height:9.21px;color:#333;left:958.50px;transform-origin:0 50%;transform:scaleX(1.3108);">[null]</span>
<span class="t" style="top:935.45px;font-size:9.21px;line-height:9.21px;color:#333;left:958.50px;transform-origin:0 50%;transform:scaleX(1.3108);">[null]</span>
<span class="t" style="top:876.12px;font-size:9.03px;line-height:9.03px;color:#1d1d1d;font-weight:bold;left:1048.60px;transform-origin:0 50%;transform:scaleX(1.2426);">media_description</span>
<span class="t" style="top:886.63px;font-size:9.03px;line-height:9.03px;color:#333;left:1048.60px;transform-origin:0 50%;transform:scaleX(1.3749);">text</span>
<svg class="a" style="left:1154.00px;top:881.96px;" width="10.00" height="7.05" viewBox="0 0 16 16" preserveAspectRatio="none"><path d="M0.5 14 l1.5 -4.5 l9 -6 l3.5 4.500 l-9 6z" fill="#111"/><path d="M11.500 2.800 l1.500 -1 l3 4 l-1.500 1z" fill="#111"/></svg>
<span class="t" style="top:902.39px;font-size:9.21px;line-height:9.21px;color:#333;left:1050.70px;transform-origin:0 50%;transform:scaleX(1.3108);">[null]</span>
<span class="t" style="top:918.92px;font-size:9.21px;line-height:9.21px;color:#333;left:1050.70px;transform-origin:0 50%;transform:scaleX(1.3108);">[null]</span>
<span class="t" style="top:935.45px;font-size:9.21px;line-height:9.21px;color:#333;left:1050.70px;transform-origin:0 50%;transform:scaleX(1.3108);">[null]</span>
<span class="t" style="top:876.12px;font-size:9.03px;line-height:9.03px;color:#1d1d1d;font-weight:bold;left:1215.40px;transform-origin:0 50%;transform:scaleX(1.2476);">geom</span>
<span class="t" style="top:886.63px;font-size:9.03px;line-height:9.03px;color:#333;left:1215.40px;transform-origin:0 50%;transform:scaleX(1.3167);">geometry</span>
<span class="t" style="top:902.39px;font-size:9.21px;line-height:9.21px;color:#333;left:1179.90px;transform-origin:0 50%;transform:scaleX(1.2912);">0101000020...</span>
<span class="t" style="top:918.92px;font-size:9.21px;line-height:9.21px;color:#333;left:1179.90px;transform-origin:0 50%;transform:scaleX(1.2912);">0101000020...</span>
<span class="t" style="top:935.45px;font-size:9.21px;line-height:9.21px;color:#333;left:1179.90px;transform-origin:0 50%;transform:scaleX(1.2912);">0101000020...</span>
<span class="t" style="top:876.12px;font-size:9.03px;line-height:9.03px;color:#1d1d1d;font-weight:bold;left:1272.80px;transform-origin:0 50%;transform:scaleX(1.2201);">name_en</span>
<span class="t" style="top:886.63px;font-size:9.03px;line-height:9.03px;color:#333;left:1272.80px;transform-origin:0 50%;transform:scaleX(1.3749);">text</span>
<svg class="a" style="left:1327.30px;top:881.96px;" width="10.00" height="7.05" viewBox="0 0 16 16" preserveAspectRatio="none"><path d="M0.5 14 l1.5 -4.5 l9 -6 l3.5 4.500 l-9 6z" fill="#111"/><path d="M11.500 2.800 l1.500 -1 l3 4 l-1.500 1z" fill="#111"/></svg>
<span class="t" style="top:902.39px;font-size:9.21px;line-height:9.21px;color:#333;left:1274.60px;transform-origin:0 50%;transform:scaleX(1.3108);">[null]</span>
<span class="t" style="top:918.92px;font-size:9.21px;line-height:9.21px;color:#333;left:1274.60px;transform-origin:0 50%;transform:scaleX(1.3108);">[null]</span>
<span class="t" style="top:935.45px;font-size:9.21px;line-height:9.21px;color:#333;left:1274.60px;transform-origin:0 50%;transform:scaleX(1.3108);">[null]</span>
<span class="t" style="top:876.12px;font-size:9.03px;line-height:9.03px;color:#1d1d1d;font-weight:bold;left:1351.70px;transform-origin:0 50%;transform:scaleX(1.2031);">name_it</span>
<span class="t" style="top:886.63px;font-size:9.03px;line-height:9.03px;color:#333;left:1351.70px;transform-origin:0 50%;transform:scaleX(1.3749);">text</span>
<svg class="a" style="left:1400.80px;top:881.96px;" width="10.00" height="7.05" viewBox="0 0 16 16" preserveAspectRatio="none"><path d="M0.5 14 l1.5 -4.5 l9 -6 l3.5 4.500 l-9 6z" fill="#111"/><path d="M11.500 2.800 l1.500 -1 l3 4 l-1.500 1z" fill="#111"/></svg>
<span class="t" style="top:902.39px;font-size:9.21px;line-height:9.21px;color:#333;left:1353.80px;transform-origin:0 50%;transform:scaleX(1.3108);">[null]</span>
<span class="t" style="top:918.92px;font-size:9.21px;line-height:9.21px;color:#333;left:1353.80px;transform-origin:0 50%;transform:scaleX(1.3108);">[null]</span>
<span class="t" style="top:935.45px;font-size:9.21px;line-height:9.21px;color:#333;left:1353.80px;transform-origin:0 50%;transform:scaleX(1.3108);">[null]</span>
<span class="t" style="top:876.12px;font-size:9.03px;line-height:9.03px;color:#1d1d1d;font-weight:bold;left:1425.20px;transform-origin:0 50%;transform:scaleX(1.2150);">name_sq</span>
<span class="t" style="top:886.63px;font-size:9.03px;line-height:9.03px;color:#333;left:1425.20px;transform-origin:0 50%;transform:scaleX(1.3749);">text</span>
<svg class="a" style="left:1480.50px;top:881.96px;" width="10.00" height="7.05" viewBox="0 0 16 16" preserveAspectRatio="none"><path d="M0.5 14 l1.5 -4.5 l9 -6 l3.5 4.500 l-9 6z" fill="#111"/><path d="M11.500 2.800 l1.500 -1 l3 4 l-1.500 1z" fill="#111"/></svg>
<span class="t" style="top:902.39px;font-size:9.21px;line-height:9.21px;color:#333;left:1427.00px;transform-origin:0 50%;transform:scaleX(1.3108);">[null]</span>
<span class="t" style="top:918.92px;font-size:9.21px;line-height:9.21px;color:#333;left:1427.00px;transform-origin:0 50%;transform:scaleX(1.3108);">[null]</span>
<span class="t" style="top:935.45px;font-size:9.21px;line-height:9.21px;color:#333;left:1427.00px;transform-origin:0 50%;transform:scaleX(1.3108);">[null]</span>
<div class="a" style="left:1178.80px;top:876.92px;width:31.20px;height:16.59px;background:#fff;border-radius:3px;"></div>
<svg class="a" style="left:1188.40px;top:880.39px;" width="12.00" height="9.76" viewBox="0 0 16 16" preserveAspectRatio="none"><path d="M1 3.5 l4.5 -1.5 v11 l-4.5 1.5z M6.5 2 l4 1.5 v11 l-4 -1.5z M11.5 3.5 l3.5 -1.5 v11 l-3.5 1.5z" fill="#111"/></svg>
<div class="a" style="left:482.99px;top:1040.30px;width:1012.01px;height:4.50px;background:#f0f2f5;"></div>
<div class="a" style="left:727.70px;top:1040.80px;width:763.30px;height:3.50px;background:#d2d5db;border-radius:2px;"></div>
<div class="a" style="left:0.00px;top:1044.80px;width:1497.00px;height:12.00px;background:#fff;"></div>
<div class="a" style="left:0.00px;top:506.80px;width:1497.00px;height:1.30px;background:#3a3a3a;"></div>
<div class="a" style="left:0.50px;top:506.80px;width:1.50px;height:538.20px;background:#3a3a3a;"></div>
<svg class="a" style="left:2.00px;top:1090.50px;" width="15.00" height="10.50" viewBox="0 0 16 12" preserveAspectRatio="none"><ellipse cx="7" cy="6" rx="5.600" ry="4.700" fill="none" stroke="#589632" stroke-width="2.600"/><path d="M8 7 l6 4.500" stroke="#589632" stroke-width="2.600"/><path d="M9 6.500 l5.500 4" stroke="#ee7913" stroke-width="1.200"/></svg>
<span class="t" style="top:1092.33px;font-size:9.30px;line-height:9.30px;color:#111;left:21.70px;transform-origin:0 50%;transform:scaleX(1.1727);">*Final DIVA_Berat_base — QGIS</span>
<svg class="a" style="left:1379.50px;top:1094.50px;" width="14.00" height="2.00" viewBox="0 0 14 2" preserveAspectRatio="none"><path d="M0 1h14" stroke="#333" stroke-width="1"/></svg>
<svg class="a" style="left:1426.50px;top:1090.50px;" width="11.00" height="9.00" viewBox="0 0 11 9" preserveAspectRatio="none"><rect x="0.500" y="2.500" width="8" height="6" fill="none" stroke="#333"/><path d="M2.500 2.500 v-2 h8 v6 h-2" fill="none" stroke="#333"/></svg>
<svg class="a" style="left:1472.50px;top:1090.50px;" width="12.00" height="9.00" viewBox="0 0 12 9" preserveAspectRatio="none"><path d="M0.500 0.500 L11.500 8.500 M11.500 0.500 L0.500 8.500" stroke="#333" stroke-width="1"/></svg>
<div class="a" style="left:0.00px;top:1104.00px;width:1497.00px;height:14.50px;background:#efefef;"></div>
<span class="t" style="top:1108.23px;font-size:9.30px;line-height:9.30px;color:#1a1a1a;left:10.70px;transform-origin:0 50%;transform:scaleX(1.2601);">Progetto</span>
<div class="a" style="left:16.74px;top:1116.60px;width:4.98px;height:0.70px;background:#444;"></div>
<span class="t" style="top:1108.23px;font-size:9.30px;line-height:9.30px;color:#1a1a1a;left:70.00px;transform-origin:0 50%;transform:scaleX(1.2996);">Modifica</span>
<div class="a" style="left:70.50px;top:1116.60px;width:5.06px;height:0.70px;background:#444;"></div>
<span class="t" style="top:1108.23px;font-size:9.30px;line-height:9.30px;color:#1a1a1a;left:129.30px;transform-origin:0 50%;transform:scaleX(1.1994);">Visualizza</span>
<div class="a" style="left:129.80px;top:1116.60px;width:4.50px;height:0.70px;background:#444;"></div>
<span class="t" style="top:1108.23px;font-size:9.30px;line-height:9.30px;color:#1a1a1a;left:194.00px;transform-origin:0 50%;transform:scaleX(1.1476);">Layer</span>
<div class="a" style="left:194.50px;top:1116.60px;width:4.81px;height:0.70px;background:#444;"></div>
<span class="t" style="top:1108.23px;font-size:9.30px;line-height:9.30px;color:#1a1a1a;left:235.00px;transform-origin:0 50%;transform:scaleX(1.2643);">Impostazioni</span>
<div class="a" style="left:235.50px;top:1116.60px;width:4.95px;height:0.70px;background:#444;"></div>
<span class="t" style="top:1108.23px;font-size:9.30px;line-height:9.30px;color:#1a1a1a;left:315.70px;transform-origin:0 50%;transform:scaleX(1.2000);">Plugins</span>
<div class="a" style="left:316.20px;top:1116.60px;width:4.71px;height:0.70px;background:#444;"></div>
<span class="t" style="top:1108.23px;font-size:9.30px;line-height:9.30px;color:#1a1a1a;left:367.30px;transform-origin:0 50%;transform:scaleX(1.2556);">Vettore</span>
<div class="a" style="left:388.94px;top:1116.60px;width:4.76px;height:0.70px;background:#444;"></div>
<span class="t" style="top:1108.23px;font-size:9.30px;line-height:9.30px;color:#1a1a1a;left:419.00px;transform-origin:0 50%;transform:scaleX(1.1573);">Raster</span>
<div class="a" style="left:419.50px;top:1116.60px;width:4.75px;height:0.70px;background:#444;"></div>
<span class="t" style="top:1108.23px;font-size:9.30px;line-height:9.30px;color:#1a1a1a;left:465.30px;transform-origin:0 50%;transform:scaleX(1.1981);">Database</span>
<div class="a" style="left:465.80px;top:1116.60px;width:5.37px;height:0.70px;background:#444;"></div>
<span class="t" style="top:1108.23px;font-size:9.30px;line-height:9.30px;color:#1a1a1a;left:527.60px;transform-origin:0 50%;transform:scaleX(1.2663);">Web</span>
<div class="a" style="left:528.10px;top:1116.60px;width:7.20px;height:0.70px;background:#444;"></div>
<span class="t" style="top:1108.23px;font-size:9.30px;line-height:9.30px;color:#1a1a1a;left:566.00px;transform-origin:0 50%;transform:scaleX(1.2316);">Mesh</span>
<div class="a" style="left:566.50px;top:1116.60px;width:6.30px;height:0.70px;background:#444;"></div>
<span class="t" style="top:1108.23px;font-size:9.30px;line-height:9.30px;color:#1a1a1a;left:608.00px;transform-origin:0 50%;transform:scaleX(1.1957);">Processing</span>
<div class="a" style="left:625.00px;top:1116.60px;width:4.95px;height:0.70px;background:#444;"></div>
<span class="t" style="top:1108.23px;font-size:9.30px;line-height:9.30px;color:#1a1a1a;left:677.00px;transform-origin:0 50%;transform:scaleX(1.2091);">Guida</span>
<div class="a" style="left:677.50px;top:1116.60px;width:5.40px;height:0.70px;background:#444;"></div>
<div class="a" style="left:0.00px;top:1118.50px;width:1497.00px;height:109.50px;background:#f4f4f4;"></div>
<div class="a" style="left:0.00px;top:1118.50px;width:1497.00px;height:1.00px;background:#fbfbfb;"></div>
<div class="a" style="left:0.00px;top:1145.50px;width:1497.00px;height:1.00px;background:#dcdcdc;"></div>
<div class="a" style="left:0.00px;top:1173.20px;width:1497.00px;height:1.00px;background:#dcdcdc;"></div>
<div class="a" style="left:0.00px;top:1200.20px;width:1497.00px;height:1.00px;background:#dcdcdc;"></div>
<div class="a" style="left:0.00px;top:1227.00px;width:1497.00px;height:1.00px;background:#dcdcdc;"></div>
<div class="a" style="left:0.00px;top:1201.20px;width:1497.00px;height:25.80px;background:#fafafa;"></div>
<svg class="a" style="left:5.00px;top:1125.80px;" width="4.00" height="14.00" viewBox="0 0 4 14" preserveAspectRatio="none"><path d="M1 0v14M3 0v14" stroke="#cfcfcf" stroke-width="1" stroke-dasharray="1 1.500"/></svg>
<svg class="a" style="left:5.00px;top:1153.00px;" width="4.00" height="14.00" viewBox="0 0 4 14" preserveAspectRatio="none"><path d="M1 0v14M3 0v14" stroke="#cfcfcf" stroke-width="1" stroke-dasharray="1 1.500"/></svg>
<svg class="a" style="left:5.00px;top:1180.40px;" width="4.00" height="14.00" viewBox="0 0 4 14" preserveAspectRatio="none"><path d="M1 0v14M3 0v14" stroke="#cfcfcf" stroke-width="1" stroke-dasharray="1 1.500"/></svg>
<svg class="a" style="left:5.00px;top:1207.20px;" width="4.00" height="14.00" viewBox="0 0 4 14" preserveAspectRatio="none"><path d="M1 0v14M3 0v14" stroke="#cfcfcf" stroke-width="1" stroke-dasharray="1 1.500"/></svg>
<div class="a" style="left:222.30px;top:1121.70px;width:31.00px;height:21.60px;background:#dcdcdc;border:1px solid #bdbdbd;box-sizing:border-box;border-radius:2px;"></div>
<svg class="a" style="left:16.80px;top:1123.80px;" width="23.00" height="18.00" viewBox="0 0 24 20" preserveAspectRatio="none"><path d="M5 1.500 h9 l5 4.500 v12.500 h-14z" fill="#fff" stroke="#777" stroke-width="1.200"/><path d="M14 1.500 v4.500 h5" fill="none" stroke="#777" stroke-width="1"/></svg>
<svg class="a" style="left:49.50px;top:1123.80px;" width="23.00" height="18.00" viewBox="0 0 24 20" preserveAspectRatio="none"><path d="M1.500 4 h7 l2 2 h9 v3 h-18z" fill="#e9b92e"/><path d="M1 17.500 l2 -9.500 h19.500 l-2.500 9.500z" fill="#f7d44a" stroke="#d9a520" stroke-width=".8"/></svg>
<svg class="a" style="left:81.80px;top:1123.80px;" width="23.00" height="18.00" viewBox="0 0 24 20" preserveAspectRatio="none"><path d="M2.500 2 h16 l3 3 v13 h-19z" fill="#5b8ec9" stroke="#3b6aa0" stroke-width="1"/><rect x="6" y="2.500" width="10" height="6" fill="#e6ecf4"/><rect x="6" y="12" width="12" height="6" fill="#dfe6ef"/><rect x="8" y="13.500" width="3" height="3.500" fill="#3b6aa0"/></svg>
<svg class="a" style="left:113.50px;top:1123.80px;" width="23.00" height="18.00" viewBox="0 0 24 20" preserveAspectRatio="none"><path d="M2 3 h9 l3 3 v12 h-12z" fill="#f3cf55" stroke="#c79a22" stroke-width="1"/><path d="M8 7 h9 l3 2.500 v9 h-12z" fill="#fff" stroke="#999" stroke-width="1"/><rect x="14" y="11" width="9" height="8" rx="1" fill="#f0d94a" stroke="#c9a820" stroke-width=".8"/><path d="M16 15h5M18.5 12.800v4.400" stroke="#fff" stroke-width="1.6"/></svg>
<svg class="a" style="left:146.20px;top:1123.80px;" width="23.00" height="18.00" viewBox="0 0 24 20" preserveAspectRatio="none"><path d="M2 3 h17 l3 3 v11 h-20z" fill="#fff" stroke="#777" stroke-width="1.200"/><path d="M8 7 l9 8" stroke="#888" stroke-width="2.500"/><path d="M15 13 l5 4.500" stroke="#e8c93a" stroke-width="3"/><circle cx="8" cy="7.500" r="2.500" fill="none" stroke="#888" stroke-width="1.500"/></svg>
<svg class="a" style="left:177.80px;top:1123.80px;" width="23.00" height="18.00" viewBox="0 0 24 20" preserveAspectRatio="none"><ellipse cx="7" cy="5" rx="4.500" ry="3.500" fill="#dc5a3c"/><rect x="3" y="11" width="8" height="7" fill="#7db07a"/><path d="M15 8 l6 -5.500" stroke="#4a7fc1" stroke-width="2.500"/><text x="14.500" y="18" font-size="9" font-family="Liberation Sans, sans-serif" fill="#555">a</text></svg>
<svg class="a" style="left:226.30px;top:1123.80px;" width="23.00" height="18.00" viewBox="0 0 24 20" preserveAspectRatio="none"><path d="M7 18 q-3 -4 -4.500 -7 q-.5 -1.500 1 -1.500 q1 0 2.500 2.500 v-8 q0 -1.500 1.300 -1.500 q1.200 0 1.200 1.500 v-2 q0 -1.500 1.300 -1.500 q1.200 0 1.200 1.500 v1 q0 -1.500 1.300 -1.500 q1.200 0 1.200 1.500 v1.500 q0 -1.300 1.200 -1.300 q1.300 0 1.300 1.300 v7 q0 4 -2 6.500z" fill="#fff" stroke="#333" stroke-width="1.200"/></svg>
<svg class="a" style="left:258.50px;top:1123.80px;" width="23.00" height="18.00" viewBox="0 0 24 20" preserveAspectRatio="none"><rect x="7" y="5" width="10" height="10" fill="#f0d94a" stroke="#c9a820"/><path d="M12 0 l4 4.500 h-8z M12 20 l4 -4.500 h-8z M0 10 l5 -4 v8z M24 10 l-5 -4 v8z" fill="#4a7fc1"/></svg>
<svg class="a" style="left:290.80px;top:1123.80px;" width="23.00" height="18.00" viewBox="0 0 24 20" preserveAspectRatio="none"><path d="M9 12 L2.500 17.500" stroke="#6b5a1e" stroke-width="4" stroke-linecap="round"/><path d="M9 12 L2.500 17.500" stroke="#e8c93a" stroke-width="2.400" stroke-linecap="round"/><ellipse cx="14" cy="7.500" rx="7" ry="6" fill="#e8eef5" stroke="#555" stroke-width="1.300"/><path d="M10 7.500 h8 M14 4 v7" stroke="#3f74b8" stroke-width="2.400"/></svg>
<svg class="a" style="left:323.50px;top:1123.80px;" width="23.00" height="18.00" viewBox="0 0 24 20" preserveAspectRatio="none"><path d="M9 12 L2.500 17.500" stroke="#6b5a1e" stroke-width="4" stroke-linecap="round"/><path d="M9 12 L2.500 17.500" stroke="#e8c93a" stroke-width="2.400" stroke-linecap="round"/><ellipse cx="14" cy="7.500" rx="7" ry="6" fill="#e8eef5" stroke="#555" stroke-width="1.300"/><path d="M10 7.500 h8" stroke="#3f74b8" stroke-width="2.400"/></svg>
<svg class="a" style="left:356.20px;top:1123.80px;" width="23.00" height="18.00" viewBox="0 0 24 20" preserveAspectRatio="none"><path d="M8 1 h-7 v6z M16 1 h7 v6z M1 13 v6 h7z M23 13 v6 h-7z" fill="#4a7fc1"/><path d="M9 12 L2.500 17.500" stroke="#6b5a1e" stroke-width="4" stroke-linecap="round"/><path d="M9 12 L2.500 17.500" stroke="#e8c93a" stroke-width="2.400" stroke-linecap="round"/><ellipse cx="14" cy="7.500" rx="7" ry="6" fill="#f3f5f8" stroke="#555" stroke-width="1.300"/></svg>
<svg class="a" style="left:388.50px;top:1123.80px;" width="23.00" height="18.00" viewBox="0 0 24 20" preserveAspectRatio="none"><path d="M9 12 L2.500 17.500" stroke="#6b5a1e" stroke-width="4" stroke-linecap="round"/><path d="M9 12 L2.500 17.500" stroke="#e8c93a" stroke-width="2.400" stroke-linecap="round"/><ellipse cx="14" cy="7.500" rx="7" ry="6" fill="#f7f3d0" stroke="#555" stroke-width="1.300"/><rect x="7" y="2" width="5" height="8" fill="#f0d94a"/></svg>
<svg class="a" style="left:420.80px;top:1123.80px;" width="23.00" height="18.00" viewBox="0 0 24 20" preserveAspectRatio="none"><path d="M9 12 L2.500 17.500" stroke="#6b5a1e" stroke-width="4" stroke-linecap="round"/><path d="M9 12 L2.500 17.500" stroke="#e8c93a" stroke-width="2.400" stroke-linecap="round"/><ellipse cx="14" cy="7.500" rx="7" ry="6" fill="#ededed" stroke="#555" stroke-width="1.300"/></svg>
<svg class="a" style="left:452.80px;top:1123.80px;opacity:0.72;" width="23.00" height="18.00" viewBox="0 0 24 20" preserveAspectRatio="none"><path d="M9 12 L2.500 17.500" stroke="#d0d0d0" stroke-width="3.500" stroke-linecap="round"/><ellipse cx="14" cy="7.500" rx="7" ry="6" fill="#f0f0f0" stroke="#cfcfcf" stroke-width="1.300"/><text x="9" y="10.500" font-size="7" font-family="Liberation Sans, sans-serif" fill="#c4c4c4">1:1</text></svg>
<svg class="a" style="left:485.50px;top:1123.80px;" width="23.00" height="18.00" viewBox="0 0 24 20" preserveAspectRatio="none"><path d="M9 12 L2.500 17.500" stroke="#6b5a1e" stroke-width="4" stroke-linecap="round"/><path d="M9 12 L2.500 17.500" stroke="#e8c93a" stroke-width="2.400" stroke-linecap="round"/><ellipse cx="14" cy="7.500" rx="7" ry="6" fill="#f3f5f8" stroke="#555" stroke-width="1.300"/><rect x="13" y="10" width="10" height="9" fill="#4a7fc1"/><path d="M21 12 l-5 2.500 5 2.500" stroke="#fff" stroke-width="1.600" fill="none"/></svg>
<svg class="a" style="left:517.10px;top:1123.80px;opacity:0.72;" width="23.00" height="18.00" viewBox="0 0 24 20" preserveAspectRatio="none"><path d="M9 12 L2.500 17.500" stroke="#d0d0d0" stroke-width="3.500" stroke-linecap="round"/><ellipse cx="14" cy="7.500" rx="7" ry="6" fill="#f0f0f0" stroke="#cfcfcf" stroke-width="1.300"/><rect x="13" y="10" width="10" height="9" fill="#e0e0e0" stroke="#ccc"/></svg>
<svg class="a" style="left:549.50px;top:1123.80px;" width="23.00" height="18.00" viewBox="0 0 24 20" preserveAspectRatio="none"><path d="M3 2 h14 v15 h-14z" fill="#d8d8d8" stroke="#aaa"/><path d="M3 2 q-2 8 0 15" fill="none" stroke="#999"/><rect x="14" y="11" width="9" height="8" rx="1" fill="#f0d94a" stroke="#c9a820" stroke-width=".8"/><path d="M16 15h5M18.5 12.800v4.400" stroke="#fff" stroke-width="1.6"/></svg>
<svg class="a" style="left:583.20px;top:1123.80px;" width="23.00" height="18.00" viewBox="0 0 24 20" preserveAspectRatio="none"><path d="M2 12 l7 -8 h11 l-5 8z" fill="#bdbdbd" stroke="#999"/><path d="M2 12 h13 v3 h-13z" fill="#9a9a9a"/><rect x="14" y="11" width="9" height="8" rx="1" fill="#f0d94a" stroke="#c9a820" stroke-width=".8"/><path d="M16 15h5M18.5 12.800v4.400" stroke="#fff" stroke-width="1.6"/></svg>
<svg class="a" style="left:614.80px;top:1123.80px;" width="23.00" height="18.00" viewBox="0 0 24 20" preserveAspectRatio="none"><path d="M5 2 h9 v16 l-4.500 -3 -4.500 3z" fill="#4a7fc1" stroke="#2f5f9a"/><rect x="14" y="11" width="9" height="8" rx="1" fill="#f0d94a" stroke="#c9a820" stroke-width=".8"/><path d="M16 15h5M18.5 12.800v4.400" stroke="#fff" stroke-width="1.6"/></svg>
<svg class="a" style="left:647.30px;top:1123.80px;" width="23.00" height="18.00" viewBox="0 0 24 20" preserveAspectRatio="none"><path d="M2 3 h9 v15 h-9z M13 3 h9 v15 h-9z" fill="#dcdcdc" stroke="#aaa"/><path d="M14.500 3 h4 v7 l-2 -1.500 -2 1.500z" fill="#4a7fc1"/></svg>
<svg class="a" style="left:678.90px;top:1123.80px;" width="23.00" height="18.00" viewBox="0 0 24 20" preserveAspectRatio="none"><ellipse cx="12" cy="10" rx="10" ry="8.500" fill="#fff" stroke="#555" stroke-width="1.400"/><path d="M12 4 v6 l5 2.500" stroke="#555" stroke-width="1.300" fill="none"/></svg>
<svg class="a" style="left:711.50px;top:1123.80px;" width="23.00" height="18.00" viewBox="0 0 24 20" preserveAspectRatio="none"><path d="M3 9 a9 7 0 0 1 16 -3 l2.500 -2 v7 h-8 l2.500 -2 a5.500 4 0 0 0 -9 2z M21 11 a9 7 0 0 1 -16 3 l-2.500 2 v-7 h8 l-2.500 2 a5.500 4 0 0 0 9 -2z" fill="#3f86d6" stroke="#2b66ad" stroke-width=".7"/></svg>
<svg class="a" style="left:761.40px;top:1123.80px;opacity:0.72;" width="23.00" height="18.00" viewBox="0 0 24 20" preserveAspectRatio="none"><path d="M3 5 q0 -3 5 -3 h6 q5 0 5 3 v6 q0 3 -5 3 h-6 q-5 0 -5 -3z" fill="#dadada" stroke="#c8c8c8"/><path d="M12 8 l8 8 -4 0 -2 3z" fill="#eee" stroke="#c8c8c8"/></svg>
<svg class="a" style="left:804.40px;top:1123.80px;" width="23.00" height="18.00" viewBox="0 0 24 20" preserveAspectRatio="none"><rect x="3" y="2" width="18" height="15" fill="#f0d94a" stroke="#c9a820"/><path d="M3 2 L21 17" stroke="#777" stroke-width="1.200"/><path d="M3 2 L21 17 L3 17z" fill="#f7e77a"/></svg>
<svg class="a" style="left:848.30px;top:1123.80px;" width="23.00" height="18.00" viewBox="0 0 24 20" preserveAspectRatio="none"><rect x="2" y="1.500" width="14" height="11" fill="#f0d94a" stroke="#c9a820"/><rect x="13" y="10" width="9" height="8" rx="1" fill="#fff" stroke="#d03a3a"/><circle cx="17.500" cy="14" r="2.800" fill="none" stroke="#d03a3a" stroke-width="1.300"/><path d="M15.500 16 l4 -4" stroke="#d03a3a" stroke-width="1.300"/></svg>
<svg class="a" style="left:891.80px;top:1123.80px;" width="23.00" height="18.00" viewBox="0 0 24 20" preserveAspectRatio="none"><rect x="2" y="1.500" width="14" height="11" fill="#f0d94a" stroke="#c9a820"/><path d="M18.500 19 q-3.500 -4 -3.500 -6 a3.500 3 0 0 1 7 0 q0 2 -3.500 6z" fill="#5b86b8"/><circle cx="18.500" cy="13" r="1.200" fill="#fff"/></svg>
<svg class="a" style="left:951.00px;top:1123.80px;opacity:0.72;" width="23.00" height="18.00" viewBox="0 0 24 20" preserveAspectRatio="none"><circle cx="10" cy="8" r="7" fill="#dcdcdc"/><text x="8" y="12" font-size="11" font-weight="bold" font-family="Liberation Serif, serif" fill="#f4f4f4">i</text><path d="M14 11 l7 7 -3.500 0 -1.500 2z" fill="#e4e4e4" stroke="#ccc"/></svg>
<svg class="a" style="left:982.90px;top:1123.80px;" width="23.00" height="18.00" viewBox="0 0 24 20" preserveAspectRatio="none"><path d="M3 2 v16 M21 2 v16 M3 6 h18 M3 10.500 h18 M3 15 h18 M1 18.500 h22" stroke="#777" stroke-width="1.300"/><circle cx="8" cy="6" r="1.800" fill="#d9534f"/><circle cx="13" cy="6" r="1.800" fill="#d9534f"/><circle cx="11" cy="10.500" r="1.800" fill="#5cb85c"/><circle cx="16" cy="10.500" r="1.800" fill="#5cb85c"/><circle cx="9" cy="15" r="1.800" fill="#4a7fc1"/><circle cx="17" cy="15" r="1.800" fill="#4a7fc1"/></svg>
<svg class="a" style="left:1015.20px;top:1123.80px;" width="23.00" height="18.00" viewBox="0 0 24 20" preserveAspectRatio="none"><path d="M12 1 l1.800 3 3.200 -1.800 .3 3.500 3.700 .3 -1.800 3 3 2 -3 2 1.800 3 -3.700 .3 -.3 3.500 -3.200 -1.800 -1.800 3 -1.800 -3 -3.200 1.800 -.3 -3.500 -3.700 -.3 1.800 -3 -3 -2 3 -2 -1.800 -3 3.700 -.3 .3 -3.500 3.200 1.800z" fill="#4f8fd8" stroke="#2f69b0" stroke-width=".7"/><ellipse cx="12" cy="10" rx="3" ry="2.800" fill="#f4f4f4"/></svg>
<svg class="a" style="left:1047.10px;top:1123.80px;" width="23.00" height="18.00" viewBox="0 0 24 20" preserveAspectRatio="none"><path d="M19 5.500 v-3.500 h-14.500 l7.500 8 -7.500 8 h14.500 v-3.500" fill="none" stroke="#a3159a" stroke-width="2.600"/></svg>
<svg class="a" style="left:1080.00px;top:1123.80px;" width="23.00" height="18.00" viewBox="0 0 24 20" preserveAspectRatio="none"><rect x="2" y="2" width="20" height="16" fill="#e9eff7" stroke="#5b86b8" stroke-width="1.200"/><path d="M2 6h20M2 10h20M2 14h20M9 2v16M15.500 2v16" stroke="#7ba2cf" stroke-width="1"/><rect x="2" y="2" width="20" height="4" fill="#5b86b8" opacity=".7"/></svg>
<svg class="a" style="left:1123.90px;top:1123.80px;" width="23.00" height="18.00" viewBox="0 0 24 20" preserveAspectRatio="none"><rect x="1.500" y="9" width="21" height="7" fill="#c9c9c9" stroke="#777"/><path d="M5 9v3.500M8.500 9v3.500M12 9v3.500M15.500 9v3.500M19 9v3.500" stroke="#666"/><path d="M2 4.500h20" stroke="#4a6f9a" stroke-width="1.500"/></svg>
<svg class="a" style="left:1167.50px;top:1123.80px;" width="23.00" height="18.00" viewBox="0 0 24 20" preserveAspectRatio="none"><rect x="3" y="1.500" width="20" height="10.500" rx="4.500" fill="#f2dc5a" stroke="#c7ab2a"/><path d="M8 11.500 l-2 4 6 -4z" fill="#f2dc5a" stroke="#c7ab2a"/><ellipse cx="5" cy="16.500" rx="3.500" ry="2.500" fill="#79b05a"/></svg>
<svg class="a" style="left:1201.30px;top:1123.80px;opacity:0.72;" width="23.00" height="18.00" viewBox="0 0 24 20" preserveAspectRatio="none"><circle cx="10" cy="8" r="6.500" fill="#e2e2e2" stroke="#cdcdcd" stroke-width="1.300"/><circle cx="10" cy="8" r="3" fill="#f2f2f2" stroke="#cdcdcd"/><path d="M15 12 l6 6" stroke="#d6d6d6" stroke-width="3"/></svg>
<svg class="a" style="left:787.00px;top:1132.30px;" width="6.00" height="3.50" viewBox="0 0 6 3.5" preserveAspectRatio="none"><path d="M0 0h6l-3 3.500z" fill="#bbb"/></svg>
<svg class="a" style="left:833.00px;top:1132.30px;" width="6.00" height="3.50" viewBox="0 0 6 3.5" preserveAspectRatio="none"><path d="M0 0h6l-3 3.500z" fill="#555"/></svg>
<svg class="a" style="left:877.00px;top:1132.30px;" width="6.00" height="3.50" viewBox="0 0 6 3.5" preserveAspectRatio="none"><path d="M0 0h6l-3 3.500z" fill="#555"/></svg>
<svg class="a" style="left:921.00px;top:1132.30px;" width="6.00" height="3.50" viewBox="0 0 6 3.5" preserveAspectRatio="none"><path d="M0 0h6l-3 3.500z" fill="#555"/></svg>
<svg class="a" style="left:1109.00px;top:1132.30px;" width="6.00" height="3.50" viewBox="0 0 6 3.5" preserveAspectRatio="none"><path d="M0 0h6l-3 3.500z" fill="#555"/></svg>
<svg class="a" style="left:1153.00px;top:1132.30px;" width="6.00" height="3.50" viewBox="0 0 6 3.5" preserveAspectRatio="none"><path d="M0 0h6l-3 3.500z" fill="#555"/></svg>
<svg class="a" style="left:1230.00px;top:1132.30px;" width="6.00" height="3.50" viewBox="0 0 6 3.5" preserveAspectRatio="none"><path d="M0 0h6l-3 3.500z" fill="#bbb"/></svg>
<svg class="a" style="left:212.00px;top:1125.80px;" width="4.00" height="14.00" viewBox="0 0 4 14" preserveAspectRatio="none"><path d="M1 0v14M3 0v14" stroke="#cfcfcf" stroke-width="1" stroke-dasharray="1 1.500"/></svg>
<svg class="a" style="left:746.00px;top:1125.80px;" width="4.00" height="14.00" viewBox="0 0 4 14" preserveAspectRatio="none"><path d="M1 0v14M3 0v14" stroke="#cfcfcf" stroke-width="1" stroke-dasharray="1 1.500"/></svg>
<svg class="a" style="left:938.00px;top:1125.80px;" width="4.00" height="14.00" viewBox="0 0 4 14" preserveAspectRatio="none"><path d="M1 0v14M3 0v14" stroke="#cfcfcf" stroke-width="1" stroke-dasharray="1 1.500"/></svg>
<div class="a" style="left:12.70px;top:1148.50px;width:30.60px;height:22.50px;background:#fbfbfb;border:1px solid #b9b9b9;box-sizing:border-box;border-radius:2px;"></div>
<svg class="a" style="left:16.80px;top:1151.00px;" width="23.00" height="18.00" viewBox="0 0 24 20" preserveAspectRatio="none"><path d="M2 6 l9 -3 4 11 -9 3z" fill="#e8842c" stroke="#b05c12" stroke-width=".8"/><path d="M5 5 l11 -1 1 11 -11 1z" fill="#f0c33c" stroke="#b08a12" stroke-width=".8"/><path d="M9 2 l12 2 -2 11 -12 -2z" fill="#5b8ec9" stroke="#2f5f9a" stroke-width=".8"/><rect x="15" y="12" width="8" height="7" rx="1.500" fill="#4da34d"/><path d="M16.500 15.500h5M19 13.300v4.400" stroke="#fff" stroke-width="1.500"/></svg>
<svg class="a" style="left:49.50px;top:1151.00px;" width="23.00" height="18.00" viewBox="0 0 24 20" preserveAspectRatio="none"><path d="M1 8 l9 -6 13 4 -9 6z" fill="#6b9bd6" stroke="#2f5f9a" stroke-width=".8"/><path d="M1 8 l13 4 v7 l-13 -4z" fill="#f0c83c" stroke="#b08a12" stroke-width=".8"/><path d="M14 12 l9 -6 v7 l-9 6z" fill="#d9a820" stroke="#b08a12" stroke-width=".8"/><circle cx="9" cy="6.500" r="1.800" fill="#2f5f9a"/><circle cx="15" cy="6" r="1.500" fill="#2f5f9a"/><rect x="14" y="11" width="9" height="8" rx="1" fill="#f0d94a" stroke="#c9a820" stroke-width=".8"/><path d="M16 15h5M18.5 12.800v4.400" stroke="#fff" stroke-width="1.6"/></svg>
<svg class="a" style="left:81.80px;top:1151.00px;" width="23.00" height="18.00" viewBox="0 0 24 20" preserveAspectRatio="none"><path d="M3 3 l6 13 9 -12" fill="none" stroke="#444" stroke-width="1.500"/><circle cx="3" cy="3" r="1.800" fill="#fff" stroke="#444"/><circle cx="9" cy="16" r="1.800" fill="#fff" stroke="#444"/><circle cx="18" cy="4" r="1.800" fill="#fff" stroke="#444"/><circle cx="22" cy="3" r="1.300" fill="#fff" stroke="#444"/><rect x="14" y="11" width="9" height="8" rx="1" fill="#f0d94a" stroke="#c9a820" stroke-width=".8"/><path d="M16 15h5M18.5 12.800v4.400" stroke="#fff" stroke-width="1.6"/></svg>
<svg class="a" style="left:113.50px;top:1151.00px;" width="23.00" height="18.00" viewBox="0 0 24 20" preserveAspectRatio="none"><path d="M2 18 q3 -12 18 -16 q-1 9 -12 12 q5 -4 8 -8 q-8 3 -14 12z" fill="#6a94c9" stroke="#2f5f9a" stroke-width=".8"/><rect x="14" y="11" width="9" height="8" rx="1" fill="#f0d94a" stroke="#c9a820" stroke-width=".8"/><path d="M16 15h5M18.5 12.800v4.400" stroke="#fff" stroke-width="1.6"/></svg>
<svg class="a" style="left:146.20px;top:1151.00px;" width="23.00" height="18.00" viewBox="0 0 24 20" preserveAspectRatio="none"><rect x="3" y="5" width="16" height="9" fill="#5b8ec9" stroke="#2f5f9a"/><path d="M5 5v-2.500M8 5v-2.500M11 5v-2.500M14 5v-2.500M17 5v-2.500M5 14v2.500M8 14v2.500M11 14v2.500" stroke="#2f5f9a" stroke-width="1.500"/><rect x="14" y="11" width="9" height="8" rx="1" fill="#f0d94a" stroke="#c9a820" stroke-width=".8"/><path d="M16 15h5M18.5 12.800v4.400" stroke="#fff" stroke-width="1.6"/></svg>
<svg class="a" style="left:178.50px;top:1151.00px;" width="23.00" height="18.00" viewBox="0 0 24 20" preserveAspectRatio="none"><rect x="2" y="2" width="19" height="16" fill="#5b8ec9" stroke="#2f5f9a"/><path d="M2 10h19M11.500 2v16M2 2l9.500 8M21 2l-9.500 8M2 18 l9.500 -8" stroke="#dbe7f5" stroke-width="1"/><rect x="14" y="11" width="9" height="8" rx="1" fill="#f0d94a" stroke="#c9a820" stroke-width=".8"/><path d="M16 15h5M18.5 12.800v4.400" stroke="#fff" stroke-width="1.6"/></svg>
<svg class="a" style="left:210.80px;top:1151.00px;" width="23.00" height="18.00" viewBox="0 0 24 20" preserveAspectRatio="none"><rect x="2" y="2" width="20" height="16" rx="2" fill="#a9c7e8" stroke="#2f5f9a"/><path d="M6 5 l4 9 6 -9" fill="none" stroke="#444" stroke-width="1.300"/><circle cx="6" cy="5" r="1.500" fill="#fff" stroke="#444" stroke-width=".8"/><circle cx="10" cy="14" r="1.500" fill="#fff" stroke="#444" stroke-width=".8"/><circle cx="16" cy="5" r="1.500" fill="#fff" stroke="#444" stroke-width=".8"/><rect x="14" y="11" width="9" height="8" rx="1" fill="#f0d94a" stroke="#c9a820" stroke-width=".8"/><path d="M16 15h5M18.5 12.800v4.400" stroke="#fff" stroke-width="1.6"/></svg>
<svg class="a" style="left:258.50px;top:1151.00px;opacity:0.72;" width="23.00" height="18.00" viewBox="0 0 24 20" preserveAspectRatio="none"><path d="M3 16 l8 -13 3 1.500 -8 13z M9 16 l8 -13 3 1.500 -8 13z" fill="#d2d2d2" stroke="#c2c2c2" stroke-width=".7"/></svg>
<svg class="a" style="left:290.20px;top:1151.00px;" width="23.00" height="18.00" viewBox="0 0 24 20" preserveAspectRatio="none"><path d="M5 17.500 l1.500 -5 9 -10.500 3.500 2.500 -9 10.500z" fill="#f0d040" stroke="#b89a18" stroke-width=".9"/><path d="M5 17.500 l1.500 -5 3.500 2.500z" fill="#e8c8a0" stroke="#9a7a3a" stroke-width=".7"/></svg>
<svg class="a" style="left:322.80px;top:1151.00px;opacity:0.72;" width="23.00" height="18.00" viewBox="0 0 24 20" preserveAspectRatio="none"><path d="M2.500 2 h16 l3 3 v13 h-19z" fill="#dcdcdc" stroke="#c6c6c6"/><rect x="6" y="2.500" width="10" height="6" fill="#f2f2f2"/><rect x="6" y="12" width="12" height="6" fill="#efefef"/></svg>
<svg class="a" style="left:355.20px;top:1151.00px;opacity:0.72;" width="23.00" height="18.00" viewBox="0 0 24 20" preserveAspectRatio="none"><path d="M4 16 l16 -12" stroke="#d8d8d8" stroke-width="1.500"/><circle cx="4" cy="16" r="1.600" fill="#e4e4e4" stroke="#cfcfcf"/><circle cx="20" cy="4" r="1.600" fill="#e4e4e4" stroke="#cfcfcf"/></svg>
<svg class="a" style="left:399.50px;top:1151.00px;opacity:0.72;" width="23.00" height="18.00" viewBox="0 0 24 20" preserveAspectRatio="none"><rect x="2" y="3" width="17" height="13" fill="#e6e6e6" stroke="#cdcdcd"/><path d="M2 7h17M2 11h17M8 3v13" stroke="#d4d4d4"/><rect x="14" y="11" width="9" height="8" rx="1" fill="#dcdcdc" stroke="#c4c4c4" stroke-width=".8"/><path d="M16 15h5M18.5 12.800v4.400" stroke="#f4f4f4" stroke-width="1.6"/></svg>
<svg class="a" style="left:431.80px;top:1151.00px;opacity:0.72;" width="23.00" height="18.00" viewBox="0 0 24 20" preserveAspectRatio="none"><path d="M3 17 l5 -13 h10 M8 4 l10 12 M10 11 l10 -3" fill="none" stroke="#cfcfcf" stroke-width="1.600"/></svg>
<svg class="a" style="left:475.20px;top:1151.00px;opacity:0.72;" width="23.00" height="18.00" viewBox="0 0 24 20" preserveAspectRatio="none"><rect x="2" y="3" width="20" height="14" fill="#ddd9cf" stroke="#cfcabd"/><path d="M6 17 l10 -14 M12 17 l10 -14" stroke="#eee" stroke-width="2"/></svg>
<svg class="a" style="left:507.00px;top:1151.00px;opacity:0.72;" width="23.00" height="18.00" viewBox="0 0 24 20" preserveAspectRatio="none"><path d="M3 4 h18 v3 h-18z M5 8 h14 l-1.500 10 h-11z" fill="#dedede" stroke="#cbcbcb"/><path d="M9 9v8M12 9v8M15 9v8" stroke="#f0f0f0" stroke-width="1.300"/></svg>
<svg class="a" style="left:538.50px;top:1151.00px;opacity:0.72;" width="23.00" height="18.00" viewBox="0 0 24 20" preserveAspectRatio="none"><path d="M2 4 l14 8 M2 13 l14 -8" stroke="#d4d4d4" stroke-width="1.700"/><circle cx="18.500" cy="14" r="3" fill="none" stroke="#d0d0d0" stroke-width="1.500"/><circle cx="18.500" cy="5" r="3" fill="none" stroke="#d0d0d0" stroke-width="1.500"/></svg>
<svg class="a" style="left:570.50px;top:1151.00px;opacity:0.72;" width="23.00" height="18.00" viewBox="0 0 24 20" preserveAspectRatio="none"><rect x="5" y="6" width="10" height="12" fill="#ececec" stroke="#cfcfcf"/><rect x="10" y="2" width="9" height="11" fill="#f4f4f4" stroke="#cfcfcf"/></svg>
<svg class="a" style="left:602.50px;top:1151.00px;opacity:0.72;" width="23.00" height="18.00" viewBox="0 0 24 20" preserveAspectRatio="none"><rect x="5" y="3" width="14" height="15" fill="#e8e8e8" stroke="#cfcfcf"/><rect x="8" y="6" width="8" height="9" fill="#f6f6f6" stroke="#d6d6d6"/></svg>
<svg class="a" style="left:634.50px;top:1151.00px;opacity:0.72;" width="23.00" height="18.00" viewBox="0 0 24 20" preserveAspectRatio="none"><path d="M2 9 l8 -6 v4 q11 0 11 9 q-3 -4.500 -11 -4 v4z" fill="#dadada"/></svg>
<svg class="a" style="left:666.50px;top:1151.00px;opacity:0.72;" width="23.00" height="18.00" viewBox="0 0 24 20" preserveAspectRatio="none"><path d="M22 9 l-8 -6 v4 q-11 0 -11 9 q3 -4.500 11 -4 v4z" fill="#dadada"/></svg>
<svg class="a" style="left:708.50px;top:1151.00px;opacity:0.72;" width="23.00" height="18.00" viewBox="0 0 24 20" preserveAspectRatio="none"><path d="M1 10 l4 -5 h18 v10 h-18z" fill="#e0e0e0" stroke="#cdcdcd"/><text x="6" y="13" font-size="8" font-family="Liberation Sans, sans-serif" fill="#fafafa" font-weight="bold">abc</text></svg>
<svg class="a" style="left:748.50px;top:1151.00px;opacity:0.72;" width="23.00" height="18.00" viewBox="0 0 24 20" preserveAspectRatio="none"><circle cx="9" cy="7" r="6" fill="#d6d6d6"/><rect x="10" y="9" width="11" height="9" fill="#dedede" stroke="#cbcbcb"/></svg>
<svg class="a" style="left:790.20px;top:1151.00px;" width="23.00" height="18.00" viewBox="0 0 24 20" preserveAspectRatio="none"><path d="M1 7.500 l4 -5 h15 v10 h-15z" fill="#dfeaf8" stroke="#5b86b8" stroke-width=".9"/><text x="5.500" y="10.500" font-size="8" font-family="Liberation Sans, sans-serif" fill="#333" font-weight="bold">ab</text><circle cx="18" cy="15" r="3.800" fill="#c62828"/><path d="M18 5 v8" stroke="#888" stroke-width="1.300"/></svg>
<svg class="a" style="left:820.50px;top:1151.00px;" width="23.00" height="18.00" viewBox="0 0 24 20" preserveAspectRatio="none"><path d="M1 7.500 l4 -5 h15 v10 h-15z" fill="#fff" stroke="#d03a3a" stroke-width=".9"/><text x="5.500" y="10.500" font-size="8" font-family="Liberation Sans, sans-serif" fill="#d03a3a" font-weight="bold">abc</text></svg>
<svg class="a" style="left:861.00px;top:1151.00px;" width="23.00" height="18.00" viewBox="0 0 24 20" preserveAspectRatio="none"><path d="M1 7.500 l4 -5 h15 v10 h-15z" fill="#f0d94a" stroke="#c9a820" stroke-width=".9"/><text x="5.500" y="10.500" font-size="8" font-family="Liberation Sans, sans-serif" fill="#333" font-weight="bold">ab</text><circle cx="18" cy="15" r="3.800" fill="#c62828"/><path d="M18 5 v8" stroke="#888" stroke-width="1.300"/></svg>
<svg class="a" style="left:892.80px;top:1151.00px;" width="23.00" height="18.00" viewBox="0 0 24 20" preserveAspectRatio="none"><path d="M1 7.500 l4 -5 h15 v10 h-15z" fill="#f0d94a" stroke="#c9a820" stroke-width=".9"/><text x="5.500" y="10.500" font-size="8" font-family="Liberation Sans, sans-serif" fill="#333" font-weight="bold">abc</text><path d="M9 15.500 q5.500 -5 11 0 q-5.500 5 -11 0z" fill="#fff" stroke="#444" stroke-width=".9"/><circle cx="14.500" cy="15.500" r="2" fill="#3f74b8"/></svg>
<svg class="a" style="left:924.70px;top:1151.00px;" width="23.00" height="18.00" viewBox="0 0 24 20" preserveAspectRatio="none"><path d="M1 7.500 l4 -5 h15 v10 h-15z" fill="#f0d94a" stroke="#c9a820" stroke-width=".9"/><text x="5.500" y="10.500" font-size="8" font-family="Liberation Sans, sans-serif" fill="#333" font-weight="bold">abc</text><rect x="13" y="11.500" width="10" height="8" rx="1" fill="#2c5f86"/><path d="M15 15.500 h4 v-2 l3 2 -3 2 v-2" fill="#fff" stroke="#fff" stroke-width=".8"/></svg>
<svg class="a" style="left:957.10px;top:1151.00px;" width="23.00" height="18.00" viewBox="0 0 24 20" preserveAspectRatio="none"><path d="M1 7.500 l4 -5 h15 v10 h-15z" fill="#f0d94a" stroke="#c9a820" stroke-width=".9"/><text x="5.500" y="10.500" font-size="8" font-family="Liberation Sans, sans-serif" fill="#333" font-weight="bold">abc</text><rect x="13" y="11.500" width="10" height="8" rx="1" fill="#2c5f86"/><path d="M15.500 17 a2.800 2.300 0 1 1 5 0" fill="none" stroke="#fff" stroke-width="1.300"/></svg>
<svg class="a" style="left:989.90px;top:1151.00px;" width="23.00" height="18.00" viewBox="0 0 24 20" preserveAspectRatio="none"><path d="M1 7.500 l4 -5 h15 v10 h-15z" fill="#f0d94a" stroke="#c9a820" stroke-width=".9"/><text x="5.500" y="10.500" font-size="8" font-family="Liberation Sans, sans-serif" fill="#333" font-weight="bold">abc</text><rect x="13" y="11.500" width="10" height="8" rx="1" fill="#e8c93a" stroke="#b89a18"/><path d="M15 18 l6 -5" stroke="#fff" stroke-width="1.800"/></svg>
<svg class="a" style="left:1037.00px;top:1151.00px;" width="23.00" height="18.00" viewBox="0 0 24 20" preserveAspectRatio="none"><ellipse cx="11" cy="9" rx="10" ry="8" fill="#9db9d6" stroke="#4a6a8a"/><path d="M4 5 q4 3 3 7 q-2 3 1 5 M11 1 q-5 8 0 16 M11 1 q5 8 0 16 M1.500 9 h19" fill="none" stroke="#4a6a8a" stroke-width=".9"/><path d="M12 3 q5 1 4 5 q-2 3 -5 1z" fill="#4a6a8a"/><circle cx="7.500" cy="15.500" r="3.800" fill="#111"/><circle cx="16.500" cy="15.500" r="3.800" fill="#111"/><rect x="9" y="11" width="6" height="4" fill="#111"/></svg>
<svg class="a" style="left:1069.80px;top:1151.00px;" width="23.00" height="18.00" viewBox="0 0 24 20" preserveAspectRatio="none"><ellipse cx="11" cy="9" rx="10" ry="8" fill="#9db9d6" stroke="#4a6a8a"/><path d="M4 5 q4 3 3 7 q-2 3 1 5 M11 1 q-5 8 0 16 M11 1 q5 8 0 16 M1.500 9 h19" fill="none" stroke="#4a6a8a" stroke-width=".9"/><path d="M12 3 q5 1 4 5 q-2 3 -5 1z" fill="#4a6a8a"/><rect x="14" y="11" width="9" height="8" rx="1.500" fill="#4da34d"/><path d="M16 15h5M18.500 12.800v4.400" stroke="#fff" stroke-width="1.500"/></svg>
<svg class="a" style="left:1101.70px;top:1151.00px;" width="23.00" height="18.00" viewBox="0 0 24 20" preserveAspectRatio="none"><ellipse cx="11" cy="9" rx="10" ry="8" fill="#9db9d6" stroke="#4a6a8a"/><path d="M4 5 q4 3 3 7 q-2 3 1 5 M11 1 q-5 8 0 16 M11 1 q5 8 0 16 M1.500 9 h19" fill="none" stroke="#4a6a8a" stroke-width=".9"/><path d="M12 3 q5 1 4 5 q-2 3 -5 1z" fill="#4a6a8a"/><rect x="14" y="11" width="9" height="8" rx="1.500" fill="#4da34d"/><circle cx="18.500" cy="15" r="2" fill="none" stroke="#fff" stroke-width="1.200"/></svg>
<svg class="a" style="left:1149.70px;top:1151.00px;" width="23.00" height="18.00" viewBox="0 0 24 20" preserveAspectRatio="none"><path d="M11.500 1 q-5 0 -5 3 v2.500 h5.500 v1 h-8 q-3 0 -3 4 q0 4 3 4 h2 v-3 q0 -2.500 3 -2.500 h5 q2.500 0 2.500 -2.500 v-3.500 q0 -3 -5 -3z" fill="#3d7ab5"/><path d="M12.500 19 q5 0 5 -3 v-2.500 h-5.500 v-1 h8 q3 0 3 -4 q0 -4 -3 -4 h-2 v3 q0 2.500 -3 2.500 h-5 q-2.500 0 -2.500 2.500 v3.500 q0 3 5 3z" fill="#f2c83a"/><path d="M18 13 l5 2.500 -5 2.500" fill="none" stroke="#444" stroke-width="1.200"/></svg>
<svg class="a" style="left:1182.10px;top:1151.00px;" width="23.00" height="18.00" viewBox="0 0 24 20" preserveAspectRatio="none"><rect x="1" y="1" width="22" height="18" fill="#fff"/><path d="M2 9 h20 M5 4 v6" stroke="#222" stroke-width="1.200"/><path d="M4 18 l14 -16 M9 18 l13 -15" stroke="#222" stroke-width="1.300"/><path d="M9 4 l8 14 M13 9 l3 9" stroke="#d03a3a" stroke-width="1.300"/></svg>
<svg class="a" style="left:1230.10px;top:1151.00px;" width="23.00" height="18.00" viewBox="0 0 24 20" preserveAspectRatio="none"><rect x="2" y="1" width="20" height="18" fill="#5b8ec9" stroke="#1f3f66"/><rect x="2" y="1" width="4.500" height="18" fill="#1f2f44"/><text x="10" y="15" font-size="13" font-weight="bold" font-family="Liberation Sans, sans-serif" fill="#e8f0fa">?</text></svg>
<svg class="a" style="left:1278.20px;top:1151.00px;" width="23.00" height="18.00" viewBox="0 0 24 20" preserveAspectRatio="none"><path d="M4 10 q2 -8 10 -6 q8 2 6 8 q-4 5 -12 3 q-5 -2 -4 -5z" fill="#5b8ec9" stroke="#2f5f9a"/><circle cx="3" cy="3" r="1.800" fill="#f0d94a" stroke="#777"/><circle cx="21" cy="2.500" r="1.800" fill="#9bd84a" stroke="#777"/><circle cx="3" cy="17" r="1.800" fill="#f0d94a" stroke="#777"/><circle cx="10" cy="6" r="1.800" fill="#9bd84a" stroke="#777"/><path d="M12 13 l4 4 7 -8" fill="none" stroke="#f0d94a" stroke-width="2.200"/><path d="M12 13 l4 4 7 -8" fill="none" stroke="#333" stroke-width=".6"/></svg>
<svg class="a" style="left:385.00px;top:1159.50px;" width="6.00" height="3.50" viewBox="0 0 6 3.5" preserveAspectRatio="none"><path d="M0 0h6l-3 3.500z" fill="#bbb"/></svg>
<svg class="a" style="left:462.00px;top:1159.50px;" width="6.00" height="3.50" viewBox="0 0 6 3.5" preserveAspectRatio="none"><path d="M0 0h6l-3 3.500z" fill="#bbb"/></svg>
<svg class="a" style="left:248.00px;top:1153.00px;" width="4.00" height="14.00" viewBox="0 0 4 14" preserveAspectRatio="none"><path d="M1 0v14M3 0v14" stroke="#cfcfcf" stroke-width="1" stroke-dasharray="1 1.500"/></svg>
<svg class="a" style="left:704.00px;top:1153.00px;" width="4.00" height="14.00" viewBox="0 0 4 14" preserveAspectRatio="none"><path d="M1 0v14M3 0v14" stroke="#cfcfcf" stroke-width="1" stroke-dasharray="1 1.500"/></svg>
<svg class="a" style="left:1026.00px;top:1153.00px;" width="4.00" height="14.00" viewBox="0 0 4 14" preserveAspectRatio="none"><path d="M1 0v14M3 0v14" stroke="#cfcfcf" stroke-width="1" stroke-dasharray="1 1.500"/></svg>
<svg class="a" style="left:1140.00px;top:1153.00px;" width="4.00" height="14.00" viewBox="0 0 4 14" preserveAspectRatio="none"><path d="M1 0v14M3 0v14" stroke="#cfcfcf" stroke-width="1" stroke-dasharray="1 1.500"/></svg>
<svg class="a" style="left:1217.00px;top:1153.00px;" width="4.00" height="14.00" viewBox="0 0 4 14" preserveAspectRatio="none"><path d="M1 0v14M3 0v14" stroke="#cfcfcf" stroke-width="1" stroke-dasharray="1 1.500"/></svg>
<svg class="a" style="left:1266.00px;top:1153.00px;" width="4.00" height="14.00" viewBox="0 0 4 14" preserveAspectRatio="none"><path d="M1 0v14M3 0v14" stroke="#cfcfcf" stroke-width="1" stroke-dasharray="1 1.500"/></svg>
<div class="a" style="left:781.50px;top:1151.00px;width:1.00px;height:17.00px;background:#dcdcdc;"></div>
<div class="a" style="left:852.00px;top:1151.00px;width:1.00px;height:17.00px;background:#dcdcdc;"></div>
<svg class="a" style="left:15.80px;top:1178.40px;opacity:0.72;" width="23.00" height="18.00" viewBox="0 0 24 20" preserveAspectRatio="none"><path d="M3 17 v-14 l17 14z" fill="#dedede" stroke="#cacaca"/><path d="M7 14 v-5 l6 5z" fill="#f2f2f2"/></svg>
<svg class="a" style="left:50.20px;top:1178.40px;opacity:0.72;" width="23.00" height="18.00" viewBox="0 0 24 20" preserveAspectRatio="none"><circle cx="5" cy="9" r="2" fill="#d8d8d8"/><circle cx="11" cy="4" r="2" fill="#d8d8d8"/><circle cx="17" cy="6" r="2" fill="#d8d8d8"/><rect x="9" y="10" width="11" height="8" rx="1" fill="#dcdcdc" stroke="#c8c8c8"/></svg>
<svg class="a" style="left:93.50px;top:1178.40px;opacity:0.72;" width="23.00" height="18.00" viewBox="0 0 24 20" preserveAspectRatio="none"><path d="M2 7 q0 -4 6 -4 h6 q6 0 6 4 q0 3 -5 3 h-3 q-2 0 -2 2 q0 2 -3 2 q-5 0 -5 -7z" fill="#d4d4d4" stroke="#c6c6c6" stroke-width=".8"/><rect x="14" y="11" width="9" height="8" rx="1" fill="#dcdcdc" stroke="#c4c4c4" stroke-width=".8"/><path d="M16 15h5M18.5 12.800v4.400" stroke="#f4f4f4" stroke-width="1.6"/></svg>
<svg class="a" style="left:126.20px;top:1178.40px;opacity:0.72;" width="23.00" height="18.00" viewBox="0 0 24 20" preserveAspectRatio="none"><path d="M2 7 q0 -4 6 -4 h6 q6 0 6 4 q0 3 -5 3 h-3 q-2 0 -2 2 q0 2 -3 2 q-5 0 -5 -7z" fill="#d4d4d4" stroke="#c6c6c6" stroke-width=".8"/><rect x="14" y="11" width="9" height="8" rx="1" fill="#dcdcdc" stroke="#c4c4c4" stroke-width=".8"/><path d="M16 15h5M18.5 12.800v4.400" stroke="#f4f4f4" stroke-width="1.6"/></svg>
<svg class="a" style="left:158.50px;top:1178.40px;opacity:0.72;" width="23.00" height="18.00" viewBox="0 0 24 20" preserveAspectRatio="none"><path d="M3 10 q0 -6 8 -6 q9 0 9 5 q0 5 -8 5 q-9 1 -9 -4z" fill="#d4d4d4" stroke="#c6c6c6" stroke-width=".8"/><ellipse cx="9" cy="9" rx="3" ry="2" fill="#eee"/><rect x="14" y="11" width="9" height="8" rx="1" fill="#dcdcdc" stroke="#c4c4c4" stroke-width=".8"/><path d="M16 15h5M18.5 12.800v4.400" stroke="#f4f4f4" stroke-width="1.6"/></svg>
<svg class="a" style="left:190.80px;top:1178.40px;opacity:0.72;" width="23.00" height="18.00" viewBox="0 0 24 20" preserveAspectRatio="none"><path d="M2 7 q0 -4 6 -4 h6 q6 0 6 4 q0 3 -5 3 h-3 q-2 0 -2 2 q0 2 -3 2 q-5 0 -5 -7z" fill="#d4d4d4" stroke="#c6c6c6" stroke-width=".8"/><rect x="14" y="11" width="9" height="8" rx="1" fill="#dcdcdc" stroke="#c4c4c4" stroke-width=".8"/><path d="M16 15h5M18.5 12.800v4.400" stroke="#f4f4f4" stroke-width="1.6"/></svg>
<svg class="a" style="left:222.80px;top:1178.40px;opacity:0.72;" width="23.00" height="18.00" viewBox="0 0 24 20" preserveAspectRatio="none"><path d="M3 10 q0 -6 8 -6 q9 0 9 5 q0 5 -8 5 q-9 1 -9 -4z" fill="#d4d4d4" stroke="#c6c6c6" stroke-width=".8"/><ellipse cx="9" cy="9" rx="3" ry="2" fill="#eee"/><rect x="14" y="11" width="9" height="8" rx="1" fill="#dcdcdc" stroke="#c4c4c4" stroke-width=".8"/><path d="M16 15h5M18.5 12.800v4.400" stroke="#f4f4f4" stroke-width="1.6"/></svg>
<svg class="a" style="left:255.20px;top:1178.40px;opacity:0.72;" width="23.00" height="18.00" viewBox="0 0 24 20" preserveAspectRatio="none"><path d="M2 7 q0 -4 6 -4 h6 q6 0 6 4 q0 3 -5 3 h-3 q-2 0 -2 2 q0 2 -3 2 q-5 0 -5 -7z" fill="#d4d4d4" stroke="#c6c6c6" stroke-width=".8"/><rect x="14" y="11" width="9" height="8" rx="1" fill="#dcdcdc" stroke="#c4c4c4" stroke-width=".8"/><path d="M16 15h5M18.5 12.800v4.400" stroke="#f4f4f4" stroke-width="1.6"/></svg>
<svg class="a" style="left:287.50px;top:1178.40px;opacity:0.72;" width="23.00" height="18.00" viewBox="0 0 24 20" preserveAspectRatio="none"><path d="M2 7 q0 -4 6 -4 h6 q6 0 6 4 q0 3 -5 3 h-3 q-2 0 -2 2 q0 2 -3 2 q-5 0 -5 -7z" fill="#d4d4d4" stroke="#c6c6c6" stroke-width=".8"/><rect x="14" y="11" width="9" height="8" rx="1" fill="#dcdcdc" stroke="#c4c4c4" stroke-width=".8"/><path d="M16 15h5M18.5 12.800v4.400" stroke="#f4f4f4" stroke-width="1.6"/></svg>
<svg class="a" style="left:319.50px;top:1178.40px;opacity:0.72;" width="23.00" height="18.00" viewBox="0 0 24 20" preserveAspectRatio="none"><path d="M3 10 q0 -6 8 -6 q9 0 9 5 q0 5 -8 5 q-9 1 -9 -4z" fill="#d4d4d4" stroke="#c6c6c6" stroke-width=".8"/><ellipse cx="9" cy="9" rx="3" ry="2" fill="#eee"/><rect x="14" y="11" width="9" height="8" rx="1" fill="#dcdcdc" stroke="#c4c4c4" stroke-width=".8"/><path d="M16 15h5M18.5 12.800v4.400" stroke="#f4f4f4" stroke-width="1.6"/></svg>
<svg class="a" style="left:351.80px;top:1178.40px;opacity:0.72;" width="23.00" height="18.00" viewBox="0 0 24 20" preserveAspectRatio="none"><path d="M3 5 q0 -3 8 -3 q10 0 10 4 q0 4 -8 4 h-3 v6 q0 2 -3.500 2 q-3.500 0 -3.500 -2z" fill="#d8d8d8" stroke="#c8c8c8"/></svg>
<svg class="a" style="left:384.20px;top:1178.40px;opacity:0.72;" width="23.00" height="18.00" viewBox="0 0 24 20" preserveAspectRatio="none"><path d="M2 13 q0 -5 7 -6 q3 -5 9 -4 q5 1 4 5 q-1 4 -7 5 q-2 5 -8 5 q-5 0 -5 -5z" fill="#d8d8d8" stroke="#c8c8c8"/></svg>
<svg class="a" style="left:416.20px;top:1178.40px;opacity:0.72;" width="23.00" height="18.00" viewBox="0 0 24 20" preserveAspectRatio="none"><path d="M2 3 l5 10 7 -9" fill="none" stroke="#d2d2d2" stroke-width="1.400"/><rect x="10" y="9" width="11" height="9" rx="1" fill="#e4e4e4" stroke="#cdcdcd"/></svg>
<svg class="a" style="left:448.50px;top:1178.40px;opacity:0.72;" width="23.00" height="18.00" viewBox="0 0 24 20" preserveAspectRatio="none"><path d="M12 1 v18 M4 8 h16 M4 14 h8" stroke="#d2d2d2" stroke-width="1.400"/><rect x="2" y="12" width="5" height="5" fill="#eee" stroke="#cfcfcf"/><rect x="16" y="3" width="5" height="5" fill="#eee" stroke="#cfcfcf"/></svg>
<svg class="a" style="left:480.20px;top:1178.40px;opacity:0.72;" width="23.00" height="18.00" viewBox="0 0 24 20" preserveAspectRatio="none"><circle cx="7" cy="8" r="5" fill="#d4d4d4"/><circle cx="15" cy="8" r="5" fill="#d4d4d4"/><path d="M7 12 l3 6 M15 12 l-3 6" stroke="#c4c4c4" stroke-width="1.500"/></svg>
<svg class="a" style="left:512.00px;top:1178.40px;opacity:0.72;" width="23.00" height="18.00" viewBox="0 0 24 20" preserveAspectRatio="none"><circle cx="7" cy="8" r="5" fill="#d4d4d4"/><circle cx="15" cy="8" r="5" fill="#d4d4d4"/><path d="M7 12 l3 6 M15 12 l-3 6" stroke="#c4c4c4" stroke-width="1.500"/></svg>
<svg class="a" style="left:544.50px;top:1178.40px;opacity:0.72;" width="23.00" height="18.00" viewBox="0 0 24 20" preserveAspectRatio="none"><circle cx="7" cy="8" r="5" fill="#d4d4d4"/><circle cx="15" cy="8" r="5" fill="#d4d4d4"/><path d="M7 12 l3 6 M15 12 l-3 6" stroke="#c4c4c4" stroke-width="1.500"/></svg>
<svg class="a" style="left:577.20px;top:1178.40px;opacity:0.72;" width="23.00" height="18.00" viewBox="0 0 24 20" preserveAspectRatio="none"><path d="M3 5h18M3 10h18M3 15h18M12 1v18" stroke="#d6d6d6" stroke-width="1.300"/></svg>
<svg class="a" style="left:609.50px;top:1178.40px;opacity:0.72;" width="23.00" height="18.00" viewBox="0 0 24 20" preserveAspectRatio="none"><path d="M5 15 a7 6 0 1 1 6 3" fill="none" stroke="#d4d4d4" stroke-width="1.400" stroke-dasharray="2 1.500"/><path d="M12 4 l9 4 -9 4z" fill="#e4e4e4" stroke="#cfcfcf"/></svg>
<svg class="a" style="left:79.00px;top:1186.90px;" width="6.00" height="3.50" viewBox="0 0 6 3.5" preserveAspectRatio="none"><path d="M0 0h6l-3 3.500z" fill="#bbb"/></svg>
<svg class="a" style="left:639.80px;top:1186.90px;" width="6.00" height="3.50" viewBox="0 0 6 3.5" preserveAspectRatio="none"><path d="M0 0h6l-3 3.500z" fill="#bbb"/></svg>
<svg class="a" style="left:16.80px;top:1205.20px;" width="25.00" height="18.00" viewBox="0 0 24 20" preserveAspectRatio="none"><rect x="1" y="1" width="22" height="18" rx="1.500" fill="#6fb34a" stroke="#4a8a2a"/><ellipse cx="13.500" cy="8.500" rx="6" ry="5" fill="#a9d78a" stroke="#fff" stroke-width="1.800"/><path d="M9 12.500 l-5 4.500" stroke="#fff" stroke-width="2.400"/></svg>
<svg class="a" style="left:48.50px;top:1205.20px;" width="23.00" height="18.00" viewBox="0 0 24 20" preserveAspectRatio="none"><rect x="2" y="2" width="18" height="16" fill="#f0d060"/><rect x="2" y="2" width="6" height="5" fill="#5b8ec9"/><rect x="12" y="3" width="5" height="5" fill="#e26a5a"/><rect x="4" y="11" width="5" height="5" fill="#b070c0"/><rect x="11" y="12" width="6" height="5" fill="#5b8ec9"/><path d="M9 16 l12 -14" stroke="#8a4a1a" stroke-width="2.600"/></svg>
<div class="a" style="left:0.00px;top:1228.00px;width:413.50px;height:418.00px;background:#f0f0f0;"></div>
<div class="a" style="left:0.00px;top:1228.00px;width:49.00px;height:418.00px;background:#f6f6f6;"></div>
<svg class="a" style="left:12.00px;top:1232.50px;" width="16.00" height="4.00" viewBox="0 0 16 4" preserveAspectRatio="none"><path d="M0 1h16M0 3h16" stroke="#cfcfcf" stroke-width="1" stroke-dasharray="1 1.500"/></svg>
<svg class="a" style="left:8.10px;top:1237.70px;" width="23.00" height="18.00" viewBox="0 0 24 20" preserveAspectRatio="none"><path d="M3 3 l6 12 9 -12" fill="none" stroke="#444" stroke-width="1.500"/><circle cx="3" cy="3" r="1.700" fill="#fff" stroke="#444"/><circle cx="9" cy="15" r="1.700" fill="#fff" stroke="#444"/><circle cx="18" cy="3" r="1.700" fill="#fff" stroke="#444"/><rect x="15" y="12" width="8" height="7" rx="1.500" fill="#4da34d"/><path d="M16.500 15.500h5M19 13.300v4.400" stroke="#fff" stroke-width="1.500"/></svg>
<svg class="a" style="left:8.10px;top:1260.00px;" width="23.00" height="18.00" viewBox="0 0 24 20" preserveAspectRatio="none"><path d="M2 2h6v5h-6z M8 7h6v5h-6z M14 2h6v5h-6z M2 12h6v5h-6z" fill="#2c4f86"/><path d="M8 2h6v5h-6z M2 7h6v5h-6z M14 7h6v5h-6z M8 12h6v5h-6z" fill="#7ba2d8"/><rect x="15" y="12" width="8" height="7" rx="1.500" fill="#4da34d"/><path d="M16.500 15.500h5M19 13.300v4.400" stroke="#fff" stroke-width="1.500"/></svg>
<svg class="a" style="left:8.10px;top:1283.00px;" width="23.00" height="18.00" viewBox="0 0 24 20" preserveAspectRatio="none"><rect x="2" y="2" width="19" height="15" fill="#5b8ec9" stroke="#2f5f9a"/><path d="M2 9.500h19M11.500 2v15M2 2l9.500 7.500M21 2l-9.500 7.500" stroke="#dbe7f5" stroke-width="1"/><rect x="15" y="12" width="8" height="7" rx="1.500" fill="#4da34d"/><path d="M16.500 15.500h5M19 13.300v4.400" stroke="#fff" stroke-width="1.500"/></svg>
<svg class="a" style="left:8.10px;top:1305.60px;" width="23.00" height="18.00" viewBox="0 0 24 20" preserveAspectRatio="none"><path d="M9 2.500 a5 4.200 0 1 0 1.500 8 q-.5 3.500 -6 6 q11.500 -1.500 11.500 -9.500 q0 -4.500 -7 -4.500z" fill="#2c5f9a"/><rect x="15" y="12" width="8" height="7" rx="1.500" fill="#4da34d"/><path d="M16.500 15.500h5M19 13.300v4.400" stroke="#fff" stroke-width="1.500"/></svg>
<svg class="a" style="left:8.10px;top:1328.30px;" width="23.00" height="18.00" viewBox="0 0 24 20" preserveAspectRatio="none"><path d="M2 18 q3 -12 18 -16 q-1 9 -12 12 q5 -4 8 -8 q-8 3 -14 12z" fill="#6a94c9" stroke="#2f5f9a" stroke-width=".8"/><rect x="15" y="12" width="8" height="7" rx="1.500" fill="#4da34d"/><path d="M16.500 15.500h5M19 13.300v4.400" stroke="#fff" stroke-width="1.500"/></svg>
<svg class="a" style="left:8.10px;top:1350.50px;" width="23.00" height="18.00" viewBox="0 0 24 20" preserveAspectRatio="none"><rect x="2" y="2" width="19" height="15" rx="2" fill="#a9c7e8" stroke="#2f5f9a"/><path d="M6 5 l4 8 6 -8" fill="none" stroke="#444" stroke-width="1.300"/><rect x="15" y="12" width="8" height="7" rx="1.500" fill="#4da34d"/><path d="M16.500 15.500h5M19 13.300v4.400" stroke="#fff" stroke-width="1.500"/></svg>
<svg class="a" style="left:8.10px;top:1373.00px;" width="23.00" height="18.00" viewBox="0 0 24 20" preserveAspectRatio="none"><path d="M3 3 q0 -2 5 -2 h6 q5 0 5 4 q0 5 -3 7 q-1 1 -1 3 q0 2 -2 2 q-1.500 0 -1.500 -2 v-3 q-2 1 -3.500 0 q-5 -2 -5 -9z" fill="#3a6ea5" stroke="#1f3f66" stroke-width=".8"/><rect x="15" y="12" width="8" height="7" rx="1.500" fill="#4da34d"/><path d="M16.500 15.500h5M19 13.300v4.400" stroke="#fff" stroke-width="1.500"/></svg>
<svg class="a" style="left:8.10px;top:1395.30px;" width="23.00" height="18.00" viewBox="0 0 24 20" preserveAspectRatio="none"><ellipse cx="11" cy="9" rx="10" ry="8" fill="#9db9d6" stroke="#4a6a8a"/><path d="M4 5 q4 3 3 7 q-2 3 1 5 M11 1 q-5 8 0 16 M11 1 q5 8 0 16 M1.500 9 h19" fill="none" stroke="#4a6a8a" stroke-width=".9"/><path d="M12 3 q5 1 4 5 q-2 3 -5 1z" fill="#4a6a8a"/><rect x="14" y="11" width="9" height="8" rx="1.500" fill="#4da34d"/><path d="M16 15h5M18.500 12.800v4.400" stroke="#fff" stroke-width="1.500"/></svg>
<svg class="a" style="left:8.10px;top:1417.80px;" width="23.00" height="18.00" viewBox="0 0 24 20" preserveAspectRatio="none"><ellipse cx="11" cy="9" rx="10" ry="8" fill="#cfe0f2" stroke="#1f3f66" stroke-width="1.300"/><path d="M11 1 q-6 8 0 16 M11 1 q6 8 0 16 M1.500 9 h19 M3 5 h16 M3 13 h16" fill="none" stroke="#1f3f66" stroke-width="1"/><rect x="14" y="11" width="9" height="8" rx="1.500" fill="#4da34d"/><path d="M16 15h5M18.500 12.800v4.400" stroke="#fff" stroke-width="1.500"/></svg>
<svg class="a" style="left:8.10px;top:1440.00px;" width="23.00" height="18.00" viewBox="0 0 24 20" preserveAspectRatio="none"><ellipse cx="11" cy="9" rx="10" ry="8" fill="#e4eef8" stroke="#4a6a8a" stroke-width="1.300"/><path d="M5 4 l5 10 7 -10" fill="none" stroke="#444" stroke-width="1.300"/><rect x="14" y="11" width="9" height="8" rx="1.500" fill="#4da34d"/><path d="M16 15h5M18.500 12.800v4.400" stroke="#fff" stroke-width="1.500"/></svg>
<svg class="a" style="left:8.10px;top:1463.30px;" width="23.00" height="18.00" viewBox="0 0 24 20" preserveAspectRatio="none"><rect x="2" y="2" width="12" height="10" fill="none" stroke="#7a9ac0" stroke-width="1.200"/><rect x="6" y="5" width="12" height="10" fill="#eef3f9" stroke="#7a9ac0" stroke-width="1.200"/><rect x="10" y="8" width="12" height="10" fill="#dfe9f5" stroke="#5b86b8" stroke-width="1.200"/><circle cx="16" cy="13" r="3" fill="none" stroke="#5b86b8"/></svg>
<svg class="a" style="left:8.10px;top:1484.30px;" width="23.00" height="18.00" viewBox="0 0 24 20" preserveAspectRatio="none"><path d="M3 3 l6 12 9 -12" fill="none" stroke="#444" stroke-width="1.500"/><circle cx="3" cy="3" r="1.700" fill="#fff" stroke="#444"/><circle cx="9" cy="15" r="1.700" fill="#fff" stroke="#444"/><circle cx="18" cy="3" r="1.700" fill="#fff" stroke="#444"/><rect x="14" y="11" width="9" height="8" rx="1" fill="#f0d94a" stroke="#c9a820" stroke-width=".8"/><path d="M16 15h5M18.5 12.800v4.400" stroke="#fff" stroke-width="1.6"/></svg>
<svg class="a" style="left:38.00px;top:1381.50px;" width="6.00" height="3.50" viewBox="0 0 6 3.5" preserveAspectRatio="none"><path d="M0 0h6l-3 3.500z" fill="#555"/></svg>
<svg class="a" style="left:38.00px;top:1493.00px;" width="6.00" height="3.50" viewBox="0 0 6 3.5" preserveAspectRatio="none"><path d="M0 0h6l-3 3.500z" fill="#555"/></svg>
<span class="t" style="top:1231.73px;font-size:9.30px;line-height:9.30px;color:#222;left:55.30px;transform-origin:0 50%;transform:scaleX(1.1874);">Browser</span>
<div class="a" style="left:380.80px;top:1231.60px;width:10.00px;height:7.20px;background:#f4f4f4;border:1px solid #8a8a8a;box-sizing:border-box;border-radius:1.5px;"></div>
<div class="a" style="left:394.80px;top:1231.60px;width:10.00px;height:7.20px;background:#f4f4f4;border:1px solid #8a8a8a;box-sizing:border-box;border-radius:1.5px;"></div>
<svg class="a" style="left:383.30px;top:1233.20px;" width="5.00" height="4.00" viewBox="0 0 5 4" preserveAspectRatio="none"><rect x=".5" y="1" width="3" height="2.500" fill="none" stroke="#555" stroke-width=".8"/><path d="M1.500 1 v-.5 h3 v2.500 h-.5" fill="none" stroke="#555" stroke-width=".8"/></svg>
<svg class="a" style="left:397.30px;top:1233.20px;" width="5.00" height="4.00" viewBox="0 0 5 4" preserveAspectRatio="none"><path d="M.5 .5 L4.500 3.500 M4.500 .5 L.5 3.500" stroke="#444" stroke-width="1"/></svg>
<svg class="a" style="left:59.00px;top:1247.30px;" width="15.00" height="10.50" viewBox="0 0 15 10.5" preserveAspectRatio="none"><rect x="1" y="1" width="10" height="7" fill="#fff" stroke="#777"/><circle cx="11.500" cy="8" r="2.500" fill="#6fb34a"/></svg>
<svg class="a" style="left:84.00px;top:1247.30px;" width="15.00" height="10.00" viewBox="0 0 15 10" preserveAspectRatio="none"><path d="M2 4.500 a6 4 0 0 1 10 -2 l1.500 -1.500 v4.500 h-5 l1.500 -1.500 a3.500 2.500 0 0 0 -5.500 1.500z M13 5.500 a6 4 0 0 1 -10 2 l-1.500 1.500 v-4.500 h5 l-1.500 1.500 a3.500 2.500 0 0 0 5.500 -1.500z" fill="#3f86d6"/></svg>
<svg class="a" style="left:109.00px;top:1247.30px;" width="14.00" height="10.50" viewBox="0 0 14 10.5" preserveAspectRatio="none"><path d="M1 1 h12 l-4.500 4.500 v4.500 l-3 -1.500 v-3z" fill="#e8c93a" stroke="#4a7fc1" stroke-width="1.200"/></svg>
<svg class="a" style="left:133.00px;top:1246.80px;" width="15.00" height="11.00" viewBox="0 0 15 11" preserveAspectRatio="none"><rect x="1" y="3" width="9" height="7.500" fill="#f3e3a8" stroke="#999"/><path d="M10 10 v-6 h-2.500 l4 -4 4 4 h-2.500 v6z" fill="#4a7fc1"/></svg>
<svg class="a" style="left:158.50px;top:1247.30px;" width="12.50" height="10.00" viewBox="0 0 12.5 10" preserveAspectRatio="none"><ellipse cx="6.250" cy="5" rx="6" ry="4.800" fill="#4a86c8"/><text x="4.600" y="8" font-size="7.500" font-style="italic" font-weight="bold" font-family="Liberation Serif, serif" fill="#fff">i</text></svg>
<div class="a" style="left:52.00px;top:1263.50px;width:340.30px;height:51.20px;background:#fff;border:1px solid #d0d0d0;box-sizing:border-box;"></div>
<div class="a" style="left:392.30px;top:1263.50px;width:14.70px;height:51.20px;background:#f0f0f0;"></div>
<div class="a" style="left:392.80px;top:1273.00px;width:13.70px;height:3.00px;background:#dadada;"></div>
<div class="a" style="left:392.80px;top:1297.50px;width:13.70px;height:6.50px;background:#dddddd;"></div>
<svg class="a" style="left:396.50px;top:1266.30px;" width="6.00" height="3.50" viewBox="0 0 6 3.5" preserveAspectRatio="none"><path d="M0 3.500 L3 0 L6 3.500z" fill="#555"/></svg>
<svg class="a" style="left:396.50px;top:1307.00px;" width="6.00" height="3.50" viewBox="0 0 6 3.5" preserveAspectRatio="none"><path d="M0 0 L3 3.500 L6 0z" fill="#555"/></svg>
<div class="a" style="left:52.00px;top:1314.70px;width:340.30px;height:8.60px;background:#f0f0f0;border:1px solid #dcdcdc;box-sizing:border-box;"></div>
<svg class="a" style="left:55.50px;top:1316.70px;" width="4.00" height="5.00" viewBox="0 0 4 5" preserveAspectRatio="none"><path d="M4 0 L0 2.500 L4 5z" fill="#444"/></svg>
<svg class="a" style="left:383.50px;top:1316.70px;" width="4.00" height="5.00" viewBox="0 0 4 5" preserveAspectRatio="none"><path d="M0 0 L4 2.500 L0 5z" fill="#444"/></svg>
<div class="a" style="left:64.50px;top:1315.20px;width:1.50px;height:7.60px;background:#cfcfcf;"></div>
<div class="a" style="left:379.00px;top:1315.20px;width:1.00px;height:7.60px;background:#dcdcdc;"></div>
<svg class="a" style="left:102.50px;top:1268.20px;" width="4.00" height="5.00" viewBox="0 0 4 5" preserveAspectRatio="none"><path d="M0 0 L4 2.500 L0 5z" fill="#555"/></svg>
<svg class="a" style="left:116.00px;top:1266.20px;" width="15.00" height="9.00" viewBox="0 0 15 9" preserveAspectRatio="none"><path d="M1 1 l5 7 6 -7" fill="none" stroke="#555" stroke-width="1"/><circle cx="13.500" cy="1.200" r=".9" fill="#555"/></svg>
<span class="t" style="top:1267.23px;font-size:9.30px;line-height:9.30px;color:#222;left:137.00px;transform-origin:0 50%;transform:scaleX(1.2251);">osm_hiking_trails</span>
<svg class="a" style="left:102.50px;top:1280.90px;" width="4.00" height="5.00" viewBox="0 0 4 5" preserveAspectRatio="none"><path d="M0 0 L4 2.500 L0 5z" fill="#555"/></svg>
<svg class="a" style="left:117.00px;top:1278.90px;" width="13.00" height="9.00" viewBox="0 0 13 9" preserveAspectRatio="none"><circle cx="2" cy="7" r="1" fill="#999"/><circle cx="5.500" cy="3.500" r="1" fill="#999"/><circle cx="10.500" cy="1.500" r="1" fill="#999"/></svg>
<span class="t" style="top:1279.93px;font-size:9.30px;line-height:9.30px;color:#222;left:137.00px;transform-origin:0 50%;transform:scaleX(1.2458);">osm_import_cultural</span>
<svg class="a" style="left:102.50px;top:1293.60px;" width="4.00" height="5.00" viewBox="0 0 4 5" preserveAspectRatio="none"><path d="M0 0 L4 2.500 L0 5z" fill="#555"/></svg>
<svg class="a" style="left:117.00px;top:1291.60px;" width="13.00" height="9.00" viewBox="0 0 13 9" preserveAspectRatio="none"><circle cx="2" cy="7" r="1" fill="#999"/><circle cx="5.500" cy="3.500" r="1" fill="#999"/><circle cx="10.500" cy="1.500" r="1" fill="#999"/></svg>
<span class="t" style="top:1292.63px;font-size:9.30px;line-height:9.30px;color:#222;left:137.00px;transform-origin:0 50%;transform:scaleX(1.2394);">osm_import_local</span>
<svg class="a" style="left:102.50px;top:1306.30px;" width="4.00" height="5.00" viewBox="0 0 4 5" preserveAspectRatio="none"><path d="M0 0 L4 2.500 L0 5z" fill="#555"/></svg>
<svg class="a" style="left:117.00px;top:1304.30px;" width="13.00" height="9.00" viewBox="0 0 13 9" preserveAspectRatio="none"><circle cx="2" cy="7" r="1" fill="#999"/><circle cx="5.500" cy="3.500" r="1" fill="#999"/><circle cx="10.500" cy="1.500" r="1" fill="#999"/></svg>
<span class="t" style="top:1305.33px;font-size:9.30px;line-height:9.30px;color:#222;left:137.00px;transform-origin:0 50%;transform:scaleX(1.2421);">osm_import_nature</span>
<span class="t" style="top:1331.93px;font-size:9.30px;line-height:9.30px;color:#222;left:55.30px;transform-origin:0 50%;transform:scaleX(1.1476);">Layer</span>
<div class="a" style="left:380.80px;top:1331.80px;width:10.00px;height:7.20px;background:#f4f4f4;border:1px solid #8a8a8a;box-sizing:border-box;border-radius:1.5px;"></div>
<div class="a" style="left:394.80px;top:1331.80px;width:10.00px;height:7.20px;background:#f4f4f4;border:1px solid #8a8a8a;box-sizing:border-box;border-radius:1.5px;"></div>
<svg class="a" style="left:383.30px;top:1333.40px;" width="5.00" height="4.00" viewBox="0 0 5 4" preserveAspectRatio="none"><rect x=".5" y="1" width="3" height="2.500" fill="none" stroke="#555" stroke-width=".8"/><path d="M1.500 1 v-.5 h3 v2.500 h-.5" fill="none" stroke="#555" stroke-width=".8"/></svg>
<svg class="a" style="left:397.30px;top:1333.40px;" width="5.00" height="4.00" viewBox="0 0 5 4" preserveAspectRatio="none"><path d="M.5 .5 L4.500 3.500 M4.500 .5 L.5 3.500" stroke="#444" stroke-width="1"/></svg>
<svg class="a" style="left:59.00px;top:1347.40px;" width="15.00" height="10.00" viewBox="0 0 15 10" preserveAspectRatio="none"><path d="M1 6 l8 -4 5 3 -8 4z" fill="#e8842c"/><path d="M3 3 l5 -2 3 3" fill="none" stroke="#f0c33c" stroke-width="1.500"/></svg>
<svg class="a" style="left:84.00px;top:1346.90px;" width="15.00" height="11.00" viewBox="0 0 15 11" preserveAspectRatio="none"><rect x="3" y="3" width="9" height="7.500" fill="#e6e6e6" stroke="#888"/><path d="M5 3 v-2 h5 v2" fill="none" stroke="#888"/><circle cx="7.500" cy="7" r="1.500" fill="#7a9ac0"/></svg>
<svg class="a" style="left:108.00px;top:1347.40px;" width="16.00" height="10.00" viewBox="0 0 16 10" preserveAspectRatio="none"><path d="M1 5 q7 -6 14 0 q-7 6 -14 0z" fill="#fff" stroke="#888"/><circle cx="8" cy="5" r="2.200" fill="#5b86b8"/><path d="M12 9h3" stroke="#555"/></svg>
<svg class="a" style="left:133.00px;top:1347.40px;" width="15.00" height="10.50" viewBox="0 0 15 10.5" preserveAspectRatio="none"><path d="M1 1 h12 l-4.500 4.500 v4.500 l-3 -1.500 v-3z" fill="#bcd4ef" stroke="#4a7fc1" stroke-width="1.200"/><path d="M12 9.500h2.500" stroke="#444"/></svg>
<span class="t" style="top:1346.26px;font-size:12.00px;line-height:12.00px;color:#555;font-family:'Liberation Serif', serif;left:158.50px;transform-origin:0 50%;transform:scaleX(1.2000);">ε</span>
<svg class="a" style="left:166.50px;top:1353.40px;" width="5.50" height="4.00" viewBox="0 0 5.5 4" preserveAspectRatio="none"><rect x=".5" y=".5" width="4.500" height="3" fill="#fff" stroke="#888" stroke-width=".7"/></svg>
<svg class="a" style="left:178.80px;top:1350.90px;" width="6.00" height="3.50" viewBox="0 0 6 3.5" preserveAspectRatio="none"><path d="M0 0h6l-3 3.500z" fill="#555"/></svg>
<svg class="a" style="left:194.00px;top:1346.90px;" width="15.00" height="11.00" viewBox="0 0 15 11" preserveAspectRatio="none"><rect x="1" y="2" width="9" height="8" fill="#f3e3a8" stroke="#999"/><path d="M8 1 h4 v5 h2.500 l-4.500 4.500 -4.500 -4.500 h2.500z" fill="#4a7fc1"/></svg>
<svg class="a" style="left:218.50px;top:1346.90px;" width="15.00" height="11.00" viewBox="0 0 15 11" preserveAspectRatio="none"><rect x="1" y="3" width="9" height="7.500" fill="#f3e3a8" stroke="#999"/><path d="M10 10.500 v-6 h-2.500 l4 -4.500 4 4.500 h-2.500 v6z" fill="#4a7fc1"/></svg>
<svg class="a" style="left:243.00px;top:1347.40px;" width="15.00" height="10.50" viewBox="0 0 15 10.5" preserveAspectRatio="none"><rect x="1" y="1" width="10" height="7" fill="#fff" stroke="#777"/><circle cx="11.500" cy="8" r="2.500" fill="#d9534f"/></svg>
<div class="a" style="left:52.00px;top:1364.00px;width:340.30px;height:281.00px;background:#fff;border:1px solid #d0d0d0;box-sizing:border-box;"></div>
<div class="a" style="left:392.30px;top:1364.00px;width:14.70px;height:281.00px;background:#f0f0f0;"></div>
<div class="a" style="left:392.80px;top:1599.40px;width:13.40px;height:34.60px;background:#d9d9d9;"></div>
<svg class="a" style="left:396.50px;top:1368.00px;" width="6.00" height="3.50" viewBox="0 0 6 3.5" preserveAspectRatio="none"><path d="M0 3.500 L3 0 L6 3.500z" fill="#555"/></svg>
<svg class="a" style="left:396.50px;top:1638.00px;" width="6.00" height="3.50" viewBox="0 0 6 3.5" preserveAspectRatio="none"><path d="M0 0 L3 3.500 L6 0z" fill="#555"/></svg>
<div class="a" style="left:53.00px;top:1365.00px;width:338.30px;height:12.50px;background:#ececec;"></div>
<svg class="a" style="left:75.50px;top:1365.80px;" width="13.50" height="10.50" viewBox="0 0 13.5 10.5" preserveAspectRatio="none"><rect x=".5" y=".5" width="12.500" height="9.500" fill="#fafafa" stroke="#999"/><path d="M.5 3.500h12.500M.5 6.500h12.500M4 .5v9.500" stroke="#aaa" stroke-width=".8"/></svg>
<span class="t" style="top:1367.49px;font-size:9.20px;line-height:9.20px;color:#111;font-weight:bold;text-decoration:underline;left:96.20px;transform-origin:0 50%;transform:scaleX(1.1909);">diva_local_diagnostics</span>
<div class="a" style="left:74.40px;top:1378.60px;width:12.60px;height:10.40px;background:#fff;border:1px solid #b4b4b4;box-sizing:border-box;"></div>
<div class="a" style="left:96.00px;top:1383.40px;width:13.50px;height:0.90px;background:#d9736b;"></div>
<span class="t" style="top:1379.79px;font-size:9.20px;line-height:9.20px;color:#8a8a8a;font-weight:bold;font-style:italic;left:115.60px;transform-origin:0 50%;transform:scaleX(1.2137);">isa_indicators</span>
<div class="a" style="left:74.40px;top:1391.20px;width:12.60px;height:10.40px;background:#fff;border:1px solid #b4b4b4;box-sizing:border-box;"></div>
<svg class="a" style="left:95.50px;top:1392.80px;" width="14.00" height="7.20" viewBox="0 0 14 7.2" preserveAspectRatio="none"><ellipse cx="7" cy="3.600" rx="6.800" ry="3.400" fill="#7d8a85"/></svg>
<span class="t" style="top:1392.39px;font-size:9.20px;line-height:9.20px;color:#8a8a8a;font-weight:bold;font-style:italic;left:115.60px;transform-origin:0 50%;transform:scaleX(1.2169);">archaeological_sites</span>
<div class="a" style="left:74.40px;top:1403.80px;width:12.60px;height:10.40px;background:#fff;border:1px solid #b4b4b4;box-sizing:border-box;"></div>
<svg class="a" style="left:76.60px;top:1405.50px;" width="8.50" height="7.00" viewBox="0 0 8.5 7" preserveAspectRatio="none"><path d="M.8 3.600 L3.200 6 L7.800 .8" fill="none" stroke="#111" stroke-width="1.500"/></svg>
<svg class="a" style="left:98.50px;top:1406.20px;" width="7.00" height="5.60" viewBox="0 0 7 5.6" preserveAspectRatio="none"><ellipse cx="3.500" cy="2.800" rx="3.200" ry="2.500" fill="#d0527a" stroke="#9a3a5a" stroke-width=".6"/></svg>
<span class="t" style="top:1404.99px;font-size:9.20px;line-height:9.20px;color:#111;font-weight:bold;left:115.60px;transform-origin:0 50%;transform:scaleX(1.2844);">agritourism_2025-10-26_17-00</span>
<div class="a" style="left:74.40px;top:1416.40px;width:12.60px;height:10.40px;background:#fff;border:1px solid #b4b4b4;box-sizing:border-box;"></div>
<svg class="a" style="left:76.60px;top:1418.10px;" width="8.50" height="7.00" viewBox="0 0 8.5 7" preserveAspectRatio="none"><path d="M.8 3.600 L3.200 6 L7.800 .8" fill="none" stroke="#111" stroke-width="1.500"/></svg>
<svg class="a" style="left:98.50px;top:1418.80px;" width="7.00" height="5.60" viewBox="0 0 7 5.6" preserveAspectRatio="none"><ellipse cx="3.500" cy="2.800" rx="3.200" ry="2.500" fill="#9a7ab8" stroke="#6a4a8a" stroke-width=".6"/></svg>
<span class="t" style="top:1417.59px;font-size:9.20px;line-height:9.20px;color:#111;font-weight:bold;left:115.60px;transform-origin:0 50%;transform:scaleX(1.2716);">cultural_infrastructure_2025-10-26_17-00</span>
<div class="a" style="left:74.40px;top:1429.00px;width:12.60px;height:10.40px;background:#fff;border:1px solid #b4b4b4;box-sizing:border-box;"></div>
<svg class="a" style="left:76.60px;top:1430.70px;" width="8.50" height="7.00" viewBox="0 0 8.5 7" preserveAspectRatio="none"><path d="M.8 3.600 L3.200 6 L7.800 .8" fill="none" stroke="#111" stroke-width="1.500"/></svg>
<svg class="a" style="left:98.50px;top:1431.40px;" width="7.00" height="5.60" viewBox="0 0 7 5.6" preserveAspectRatio="none"><ellipse cx="3.500" cy="2.800" rx="3.200" ry="2.500" fill="#7ab86a" stroke="#4a8a3a" stroke-width=".6"/></svg>
<span class="t" style="top:1430.19px;font-size:9.20px;line-height:9.20px;color:#111;font-weight:bold;left:115.60px;transform-origin:0 50%;transform:scaleX(1.2360);">cultural_infrastructure_indicators test</span>
<svg class="a" style="left:57.50px;top:1445.10px;" width="7.00" height="3.50" viewBox="0 0 7 3.5" preserveAspectRatio="none"><path d="M0 0h7l-3.500 3.500z" fill="#555"/></svg>
<div class="a" style="left:74.40px;top:1441.40px;width:12.60px;height:10.40px;background:#fff;border:1px solid #b4b4b4;box-sizing:border-box;"></div>
<svg class="a" style="left:76.60px;top:1443.10px;" width="8.50" height="7.00" viewBox="0 0 8.5 7" preserveAspectRatio="none"><path d="M.8 3.600 L3.200 6 L7.800 .8" fill="none" stroke="#111" stroke-width="1.500"/></svg>
<svg class="a" style="left:94.00px;top:1441.60px;" width="16.00" height="9.50" viewBox="0 0 16 9.5" preserveAspectRatio="none"><path d="M1.500 1.500 l5.500 7 6 -7" fill="none" stroke="#777" stroke-width="1"/><circle cx="14.500" cy="1.500" r=".9" fill="#777"/></svg>
<span class="t" style="top:1442.59px;font-size:9.20px;line-height:9.20px;color:#111;font-weight:bold;left:115.60px;transform-origin:0 50%;transform:scaleX(1.2087);">hiking_trails_clean</span>
<div class="a" style="left:94.60px;top:1455.50px;width:12.60px;height:10.40px;background:#fff;border:1px solid #b4b4b4;box-sizing:border-box;"></div>
<svg class="a" style="left:96.80px;top:1457.20px;" width="8.50" height="7.00" viewBox="0 0 8.5 7" preserveAspectRatio="none"><path d="M.8 3.600 L3.200 6 L7.800 .8" fill="none" stroke="#111" stroke-width="1.500"/></svg>
<div class="a" style="left:113.60px;top:1459.40px;width:19.70px;height:2.70px;background:#3cc06e;"></div>
<span class="t" style="top:1456.93px;font-size:9.30px;line-height:9.30px;color:#222;left:140.30px;transform-origin:0 50%;transform:scaleX(1.0497);">Easy</span>
<div class="a" style="left:94.60px;top:1471.00px;width:12.60px;height:10.40px;background:#fff;border:1px solid #b4b4b4;box-sizing:border-box;"></div>
<svg class="a" style="left:96.80px;top:1472.70px;" width="8.50" height="7.00" viewBox="0 0 8.5 7" preserveAspectRatio="none"><path d="M.8 3.600 L3.200 6 L7.800 .8" fill="none" stroke="#111" stroke-width="1.500"/></svg>
<div class="a" style="left:113.60px;top:1474.90px;width:19.70px;height:2.70px;background:#e8812a;"></div>
<span class="t" style="top:1472.43px;font-size:9.30px;line-height:9.30px;color:#222;left:140.30px;transform-origin:0 50%;transform:scaleX(1.2652);">Moderate</span>
<div class="a" style="left:94.60px;top:1486.30px;width:12.60px;height:10.40px;background:#fff;border:1px solid #b4b4b4;box-sizing:border-box;"></div>
<svg class="a" style="left:96.80px;top:1488.00px;" width="8.50" height="7.00" viewBox="0 0 8.5 7" preserveAspectRatio="none"><path d="M.8 3.600 L3.200 6 L7.800 .8" fill="none" stroke="#111" stroke-width="1.500"/></svg>
<div class="a" style="left:113.60px;top:1490.20px;width:19.70px;height:2.70px;background:#dc4b40;"></div>
<span class="t" style="top:1487.73px;font-size:9.30px;line-height:9.30px;color:#222;left:140.30px;transform-origin:0 50%;transform:scaleX(1.2105);">Hard</span>
<div class="a" style="left:74.40px;top:1500.40px;width:12.60px;height:10.40px;background:#fff;border:1px solid #b4b4b4;box-sizing:border-box;"></div>
<svg class="a" style="left:76.60px;top:1502.10px;" width="8.50" height="7.00" viewBox="0 0 8.5 7" preserveAspectRatio="none"><path d="M.8 3.600 L3.200 6 L7.800 .8" fill="none" stroke="#111" stroke-width="1.500"/></svg>
<div class="a" style="left:94.00px;top:1500.30px;width:15.40px;height:10.60px;background:#f3c8a0;border:1px solid #c9a07a;box-sizing:border-box;"></div>
<span class="t" style="top:1501.59px;font-size:9.20px;line-height:9.20px;color:#111;font-weight:bold;left:115.60px;transform-origin:0 50%;transform:scaleX(1.2456);">diva_berat_attrazioni</span>
<div class="a" style="left:74.40px;top:1513.00px;width:12.60px;height:10.40px;background:#fff;border:1px solid #b4b4b4;box-sizing:border-box;"></div>
<svg class="a" style="left:76.60px;top:1514.70px;" width="8.50" height="7.00" viewBox="0 0 8.5 7" preserveAspectRatio="none"><path d="M.8 3.600 L3.200 6 L7.800 .8" fill="none" stroke="#111" stroke-width="1.500"/></svg>
<div class="a" style="left:94.00px;top:1512.90px;width:15.40px;height:10.60px;background:#d8f5e4;border:1px solid #5ab57e;box-sizing:border-box;"></div>
<span class="t" style="top:1514.19px;font-size:9.20px;line-height:9.20px;color:#111;font-weight:bold;left:115.60px;transform-origin:0 50%;transform:scaleX(1.2604);">outdoor_berat</span>
<div class="a" style="left:74.40px;top:1525.60px;width:12.60px;height:10.40px;background:#fff;border:1px solid #b4b4b4;box-sizing:border-box;"></div>
<svg class="a" style="left:76.60px;top:1527.30px;" width="8.50" height="7.00" viewBox="0 0 8.5 7" preserveAspectRatio="none"><path d="M.8 3.600 L3.200 6 L7.800 .8" fill="none" stroke="#111" stroke-width="1.500"/></svg>
<svg class="a" style="left:94.00px;top:1526.80px;" width="16.00" height="8.00" viewBox="0 0 16 8" preserveAspectRatio="none"><circle cx="2" cy="6.500" r=".9" fill="#999"/><circle cx="7.500" cy="1.500" r=".9" fill="#999"/><circle cx="13.500" cy="6" r=".9" fill="#999"/></svg>
<span class="t" style="top:1526.79px;font-size:9.20px;line-height:9.20px;color:#111;font-weight:bold;left:115.60px;transform-origin:0 50%;transform:scaleX(1.2534);">forest</span>
<svg class="a" style="left:372.50px;top:1526.80px;" width="15.00" height="8.00" viewBox="0 0 15 8" preserveAspectRatio="none"><rect x=".5" y=".5" width="14" height="7" rx="1" fill="#f6f6f6" stroke="#cfcfcf"/><path d="M3 2.500h9M3 5.500h9M3 2.500v3M12 2.500v3M6 1.800v1.400M9 1.800v1.400M6 4.800v1.400M9 4.800v1.400" stroke="#666" stroke-width=".8"/></svg>
<svg class="a" style="left:57.50px;top:1542.00px;" width="7.00" height="3.50" viewBox="0 0 7 3.5" preserveAspectRatio="none"><path d="M0 0h7l-3.500 3.500z" fill="#555"/></svg>
<div class="a" style="left:74.40px;top:1538.30px;width:12.60px;height:10.40px;background:#fff;border:1px solid #b4b4b4;box-sizing:border-box;"></div>
<svg class="a" style="left:76.60px;top:1540.00px;" width="8.50" height="7.00" viewBox="0 0 8.5 7" preserveAspectRatio="none"><path d="M.8 3.600 L3.200 6 L7.800 .8" fill="none" stroke="#111" stroke-width="1.500"/></svg>
<svg class="a" style="left:94.00px;top:1538.50px;" width="16.00" height="9.50" viewBox="0 0 16 9.5" preserveAspectRatio="none"><path d="M1.500 1.500 l5.500 7 6 -7" fill="none" stroke="#777" stroke-width="1"/><circle cx="14.500" cy="1.500" r=".9" fill="#777"/></svg>
<span class="t" style="top:1539.49px;font-size:9.20px;line-height:9.20px;color:#111;font-weight:bold;left:115.60px;transform-origin:0 50%;transform:scaleX(1.2585);">waterways</span>
<svg class="a" style="left:372.50px;top:1539.50px;" width="15.00" height="8.00" viewBox="0 0 15 8" preserveAspectRatio="none"><rect x=".5" y=".5" width="14" height="7" rx="1" fill="#f6f6f6" stroke="#cfcfcf"/><path d="M3 2.500h9M3 5.500h9M3 2.500v3M12 2.500v3M6 1.800v1.400M9 1.800v1.400M6 4.800v1.400M9 4.800v1.400" stroke="#666" stroke-width=".8"/></svg>
<div class="a" style="left:94.60px;top:1552.30px;width:12.60px;height:10.40px;background:#fff;border:1px solid #b4b4b4;box-sizing:border-box;"></div>
<svg class="a" style="left:96.80px;top:1554.00px;" width="8.50" height="7.00" viewBox="0 0 8.5 7" preserveAspectRatio="none"><path d="M.8 3.600 L3.200 6 L7.800 .8" fill="none" stroke="#111" stroke-width="1.500"/></svg>
<div class="a" style="left:113.60px;top:1557.00px;width:19.70px;height:1.00px;background:#9bbbd6;"></div>
<span class="t" style="top:1553.73px;font-size:9.30px;line-height:9.30px;color:#222;left:140.30px;transform-origin:0 50%;transform:scaleX(1.1812);">Stream</span>
<div class="a" style="left:94.60px;top:1567.40px;width:12.60px;height:10.40px;background:#fff;border:1px solid #b4b4b4;box-sizing:border-box;"></div>
<svg class="a" style="left:96.80px;top:1569.10px;" width="8.50" height="7.00" viewBox="0 0 8.5 7" preserveAspectRatio="none"><path d="M.8 3.600 L3.200 6 L7.800 .8" fill="none" stroke="#111" stroke-width="1.500"/></svg>
<div class="a" style="left:113.60px;top:1571.20px;width:19.70px;height:0.90px;background:#aaa;"></div>
<div class="a" style="left:113.60px;top:1573.20px;width:19.70px;height:0.90px;background:#aaa;"></div>
<span class="t" style="top:1568.83px;font-size:9.30px;line-height:9.30px;color:#222;left:140.30px;transform-origin:0 50%;transform:scaleX(1.1657);">River</span>
<svg class="a" style="left:59.50px;top:1583.70px;" width="4.00" height="6.00" viewBox="0 0 4 6" preserveAspectRatio="none"><path d="M0 0 L4 3 L0 6z" fill="#555"/></svg>
<div class="a" style="left:74.40px;top:1581.50px;width:12.60px;height:10.40px;background:#fff;border:1px solid #b4b4b4;box-sizing:border-box;"></div>
<svg class="a" style="left:76.60px;top:1583.20px;" width="8.50" height="7.00" viewBox="0 0 8.5 7" preserveAspectRatio="none"><path d="M.8 3.600 L3.200 6 L7.800 .8" fill="none" stroke="#111" stroke-width="1.500"/></svg>
<svg class="a" style="left:94.00px;top:1582.20px;" width="17.00" height="8.50" viewBox="0 0 17 8.5" preserveAspectRatio="none"><path d="M1 4 q0 -3.500 5 -3.500 h6 q4.500 0 4.500 2.500 q0 2 -4 2 h-2 q-2 0 -2.500 1.500 q-.5 1.500 -3 1.500 q-4 0 -4 -4z" fill="#e6e6e6" stroke="#999" stroke-width=".9"/></svg>
<span class="t" style="top:1582.69px;font-size:9.20px;line-height:9.20px;color:#111;font-weight:bold;left:115.60px;transform-origin:0 50%;transform:scaleX(1.2565);">natural</span>
<svg class="a" style="left:372.50px;top:1582.70px;" width="15.00" height="8.00" viewBox="0 0 15 8" preserveAspectRatio="none"><rect x=".5" y=".5" width="14" height="7" rx="1" fill="#f6f6f6" stroke="#cfcfcf"/><path d="M3 2.500h9M3 5.500h9M3 2.500v3M12 2.500v3M6 1.800v1.400M9 1.800v1.400M6 4.800v1.400M9 4.800v1.400" stroke="#666" stroke-width=".8"/></svg>
<div class="a" style="left:74.40px;top:1594.40px;width:12.60px;height:10.40px;background:#fff;border:1px solid #b4b4b4;box-sizing:border-box;"></div>
<svg class="a" style="left:76.60px;top:1596.10px;" width="8.50" height="7.00" viewBox="0 0 8.5 7" preserveAspectRatio="none"><path d="M.8 3.600 L3.200 6 L7.800 .8" fill="none" stroke="#111" stroke-width="1.500"/></svg>
<div class="a" style="left:94.00px;top:1594.30px;width:15.40px;height:10.60px;background:#ff9e17;border:1px solid #c77a10;box-sizing:border-box;"></div>
<span class="t" style="top:1595.59px;font-size:9.20px;line-height:9.20px;color:#111;font-weight:bold;left:115.60px;transform-origin:0 50%;transform:scaleX(1.2443);">strade_edifici OSM scaricati</span>
<svg class="a" style="left:57.50px;top:1610.40px;" width="7.00" height="3.50" viewBox="0 0 7 3.5" preserveAspectRatio="none"><path d="M0 0h7l-3.500 3.500z" fill="#555"/></svg>
<div class="a" style="left:74.40px;top:1606.70px;width:12.60px;height:10.40px;background:#fff;border:1px solid #b4b4b4;box-sizing:border-box;"></div>
<svg class="a" style="left:76.60px;top:1608.40px;" width="8.50" height="7.00" viewBox="0 0 8.5 7" preserveAspectRatio="none"><path d="M.8 3.600 L3.200 6 L7.800 .8" fill="none" stroke="#111" stroke-width="1.500"/></svg>
<svg class="a" style="left:94.00px;top:1607.40px;" width="17.00" height="8.50" viewBox="0 0 17 8.5" preserveAspectRatio="none"><path d="M1 4 q0 -3.500 5 -3.500 h6 q4.500 0 4.500 2.500 q0 2 -4 2 h-2 q-2 0 -2.500 1.500 q-.5 1.500 -3 1.500 q-4 0 -4 -4z" fill="#e6e6e6" stroke="#999" stroke-width=".9"/></svg>
<span class="t" style="top:1607.89px;font-size:9.20px;line-height:9.20px;color:#111;font-weight:bold;left:115.60px;transform-origin:0 50%;transform:scaleX(1.2738);">building</span>
<svg class="a" style="left:372.50px;top:1607.90px;" width="15.00" height="8.00" viewBox="0 0 15 8" preserveAspectRatio="none"><rect x=".5" y=".5" width="14" height="7" rx="1" fill="#f6f6f6" stroke="#cfcfcf"/><path d="M3 2.500h9M3 5.500h9M3 2.500v3M12 2.500v3M6 1.800v1.400M9 1.800v1.400M6 4.800v1.400M9 4.800v1.400" stroke="#666" stroke-width=".8"/></svg>
<svg class="a" style="left:79.00px;top:1623.20px;" width="4.00" height="6.00" viewBox="0 0 4 6" preserveAspectRatio="none"><path d="M0 0 L4 3 L0 6z" fill="#555"/></svg>
<div class="a" style="left:94.60px;top:1621.00px;width:12.60px;height:10.40px;background:#fff;border:1px solid #b4b4b4;box-sizing:border-box;"></div>
<svg class="a" style="left:96.80px;top:1622.70px;" width="8.50" height="7.00" viewBox="0 0 8.5 7" preserveAspectRatio="none"><path d="M.8 3.600 L3.200 6 L7.800 .8" fill="none" stroke="#111" stroke-width="1.500"/></svg>
<div class="a" style="left:113.60px;top:1619.20px;width:22.00px;height:14.00px;background:#c0ac6f;border:1px solid #a89660;box-sizing:border-box;"></div>
<div class="a" style="left:94.60px;top:1637.60px;width:12.60px;height:10.40px;background:#fff;border:1px solid #b4b4b4;box-sizing:border-box;"></div>
<svg class="a" style="left:96.80px;top:1639.30px;" width="8.50" height="7.00" viewBox="0 0 8.5 7" preserveAspectRatio="none"><path d="M.8 3.600 L3.200 6 L7.800 .8" fill="none" stroke="#111" stroke-width="1.500"/></svg>
<div class="a" style="left:113.60px;top:1635.80px;width:22.00px;height:14.00px;background:#7d7d7d;border:1px solid #666;box-sizing:border-box;"></div>
<span class="t" style="top:1639.33px;font-size:9.30px;line-height:9.30px;color:#222;left:141.30px;transform-origin:0 50%;transform:scaleX(1.1710);">Dam</span>
<div class="a" style="left:0.00px;top:1645.00px;width:413.50px;height:22.00px;background:#f0f0f0;"></div>
<div class="a" style="left:52.00px;top:1644.50px;width:340.30px;height:1.00px;background:#d0d0d0;"></div>
<div class="a" style="left:0.00px;top:1645.50px;width:1497.00px;height:20.00px;background:#f0f0f0;"></div>
<div class="a" style="left:0.00px;top:1665.50px;width:1497.00px;height:2.50px;background:#fff;"></div>
<div class="a" style="left:4.80px;top:1648.50px;width:227.50px;height:14.50px;background:#fff;border:1px solid #c4c4c4;box-sizing:border-box;border-radius:1px;"></div>
<svg class="a" style="left:12.50px;top:1651.50px;" width="12.00" height="9.00" viewBox="0 0 12 9" preserveAspectRatio="none"><ellipse cx="5" cy="3.800" rx="3.800" ry="3" fill="none" stroke="#777" stroke-width="1.200"/><path d="M7.800 6 l3.500 2.600" stroke="#777" stroke-width="1.400"/></svg>
<span class="t" style="top:1652.40px;font-size:8.80px;line-height:8.80px;color:#8a8a8a;left:32.80px;transform-origin:0 50%;transform:scaleX(1.1043);">Digita per localizzare (Ctrl+K)</span>
<span class="t" style="top:1652.69px;font-size:9.00px;line-height:9.00px;color:#111;left:638.70px;transform-origin:0 50%;transform:scaleX(1.1378);">Coordinata</span>
<div class="a" style="left:693.70px;top:1649.50px;width:106.60px;height:14.00px;background:#fff;border:1px solid #c4c4c4;box-sizing:border-box;border-radius:1px;"></div>
<span class="t" style="top:1652.69px;font-size:9.00px;line-height:9.00px;color:#111;white-space:pre;left:700.40px;transform-origin:0 50%;transform:scaleX(1.1959);">40,4369°  20,2523°</span>
<svg class="a" style="left:806.00px;top:1651.00px;" width="15.00" height="11.00" viewBox="0 0 15 11" preserveAspectRatio="none"><ellipse cx="6" cy="5" rx="4" ry="4.500" fill="#fff" stroke="#333" stroke-width="1.300" transform="rotate(-30 6 5)"/><path d="M3 2 l8 7 M9 1 l3 9" stroke="#333" stroke-width="1.200"/></svg>
<span class="t" style="top:1652.69px;font-size:9.00px;line-height:9.00px;color:#111;left:834.00px;transform-origin:0 50%;transform:scaleX(1.0793);">Scala</span>
<div class="a" style="left:862.80px;top:1649.50px;width:72.90px;height:14.00px;background:#fff;border:1px solid #c4c4c4;box-sizing:border-box;border-radius:1px;"></div>
<span class="t" style="top:1652.69px;font-size:9.00px;line-height:9.00px;color:#111;left:867.60px;transform-origin:0 50%;transform:scaleX(1.1491);">1:28452</span>
<div class="a" style="left:917.00px;top:1650.00px;width:1.00px;height:13.00px;background:#d4d4d4;"></div>
<svg class="a" style="left:923.40px;top:1655.10px;" width="6.00" height="3.50" viewBox="0 0 6 3.5" preserveAspectRatio="none"><path d="M0 0h6l-3 3.500z" fill="#555"/></svg>
<svg class="a" style="left:948.50px;top:1651.00px;" width="12.00" height="11.00" viewBox="0 0 12 11" preserveAspectRatio="none"><rect x="1" y="5" width="10" height="6" rx="1" fill="#555"/><path d="M3 5 v-1.500 a3 2.500 0 0 1 6 0 v1.500" fill="none" stroke="#555" stroke-width="1.500"/></svg>
<span class="t" style="top:1652.69px;font-size:9.00px;line-height:9.00px;color:#111;left:970.50px;transform-origin:0 50%;transform:scaleX(1.1859);">Lente d&#x27;ingrandimento</span>
<div class="a" style="left:1080.30px;top:1649.50px;width:77.40px;height:14.00px;background:#fff;border:1px solid #c4c4c4;box-sizing:border-box;border-radius:1px;"></div>
<span class="t" style="top:1652.69px;font-size:9.00px;line-height:9.00px;color:#111;left:1085.00px;transform-origin:0 50%;transform:scaleX(1.1723);">100%</span>
<div class="a" style="left:1145.00px;top:1650.00px;width:1.00px;height:13.00px;background:#d4d4d4;"></div>
<svg class="a" style="left:1148.00px;top:1651.30px;" width="6.00" height="10.50" viewBox="0 0 6 10.5" preserveAspectRatio="none"><path d="M0 4 L3 0 L6 4z M0 6.500 L3 10.500 L6 6.500z" fill="#444"/></svg>
<span class="t" style="top:1652.69px;font-size:9.00px;line-height:9.00px;color:#111;left:1167.70px;transform-origin:0 50%;transform:scaleX(1.1473);">Rotazione</span>
<div class="a" style="left:1224.60px;top:1649.50px;width:77.10px;height:14.00px;background:#fff;border:1px solid #c4c4c4;box-sizing:border-box;border-radius:1px;"></div>
<span class="t" style="top:1652.69px;font-size:9.00px;line-height:9.00px;color:#111;left:1228.40px;transform-origin:0 50%;transform:scaleX(1.1973);">0,0 °</span>
<div class="a" style="left:1288.60px;top:1650.00px;width:1.00px;height:13.00px;background:#d4d4d4;"></div>
<svg class="a" style="left:1291.60px;top:1651.30px;" width="6.00" height="10.50" viewBox="0 0 6 10.5" preserveAspectRatio="none"><path d="M0 4 L3 0 L6 4z M0 6.500 L3 10.500 L6 6.500z" fill="#444"/></svg>
<div class="a" style="left:1309.50px;top:1651.00px;width:12.00px;height:11.00px;background:#fff;border:1px solid #8a8a8a;box-sizing:border-box;"></div>
<svg class="a" style="left:1311.30px;top:1653.20px;" width="8.50" height="7.00" viewBox="0 0 8.5 7" preserveAspectRatio="none"><path d="M.8 3.600 L3.200 6 L7.800 .8" fill="none" stroke="#111" stroke-width="1.500"/></svg>
<span class="t" style="top:1652.69px;font-size:9.00px;line-height:9.00px;color:#111;left:1327.00px;transform-origin:0 50%;transform:scaleX(1.1249);">Visualizza</span>
<svg class="a" style="left:1387.50px;top:1651.50px;" width="15.00" height="10.00" viewBox="0 0 15 10" preserveAspectRatio="none"><ellipse cx="7.500" cy="5" rx="6.500" ry="4.500" fill="#e0e0e0" stroke="#555"/><path d="M7.500 .5 q-4 4.500 0 9 M7.500 .5 q4 4.500 0 9 M1 5 h13 M0 3.500h15M0 6.500h15" fill="none" stroke="#555" stroke-width=".8"/></svg>
<span class="t" style="top:1652.69px;font-size:9.00px;line-height:9.00px;color:#111;left:1405.80px;transform-origin:0 50%;transform:scaleX(1.0814);">EPSG:4326</span>
<svg class="a" style="left:1481.00px;top:1651.00px;" width="15.00" height="11.00" viewBox="0 0 15 11" preserveAspectRatio="none"><path d="M1 1 h13 v7 h-7 l-3 2.500 v-2.500 h-3z" fill="#555"/><circle cx="4.500" cy="4.500" r=".9" fill="#fff"/><circle cx="7.500" cy="4.500" r=".9" fill="#fff"/><circle cx="10.500" cy="4.500" r=".9" fill="#fff"/></svg>
<svg class="a" style="left:413.5px;top:1228px;font-family:'DejaVu Sans','Liberation Sans',sans-serif;" width="1083.5" height="417.5" viewBox="413.5 1228 1083.5 417.5"><rect x="413.5" y="1228" width="1083.5" height="417.5" fill="#f1eee8"/><path d="M548.4 1229.9 C554.2 1225.4 577.2 1227.1 580.5 1229.9 C583.8 1232.8 572.3 1242.3 568.2 1247.2 C564.1 1252.2 559.5 1258.0 555.8 1259.6 C552.1 1261.2 547.2 1262.1 545.9 1257.1 C544.7 1252.2 542.6 1234.5 548.4 1229.9Z" fill="#d0e6bf" /><path d="M637.4 1229.9 C644.0 1225.0 667.0 1227.1 672.0 1229.9 C676.9 1232.8 671.2 1241.9 667.0 1247.2 C662.9 1252.6 653.0 1260.0 647.3 1262.1 C641.5 1264.1 634.1 1265.0 632.4 1259.6 C630.8 1254.2 630.8 1234.9 637.4 1229.9Z" fill="#d0e6bf" /><path d="M592.9 1262.1 C598.3 1260.0 621.7 1261.2 632.4 1262.1 C643.2 1262.9 650.6 1263.7 657.2 1267.0 C663.7 1270.3 672.0 1277.3 672.0 1281.8 C672.0 1286.4 661.3 1289.7 657.2 1294.2 C653.0 1298.7 654.3 1305.7 647.3 1309.0 C640.3 1312.3 623.4 1313.2 615.1 1314.0 C606.9 1314.8 602.4 1315.6 597.8 1314.0 C593.3 1312.3 590.8 1308.6 588.0 1304.1 C585.1 1299.6 579.7 1290.5 580.5 1286.8 C581.4 1283.1 589.6 1283.9 592.9 1281.8 C596.2 1279.8 600.3 1277.7 600.3 1274.4 C600.3 1271.1 587.5 1264.1 592.9 1262.1Z" fill="#a8ce97" /><path d="M632.4 1273.2 C634.5 1274.6 653.9 1278.1 659.6 1278.1 C665.4 1278.1 669.1 1274.6 667.0 1273.2 C665.0 1271.8 653.0 1269.5 647.3 1269.5 C641.5 1269.5 630.4 1271.8 632.4 1273.2Z" fill="#f1eee8" /><path d="M518.7 1301.6 C520.8 1300.4 529.0 1300.2 531.1 1301.6 C533.2 1303.1 533.2 1309.0 531.1 1310.3 C529.0 1311.5 520.8 1310.5 518.7 1309.0 C516.7 1307.6 516.7 1302.9 518.7 1301.6Z" fill="#a8ce97" /><path d="M586.7 1330.0 C588.2 1328.2 593.9 1328.2 595.4 1330.0 C596.8 1331.9 596.8 1339.3 595.4 1341.2 C593.9 1343.0 588.2 1343.0 586.7 1341.2 C585.3 1339.3 585.3 1331.9 586.7 1330.0Z" fill="#bbd8a8" /><path d="M516.3 1267.0 C525.8 1264.1 569.4 1262.9 583.0 1269.5 C596.6 1276.1 594.1 1294.2 597.8 1306.6 C601.5 1318.9 610.2 1338.7 605.3 1343.6 C600.3 1348.6 578.5 1342.4 568.2 1336.2 C557.9 1330.0 550.5 1314.8 543.5 1306.6 C536.5 1298.3 530.7 1293.4 526.2 1286.8 C521.6 1280.2 506.8 1269.9 516.3 1267.0Z" fill="#e9e6e2" /><path d="M630.0 1395.5 C632.9 1393.5 652.2 1396.0 657.2 1398.0 C662.1 1400.1 662.5 1405.8 659.6 1407.9 C656.7 1410.0 644.8 1412.4 639.9 1410.4 C634.9 1408.3 627.1 1397.6 630.0 1395.5Z" fill="#e2e0de" /><path d="M442.1 1439.9 C447.1 1436.6 475.9 1435.4 481.7 1437.4 C487.4 1439.5 481.7 1448.9 476.7 1452.2 C471.8 1455.5 457.8 1459.2 452.0 1457.2 C446.2 1455.1 437.2 1443.2 442.1 1439.9Z" fill="#e2e0de" /><path d="M667.0 1434.9 C672.8 1432.5 697.1 1430.4 704.1 1432.5 C711.1 1434.5 712.4 1443.2 709.1 1447.3 C705.8 1451.4 690.9 1457.2 684.3 1457.2 C677.8 1457.2 672.4 1451.0 669.5 1447.3 C666.6 1443.6 661.3 1437.4 667.0 1434.9Z" fill="#e2e0de" /><path d="M642.3 1615.4 C645.4 1613.7 658.6 1612.7 662.1 1614.1 C665.6 1615.6 666.4 1622.4 663.3 1624.0 C660.2 1625.7 647.1 1625.5 643.6 1624.0 C640.1 1622.6 639.2 1617.0 642.3 1615.4Z" fill="#e2e0de" /><path d="M770.0 1337.5 C773.9 1336.4 789.6 1336.4 793.5 1337.5 C797.4 1338.5 797.4 1342.6 793.5 1343.6 C789.6 1344.7 773.9 1344.7 770.0 1343.6 C766.1 1342.6 766.1 1338.5 770.0 1337.5Z" fill="#e2e0de" /><path d="M792.2 1385.7 C797.6 1383.2 820.9 1378.6 826.8 1378.2 C832.8 1377.8 833.4 1380.7 828.1 1383.2 C822.7 1385.7 800.7 1392.7 794.7 1393.1 C788.7 1393.5 786.9 1388.1 792.2 1385.7Z" fill="#e2e0de" /><path d="M1334.6 1603.0 C1336.7 1601.4 1344.9 1601.4 1347.0 1603.0 C1349.0 1604.7 1349.0 1611.2 1347.0 1612.9 C1344.9 1614.5 1336.7 1614.5 1334.6 1612.9 C1332.6 1611.2 1332.6 1604.7 1334.6 1603.0Z" fill="#e2e0de" /><path d="M615.1 1519.0 C618.4 1516.9 633.3 1516.1 637.4 1517.7 C641.5 1519.4 643.2 1526.8 639.9 1528.9 C636.6 1530.9 621.7 1531.7 617.6 1530.1 C613.5 1528.5 611.8 1521.0 615.1 1519.0Z" fill="#e2e0de" /><path d="M831.8 1474.5 C835.9 1470.6 844.1 1471.0 851.6 1470.8 C859.0 1470.6 867.6 1469.8 876.3 1473.3 C884.9 1476.8 899.8 1485.8 903.5 1491.8 C907.2 1497.8 903.5 1505.0 898.5 1509.1 C893.6 1513.2 879.6 1512.0 873.8 1516.5 C868.0 1521.0 861.4 1532.2 863.9 1536.3 C866.4 1540.4 880.0 1539.2 888.6 1541.2 C897.3 1543.3 910.1 1544.1 915.8 1548.6 C921.6 1553.2 918.7 1566.8 923.2 1568.4 C927.8 1570.1 937.2 1555.2 943.0 1558.5 C948.8 1561.8 956.2 1580.8 957.8 1588.2 C959.5 1595.6 952.9 1597.2 952.9 1603.0 C952.9 1608.8 956.2 1615.8 957.8 1622.8 C959.5 1629.8 965.3 1641.3 962.8 1645.0 C960.3 1648.7 947.1 1647.9 943.0 1645.0 C938.9 1642.1 940.5 1633.9 938.1 1627.7 C935.6 1621.5 931.5 1612.9 928.2 1608.0 C924.9 1603.0 923.2 1601.4 918.3 1598.1 C913.4 1594.8 904.7 1590.7 898.5 1588.2 C892.3 1585.7 888.2 1584.5 881.2 1583.2 C874.2 1582.0 864.3 1582.0 856.5 1580.8 C848.7 1579.5 834.3 1578.7 834.3 1575.8 C834.3 1572.9 854.9 1568.4 856.5 1563.5 C858.2 1558.5 848.7 1551.1 844.1 1546.2 C839.6 1541.2 833.4 1539.6 829.3 1533.8 C825.2 1528.0 819.8 1518.2 819.4 1511.6 C819.0 1505.0 824.8 1500.4 826.8 1494.3 C828.9 1488.1 827.7 1478.4 831.8 1474.5Z" fill="#d0e6bf" /><path d="M851.6 1472.0 C855.7 1468.6 867.8 1470.5 876.3 1474.0 C884.7 1477.5 899.1 1487.0 902.2 1493.0 C905.3 1499.1 900.8 1506.8 894.8 1510.3 C888.8 1513.8 873.6 1516.7 866.4 1514.0 C859.2 1511.4 854.0 1501.3 851.6 1494.3 C849.1 1487.3 847.4 1475.4 851.6 1472.0Z" fill="#bbd8a8" /><path d="M878.7 1546.2 C884.1 1543.7 901.8 1544.9 908.4 1548.6 C915.0 1552.3 920.8 1563.9 918.3 1568.4 C915.8 1572.9 900.6 1576.6 893.6 1575.8 C886.6 1575.0 878.7 1568.4 876.3 1563.5 C873.8 1558.5 873.4 1548.6 878.7 1546.2Z" fill="#bbd8a8" /><path d="M694.2 1525.2 C696.3 1521.4 708.6 1516.7 718.9 1514.0 C729.2 1511.4 745.8 1510.7 756.0 1509.1 C766.2 1507.4 773.4 1503.1 780.0 1504.1 C786.6 1505.2 792.6 1511.8 795.6 1515.3 C798.6 1518.8 800.6 1521.9 798.0 1525.2 C795.4 1528.5 787.0 1532.2 780.0 1535.0 C773.0 1537.9 764.1 1539.8 756.0 1542.5 C747.9 1545.1 738.7 1550.1 731.3 1551.1 C723.9 1552.1 715.7 1551.1 711.5 1548.6 C707.4 1546.2 709.5 1540.2 706.6 1536.3 C703.7 1532.4 692.2 1528.9 694.2 1525.2Z" fill="#a8ce97" /><path d="M738.7 1526.4 C742.4 1524.9 761.0 1523.3 765.9 1523.9 C770.9 1524.5 772.1 1528.7 768.4 1530.1 C764.7 1531.5 748.6 1533.2 743.7 1532.6 C738.7 1532.0 735.0 1527.8 738.7 1526.4Z" fill="#bbd8a8" /><path d="M794.7 1645.5 C771.2 1643.8 796.0 1638.9 802.1 1635.1 C808.3 1631.4 823.6 1626.3 831.8 1622.8 C840.0 1619.3 844.6 1617.0 851.6 1614.1 C858.6 1611.2 868.9 1607.7 873.8 1605.5 C878.7 1603.2 877.1 1601.0 881.2 1600.5 C885.3 1600.1 892.3 1603.4 898.5 1603.0 C904.7 1602.6 913.4 1597.2 918.3 1598.1 C923.2 1598.9 924.9 1603.0 928.2 1608.0 C931.5 1612.9 935.6 1621.5 938.1 1627.7 C940.5 1634.0 966.9 1642.6 943.0 1645.5 C919.1 1648.5 818.2 1647.3 794.7 1645.5Z" fill="#a8ce97" /><path d="M943.0 1558.5 C945.5 1551.9 955.4 1543.5 962.8 1538.7 C970.2 1534.0 978.4 1531.7 987.5 1530.1 C996.6 1528.5 1009.7 1528.0 1017.2 1528.9 C1024.6 1529.7 1023.7 1533.8 1032.0 1535.0 C1040.2 1536.3 1056.7 1534.4 1066.6 1536.3 C1076.5 1538.1 1084.7 1543.7 1091.3 1546.2 C1097.9 1548.6 1102.8 1547.4 1106.1 1551.1 C1109.4 1554.8 1107.6 1565.5 1111.1 1568.4 C1114.6 1571.3 1121.9 1569.6 1127.0 1568.4 C1132.1 1567.2 1137.3 1561.0 1141.8 1561.0 C1146.4 1561.0 1148.4 1565.5 1154.2 1568.4 C1160.0 1571.3 1171.5 1573.8 1176.4 1578.3 C1181.4 1582.8 1178.9 1591.9 1183.8 1595.6 C1188.8 1599.3 1199.1 1596.4 1206.1 1600.5 C1213.1 1604.7 1221.7 1615.8 1225.9 1620.3 C1230.0 1624.8 1227.5 1628.1 1230.8 1627.7 C1234.1 1627.3 1239.0 1619.5 1245.6 1617.8 C1252.2 1616.2 1265.4 1615.0 1270.4 1617.8 C1275.3 1620.7 1272.8 1630.5 1275.3 1635.1 C1277.8 1639.8 1337.3 1643.8 1285.2 1645.5 C1233.1 1647.3 1017.3 1649.3 962.8 1645.5 C908.2 1641.7 959.5 1629.9 957.8 1622.8 C956.2 1615.7 952.9 1608.8 952.9 1603.0 C952.9 1597.2 958.7 1592.3 957.8 1588.2 C957.0 1584.1 950.4 1583.2 948.0 1578.3 C945.5 1573.4 940.5 1565.1 943.0 1558.5Z" fill="#a8ce97"/><ellipse cx="1024.6" cy="1558.5" rx="12.7" ry="4.0" fill="#c6e0b0"/><ellipse cx="1017.2" cy="1588.2" rx="17.8" ry="3.6" fill="#c6e0b0"/><ellipse cx="1054.2" cy="1546.2" rx="7.9" ry="3.2" fill="#c6e0b0"/><ellipse cx="1116.0" cy="1578.3" rx="9.9" ry="4.0" fill="#c6e0b0"/><ellipse cx="1146.8" cy="1588.2" rx="27.7" ry="5.5" fill="#c6e0b0"/><ellipse cx="1078.9" cy="1603.0" rx="11.9" ry="3.2" fill="#c6e0b0"/><ellipse cx="1235.7" cy="1637.6" rx="11.9" ry="3.2" fill="#c6e0b0"/><path d="M1029.4 1550.3 q-2.500 -3.500 0 -3.500 q2 0 0 3.500 m3.500 0 q-2.500 -3.500 0 -3.500 q2 0 0 3.500" fill="none" stroke="#93bd84" stroke-width=".8"/><path d="M1079.8 1555.5 q-2.500 -3.500 0 -3.500 q2 0 0 3.500 m3.500 0 q-2.500 -3.500 0 -3.500 q2 0 0 3.500" fill="none" stroke="#93bd84" stroke-width=".8"/><path d="M976.0 1580.2 q-2.500 -3.500 0 -3.500 q2 0 0 3.500 m3.500 0 q-2.500 -3.500 0 -3.500 q2 0 0 3.500" fill="none" stroke="#93bd84" stroke-width=".8"/><path d="M1244.2 1620.0 q-2.500 -3.500 0 -3.500 q2 0 0 3.500 m3.500 0 q-2.500 -3.500 0 -3.500 q2 0 0 3.500" fill="none" stroke="#93bd84" stroke-width=".8"/><path d="M1009.4 1550.6 q-2.500 -3.500 0 -3.500 q2 0 0 3.500 m3.500 0 q-2.500 -3.500 0 -3.500 q2 0 0 3.500" fill="none" stroke="#93bd84" stroke-width=".8"/><path d="M1022.5 1632.7 q-2.500 -3.500 0 -3.500 q2 0 0 3.500 m3.500 0 q-2.500 -3.500 0 -3.500 q2 0 0 3.500" fill="none" stroke="#93bd84" stroke-width=".8"/><path d="M1216.1 1620.7 q-2.500 -3.500 0 -3.500 q2 0 0 3.500 m3.500 0 q-2.500 -3.500 0 -3.500 q2 0 0 3.500" fill="none" stroke="#93bd84" stroke-width=".8"/><path d="M1052.6 1602.7 q-2.500 -3.500 0 -3.500 q2 0 0 3.500 m3.500 0 q-2.500 -3.500 0 -3.500 q2 0 0 3.500" fill="none" stroke="#93bd84" stroke-width=".8"/><path d="M1185.5 1625.5 q-2.500 -3.500 0 -3.500 q2 0 0 3.500 m3.500 0 q-2.500 -3.500 0 -3.500 q2 0 0 3.500" fill="none" stroke="#93bd84" stroke-width=".8"/><path d="M1145.8 1607.2 q-2.500 -3.500 0 -3.500 q2 0 0 3.500 m3.500 0 q-2.500 -3.500 0 -3.500 q2 0 0 3.500" fill="none" stroke="#93bd84" stroke-width=".8"/><path d="M1104.2 1548.9 q-2.500 -3.500 0 -3.500 q2 0 0 3.500 m3.500 0 q-2.500 -3.500 0 -3.500 q2 0 0 3.500" fill="none" stroke="#93bd84" stroke-width=".8"/><path d="M1249.4 1626.5 q-2.500 -3.500 0 -3.500 q2 0 0 3.500 m3.500 0 q-2.500 -3.500 0 -3.500 q2 0 0 3.500" fill="none" stroke="#93bd84" stroke-width=".8"/><path d="M1232.9 1624.8 q-2.500 -3.500 0 -3.500 q2 0 0 3.500 m3.500 0 q-2.500 -3.500 0 -3.500 q2 0 0 3.500" fill="none" stroke="#93bd84" stroke-width=".8"/><path d="M1115.1 1581.4 q-2.500 -3.500 0 -3.500 q2 0 0 3.500 m3.500 0 q-2.500 -3.500 0 -3.500 q2 0 0 3.500" fill="none" stroke="#93bd84" stroke-width=".8"/><path d="M1005.8 1570.5 q-2.500 -3.500 0 -3.500 q2 0 0 3.500 m3.500 0 q-2.500 -3.500 0 -3.500 q2 0 0 3.500" fill="none" stroke="#93bd84" stroke-width=".8"/><path d="M969.6 1602.6 q-2.500 -3.500 0 -3.500 q2 0 0 3.500 m3.500 0 q-2.500 -3.500 0 -3.500 q2 0 0 3.500" fill="none" stroke="#93bd84" stroke-width=".8"/><path d="M1043.3 1593.5 q-2.500 -3.500 0 -3.500 q2 0 0 3.500 m3.500 0 q-2.500 -3.500 0 -3.500 q2 0 0 3.500" fill="none" stroke="#93bd84" stroke-width=".8"/><path d="M1103.4 1574.3 q-2.500 -3.500 0 -3.500 q2 0 0 3.500 m3.500 0 q-2.500 -3.500 0 -3.500 q2 0 0 3.500" fill="none" stroke="#93bd84" stroke-width=".8"/><path d="M1085.0 1560.3 q-2.500 -3.500 0 -3.500 q2 0 0 3.500 m3.500 0 q-2.500 -3.500 0 -3.500 q2 0 0 3.500" fill="none" stroke="#93bd84" stroke-width=".8"/><path d="M1067.1 1614.7 q-2.500 -3.500 0 -3.500 q2 0 0 3.500 m3.500 0 q-2.500 -3.500 0 -3.500 q2 0 0 3.500" fill="none" stroke="#93bd84" stroke-width=".8"/><path d="M1056.0 1595.9 q-2.500 -3.500 0 -3.500 q2 0 0 3.500 m3.500 0 q-2.500 -3.500 0 -3.500 q2 0 0 3.500" fill="none" stroke="#93bd84" stroke-width=".8"/><path d="M974.4 1562.9 q-2.500 -3.500 0 -3.500 q2 0 0 3.500 m3.500 0 q-2.500 -3.500 0 -3.500 q2 0 0 3.500" fill="none" stroke="#93bd84" stroke-width=".8"/><path d="M1196.0 1601.5 q-2.500 -3.500 0 -3.500 q2 0 0 3.500 m3.500 0 q-2.500 -3.500 0 -3.500 q2 0 0 3.500" fill="none" stroke="#93bd84" stroke-width=".8"/><path d="M1029.8 1573.1 q-2.500 -3.500 0 -3.500 q2 0 0 3.500 m3.500 0 q-2.500 -3.500 0 -3.500 q2 0 0 3.500" fill="none" stroke="#93bd84" stroke-width=".8"/><path d="M1010.9 1585.9 q-2.500 -3.500 0 -3.500 q2 0 0 3.500 m3.500 0 q-2.500 -3.500 0 -3.500 q2 0 0 3.500" fill="none" stroke="#93bd84" stroke-width=".8"/><path d="M968.5 1609.7 q-2.500 -3.500 0 -3.500 q2 0 0 3.500 m3.500 0 q-2.500 -3.500 0 -3.500 q2 0 0 3.500" fill="none" stroke="#93bd84" stroke-width=".8"/><path d="M1237.2 1635.5 q-2.500 -3.500 0 -3.500 q2 0 0 3.500 m3.500 0 q-2.500 -3.500 0 -3.500 q2 0 0 3.500" fill="none" stroke="#93bd84" stroke-width=".8"/><path d="M1186.5 1636.0 q-2.500 -3.500 0 -3.500 q2 0 0 3.500 m3.500 0 q-2.500 -3.500 0 -3.500 q2 0 0 3.500" fill="none" stroke="#93bd84" stroke-width=".8"/><path d="M960.7 1568.9 q-2.500 -3.500 0 -3.500 q2 0 0 3.500 m3.500 0 q-2.500 -3.500 0 -3.500 q2 0 0 3.500" fill="none" stroke="#93bd84" stroke-width=".8"/><path d="M1259.3 1617.5 q-2.500 -3.500 0 -3.500 q2 0 0 3.500 m3.500 0 q-2.500 -3.500 0 -3.500 q2 0 0 3.500" fill="none" stroke="#93bd84" stroke-width=".8"/><path d="M1084.3 1634.3 q-2.500 -3.500 0 -3.500 q2 0 0 3.500 m3.500 0 q-2.500 -3.500 0 -3.500 q2 0 0 3.500" fill="none" stroke="#93bd84" stroke-width=".8"/><path d="M1150.5 1621.8 q-2.500 -3.500 0 -3.500 q2 0 0 3.500 m3.500 0 q-2.500 -3.500 0 -3.500 q2 0 0 3.500" fill="none" stroke="#93bd84" stroke-width=".8"/><path d="M1047.4 1559.1 q-2.500 -3.500 0 -3.500 q2 0 0 3.500 m3.500 0 q-2.500 -3.500 0 -3.500 q2 0 0 3.500" fill="none" stroke="#93bd84" stroke-width=".8"/><path d="M1094.9 1553.6 q-2.500 -3.500 0 -3.500 q2 0 0 3.500 m3.500 0 q-2.500 -3.500 0 -3.500 q2 0 0 3.500" fill="none" stroke="#93bd84" stroke-width=".8"/><path d="M484.1 1264.5 C489.1 1266.2 506.8 1270.7 513.8 1274.4 C520.8 1278.1 523.7 1281.8 526.2 1286.8 C528.6 1291.7 531.1 1297.9 528.6 1304.1 C526.2 1310.3 513.8 1318.1 511.3 1323.9 C508.9 1329.6 510.9 1335.4 513.8 1338.7 C516.7 1342.0 526.2 1342.8 528.6 1343.6" fill="none" stroke="#b9cbd9" stroke-width="3" stroke-linecap="round" stroke-linejoin="round" /><path d="M908.4 1580.8 C911.7 1583.6 922.4 1592.7 928.2 1598.1 C933.9 1603.4 939.7 1607.1 943.0 1612.9 C946.3 1618.7 946.3 1627.3 948.0 1632.7 C949.6 1638.0 952.1 1643.0 952.9 1645.0" fill="none" stroke="#b9cbd9" stroke-width="3" stroke-linecap="round" stroke-linejoin="round" /><ellipse cx="655.9" cy="1495.5" rx="6" ry="3" fill="#9fc4dd"/><ellipse cx="1114.8" cy="1343.6" rx="5" ry="4.5" fill="#9fc4dd"/><ellipse cx="1222.2" cy="1578.3" rx="7" ry="3" fill="#9fc4dd"/><ellipse cx="1283.5" cy="1606.0" rx="3.5" ry="3.5" fill="#9fc4dd"/><ellipse cx="808.8" cy="1314.0" rx="2" ry="2" fill="#9fc4dd"/><path d="M1127.0 1246.0 C1130.3 1245.8 1139.4 1243.5 1146.8 1244.8 C1154.2 1246.0 1162.4 1253.0 1171.5 1253.4 C1180.6 1253.8 1190.4 1248.9 1201.1 1247.2 C1211.9 1245.6 1228.7 1245.6 1235.7 1243.5 C1242.8 1241.5 1234.1 1237.2 1243.2 1234.9 C1252.2 1232.6 1282.3 1230.8 1290.1 1229.9" fill="none" stroke="#cfdfee" stroke-width="1.3" stroke-linecap="round" stroke-linejoin="round" /><path d="M481.7 1444.8 C487.0 1446.1 501.0 1452.7 513.8 1452.2 C526.6 1451.8 543.5 1445.7 558.3 1442.4 C573.1 1439.1 595.4 1434.1 602.8 1432.5" fill="none" stroke="#d9d6d2" stroke-width="1.6" stroke-linecap="round" stroke-linejoin="round" /><path d="M481.7 1444.8 C487.0 1446.1 501.0 1452.7 513.8 1452.2 C526.6 1451.8 543.5 1445.7 558.3 1442.4 C573.1 1439.1 595.4 1434.1 602.8 1432.5" fill="none" stroke="#f7f5f2" stroke-width="0.7" stroke-linecap="round" stroke-linejoin="round" /><path d="M538.5 1531.3 C545.9 1530.9 570.2 1529.5 583.0 1528.9 C595.8 1528.2 609.8 1527.8 615.1 1527.6" fill="none" stroke="#d9d6d2" stroke-width="1.6" stroke-linecap="round" stroke-linejoin="round" /><path d="M538.5 1531.3 C545.9 1530.9 570.2 1529.5 583.0 1528.9 C595.8 1528.2 609.8 1527.8 615.1 1527.6" fill="none" stroke="#f7f5f2" stroke-width="0.7" stroke-linecap="round" stroke-linejoin="round" /><path d="M414.9 1578.3 C425.7 1578.5 466.4 1577.5 479.2 1579.5 C492.0 1581.6 490.7 1587.2 491.6 1590.7 C492.4 1594.2 481.3 1596.8 484.1 1600.5 C487.0 1604.2 504.7 1610.8 508.9 1612.9" fill="none" stroke="#d9d6d2" stroke-width="1.6" stroke-linecap="round" stroke-linejoin="round" /><path d="M414.9 1578.3 C425.7 1578.5 466.4 1577.5 479.2 1579.5 C492.0 1581.6 490.7 1587.2 491.6 1590.7 C492.4 1594.2 481.3 1596.8 484.1 1600.5 C487.0 1604.2 504.7 1610.8 508.9 1612.9" fill="none" stroke="#f7f5f2" stroke-width="0.7" stroke-linecap="round" stroke-linejoin="round" /><path d="M414.9 1336.2 C420.7 1331.7 436.8 1316.0 449.5 1309.0 C462.3 1302.0 480.9 1297.5 491.6 1294.2 C502.3 1290.9 510.1 1290.1 513.8 1289.3" fill="none" stroke="#d9d6d2" stroke-width="1.6" stroke-linecap="round" stroke-linejoin="round" /><path d="M414.9 1336.2 C420.7 1331.7 436.8 1316.0 449.5 1309.0 C462.3 1302.0 480.9 1297.5 491.6 1294.2 C502.3 1290.9 510.1 1290.1 513.8 1289.3" fill="none" stroke="#f7f5f2" stroke-width="0.7" stroke-linecap="round" stroke-linejoin="round" /><path d="M1127.0 1375.8 C1129.5 1378.6 1136.1 1388.1 1141.8 1393.1 C1147.6 1398.0 1156.7 1397.6 1161.6 1405.4 C1166.5 1413.3 1169.8 1434.3 1171.5 1440.0" fill="none" stroke="#d9d6d2" stroke-width="1.6" stroke-linecap="round" stroke-linejoin="round" /><path d="M1127.0 1375.8 C1129.5 1378.6 1136.1 1388.1 1141.8 1393.1 C1147.6 1398.0 1156.7 1397.6 1161.6 1405.4 C1166.5 1413.3 1169.8 1434.3 1171.5 1440.0" fill="none" stroke="#f7f5f2" stroke-width="0.7" stroke-linecap="round" stroke-linejoin="round" /><path d="M1136.9 1430.0 C1139.8 1432.1 1147.2 1440.7 1154.2 1442.4 C1161.2 1444.0 1174.8 1440.3 1178.9 1439.9" fill="none" stroke="#d9d6d2" stroke-width="1.6" stroke-linecap="round" stroke-linejoin="round" /><path d="M1136.9 1430.0 C1139.8 1432.1 1147.2 1440.7 1154.2 1442.4 C1161.2 1444.0 1174.8 1440.3 1178.9 1439.9" fill="none" stroke="#f7f5f2" stroke-width="0.7" stroke-linecap="round" stroke-linejoin="round" /><path d="M1183.8 1553.6 C1188.0 1554.4 1200.3 1554.4 1208.6 1558.5 C1216.8 1562.6 1223.8 1572.9 1233.3 1578.3 C1242.8 1583.6 1256.8 1586.5 1265.4 1590.7 C1274.1 1594.8 1281.9 1601.0 1285.2 1603.0" fill="none" stroke="#d9d6d2" stroke-width="1.6" stroke-linecap="round" stroke-linejoin="round" /><path d="M1183.8 1553.6 C1188.0 1554.4 1200.3 1554.4 1208.6 1558.5 C1216.8 1562.6 1223.8 1572.9 1233.3 1578.3 C1242.8 1583.6 1256.8 1586.5 1265.4 1590.7 C1274.1 1594.8 1281.9 1601.0 1285.2 1603.0" fill="none" stroke="#f7f5f2" stroke-width="0.7" stroke-linecap="round" stroke-linejoin="round" /><path d="M1416.2 1437.4 C1412.5 1438.7 1396.4 1438.7 1393.9 1444.8 C1391.5 1451.0 1406.3 1466.7 1401.3 1474.5 C1396.4 1482.3 1373.7 1485.6 1364.3 1491.8 C1354.8 1498.0 1354.4 1504.6 1344.5 1511.6 C1334.6 1518.6 1314.0 1525.2 1305.0 1533.8 C1295.9 1542.5 1290.1 1555.2 1290.1 1563.5 C1290.1 1571.7 1299.2 1577.5 1305.0 1583.2 C1310.7 1589.0 1321.4 1595.6 1324.7 1598.1" fill="none" stroke="#d9d6d2" stroke-width="1.6" stroke-linecap="round" stroke-linejoin="round" /><path d="M1416.2 1437.4 C1412.5 1438.7 1396.4 1438.7 1393.9 1444.8 C1391.5 1451.0 1406.3 1466.7 1401.3 1474.5 C1396.4 1482.3 1373.7 1485.6 1364.3 1491.8 C1354.8 1498.0 1354.4 1504.6 1344.5 1511.6 C1334.6 1518.6 1314.0 1525.2 1305.0 1533.8 C1295.9 1542.5 1290.1 1555.2 1290.1 1563.5 C1290.1 1571.7 1299.2 1577.5 1305.0 1583.2 C1310.7 1589.0 1321.4 1595.6 1324.7 1598.1" fill="none" stroke="#f7f5f2" stroke-width="0.7" stroke-linecap="round" stroke-linejoin="round" /><path d="M1324.7 1598.1 C1327.6 1600.7 1328.0 1610.0 1342.0 1614.1 C1356.0 1618.3 1397.6 1621.3 1408.8 1622.8" fill="none" stroke="#d9d6d2" stroke-width="1.6" stroke-linecap="round" stroke-linejoin="round" /><path d="M1324.7 1598.1 C1327.6 1600.7 1328.0 1610.0 1342.0 1614.1 C1356.0 1618.3 1397.6 1621.3 1408.8 1622.8" fill="none" stroke="#f7f5f2" stroke-width="0.7" stroke-linecap="round" stroke-linejoin="round" /><path d="M1324.7 1598.1 C1321.4 1598.9 1313.2 1599.7 1305.0 1603.0 C1296.7 1606.3 1281.9 1612.5 1275.3 1617.8 C1268.7 1623.2 1267.1 1632.3 1265.4 1635.1" fill="none" stroke="#d9d6d2" stroke-width="1.6" stroke-linecap="round" stroke-linejoin="round" /><path d="M1324.7 1598.1 C1321.4 1598.9 1313.2 1599.7 1305.0 1603.0 C1296.7 1606.3 1281.9 1612.5 1275.3 1617.8 C1268.7 1623.2 1267.1 1632.3 1265.4 1635.1" fill="none" stroke="#f7f5f2" stroke-width="0.7" stroke-linecap="round" stroke-linejoin="round" /><path d="M1324.7 1593.1 L1364.3 1589.4" fill="none" stroke="#d9d6d2" stroke-width="1.6" stroke-linecap="round" stroke-linejoin="round" /><path d="M1324.7 1593.1 L1364.3 1589.4" fill="none" stroke="#f7f5f2" stroke-width="0.7" stroke-linecap="round" stroke-linejoin="round" /><path d="M1243.2 1264.5 C1241.5 1267.0 1240.3 1275.7 1233.3 1279.4 C1226.3 1283.1 1208.2 1283.1 1201.1 1286.8 C1194.1 1290.5 1192.9 1299.1 1191.3 1301.6" fill="none" stroke="#d9d6d2" stroke-width="1.6" stroke-linecap="round" stroke-linejoin="round" /><path d="M1243.2 1264.5 C1241.5 1267.0 1240.3 1275.7 1233.3 1279.4 C1226.3 1283.1 1208.2 1283.1 1201.1 1286.8 C1194.1 1290.5 1192.9 1299.1 1191.3 1301.6" fill="none" stroke="#f7f5f2" stroke-width="0.7" stroke-linecap="round" stroke-linejoin="round" /><path d="M1497.0 1403.0 C1493.8 1405.4 1482.0 1412.0 1478.0 1417.8 C1474.0 1423.6 1473.8 1434.3 1473.0 1437.6" fill="none" stroke="#d9d6d2" stroke-width="1.6" stroke-linecap="round" stroke-linejoin="round" /><path d="M1497.0 1403.0 C1493.8 1405.4 1482.0 1412.0 1478.0 1417.8 C1474.0 1423.6 1473.8 1434.3 1473.0 1437.6" fill="none" stroke="#f7f5f2" stroke-width="0.7" stroke-linecap="round" stroke-linejoin="round" /><path d="M1482.9 1430.0 C1484.1 1434.1 1488.0 1446.5 1490.3 1454.7 C1492.7 1463.0 1495.9 1475.3 1497.0 1479.4" fill="none" stroke="#d9d6d2" stroke-width="1.6" stroke-linecap="round" stroke-linejoin="round" /><path d="M1482.9 1430.0 C1484.1 1434.1 1488.0 1446.5 1490.3 1454.7 C1492.7 1463.0 1495.9 1475.3 1497.0 1479.4" fill="none" stroke="#f7f5f2" stroke-width="0.7" stroke-linecap="round" stroke-linejoin="round" /><path d="M1091.3 1368.4 C1096.2 1373.3 1116.8 1388.9 1121.0 1398.0 C1125.1 1407.1 1112.8 1417.4 1116.0 1422.7 C1119.2 1428.1 1136.0 1428.9 1140.0 1430.1" fill="none" stroke="#d9d6d2" stroke-width="1.6" stroke-linecap="round" stroke-linejoin="round" /><path d="M1091.3 1368.4 C1096.2 1373.3 1116.8 1388.9 1121.0 1398.0 C1125.1 1407.1 1112.8 1417.4 1116.0 1422.7 C1119.2 1428.1 1136.0 1428.9 1140.0 1430.1" fill="none" stroke="#f7f5f2" stroke-width="0.7" stroke-linecap="round" stroke-linejoin="round" /><path d="M410.0 1449.8 L419.9 1442.4" fill="none" stroke="#d9d6d2" stroke-width="1.6" stroke-linecap="round" stroke-linejoin="round" /><path d="M410.0 1449.8 L419.9 1442.4" fill="none" stroke="#f7f5f2" stroke-width="0.7" stroke-linecap="round" stroke-linejoin="round" /><path d="M770.0 1504.1 C774.9 1503.7 791.4 1501.3 799.7 1501.7 C807.9 1502.1 816.1 1505.8 819.4 1506.6" fill="none" stroke="#d9d6d2" stroke-width="1.6" stroke-linecap="round" stroke-linejoin="round" /><path d="M770.0 1504.1 C774.9 1503.7 791.4 1501.3 799.7 1501.7 C807.9 1502.1 816.1 1505.8 819.4 1506.6" fill="none" stroke="#f7f5f2" stroke-width="0.7" stroke-linecap="round" stroke-linejoin="round" /><path d="M802.1 1558.5 C805.0 1560.2 817.4 1563.5 819.4 1568.4 C821.5 1573.4 810.4 1582.4 814.5 1588.2 C818.6 1593.9 839.2 1600.5 844.1 1603.0" fill="none" stroke="#d9d6d2" stroke-width="1.6" stroke-linecap="round" stroke-linejoin="round" /><path d="M802.1 1558.5 C805.0 1560.2 817.4 1563.5 819.4 1568.4 C821.5 1573.4 810.4 1582.4 814.5 1588.2 C818.6 1593.9 839.2 1600.5 844.1 1603.0" fill="none" stroke="#f7f5f2" stroke-width="0.7" stroke-linecap="round" stroke-linejoin="round" /><path d="M1123.4 1227.5 L1122.2 1269.5 L1091.3 1323.9 L1034.5 1346.1 L1019.6 1398.0 L1007.3 1440.5" fill="none" stroke="#b7a8b7" stroke-width="1.1" stroke-linecap="round" stroke-linejoin="round" stroke-dasharray="6 2 1.500 2"/><path d="M1007.3 1430.0 C1006.0 1432.5 1008.1 1438.7 999.9 1444.8 C991.6 1451.0 973.9 1460.7 957.8 1467.1 C941.8 1473.5 921.6 1478.6 903.5 1483.1 C885.3 1487.7 858.2 1492.4 849.1 1494.3" fill="none" stroke="#b7a8b7" stroke-width="1.1" stroke-linecap="round" stroke-linejoin="round" stroke-dasharray="6 2 1.500 2"/><path d="M780.0 1504.1 C769.8 1505.4 735.3 1507.4 718.9 1511.6 C702.6 1515.7 696.3 1523.9 681.9 1528.9 C667.5 1533.8 643.6 1534.6 632.4 1541.2 C621.3 1547.8 623.4 1560.6 615.1 1568.4 C606.9 1576.2 599.1 1580.8 583.0 1588.2 C566.9 1595.6 531.9 1605.9 518.7 1612.9 C505.6 1619.9 515.5 1625.2 503.9 1630.2 C492.4 1635.2 458.6 1640.9 449.5 1643.0" fill="none" stroke="#b7a8b7" stroke-width="1.1" stroke-linecap="round" stroke-linejoin="round" stroke-dasharray="6 2 1.500 2"/><path d="M610.2 1229.9 L637.4 1286.8 L649.7 1306.6 L632.4 1348.6" fill="none" stroke="#c6bcc6" stroke-width="1.2" stroke-linecap="round" stroke-linejoin="round" stroke-dasharray="2 1.500"/><path d="M612.7 1333.7 C620.1 1332.1 644.8 1328.0 657.2 1323.9 C669.5 1319.7 680.2 1308.2 686.8 1309.0 C693.4 1309.9 698.4 1322.2 696.7 1328.8 C695.1 1335.4 685.6 1342.0 676.9 1348.6 C668.3 1355.2 650.2 1365.1 644.8 1368.4" fill="none" stroke="#d9c9a3" stroke-width="1.2" stroke-linecap="round" stroke-linejoin="round" stroke-dasharray="4 3"/><path d="M657.2 1348.6 C663.3 1346.9 683.9 1339.1 694.2 1338.7 C704.5 1338.3 714.8 1344.9 718.9 1346.1" fill="none" stroke="#d9c9a3" stroke-width="1.2" stroke-linecap="round" stroke-linejoin="round" stroke-dasharray="4 3"/><path d="M980.1 1331.3 C979.3 1333.7 977.2 1341.6 975.1 1346.1 C973.1 1350.6 969.0 1356.4 967.7 1358.5" fill="none" stroke="#d9c9a3" stroke-width="1.2" stroke-linecap="round" stroke-linejoin="round" stroke-dasharray="4 3"/><path d="M817.0 1440.0 C822.3 1437.1 838.0 1428.9 849.1 1422.7 C860.2 1416.5 873.0 1407.5 883.7 1403.0 C894.4 1398.4 908.4 1396.8 913.4 1395.5" fill="none" stroke="#d9c9a3" stroke-width="1.2" stroke-linecap="round" stroke-linejoin="round" stroke-dasharray="4 3"/><path d="M1203.6 1311.5 C1208.2 1314.4 1224.2 1323.5 1230.8 1328.8 C1237.4 1334.2 1235.3 1339.9 1243.2 1343.6 C1251.0 1347.3 1272.0 1349.8 1277.8 1351.1" fill="none" stroke="#d9c9a3" stroke-width="1.2" stroke-linecap="round" stroke-linejoin="round" stroke-dasharray="4 3"/><path d="M681.9 1462.1 C685.2 1466.7 703.3 1483.6 701.6 1489.3 C700.0 1495.1 679.4 1494.7 672.0 1496.7 C664.6 1498.8 658.4 1498.8 657.2 1501.7 C655.9 1504.6 667.0 1510.7 664.6 1514.0 C662.1 1517.3 646.0 1520.2 642.3 1521.4" fill="none" stroke="#d9c9a3" stroke-width="1.2" stroke-linecap="round" stroke-linejoin="round" stroke-dasharray="4 3"/><path d="M704.1 1454.7 C709.9 1458.0 726.1 1468.3 738.7 1474.5 C751.4 1480.7 773.1 1488.9 780.0 1491.8" fill="none" stroke="#d9c9a3" stroke-width="1.2" stroke-linecap="round" stroke-linejoin="round" stroke-dasharray="4 3"/><path d="M780.0 1493.0 C773.9 1494.5 755.9 1498.6 743.7 1501.7 C731.4 1504.8 712.8 1509.9 706.6 1511.6" fill="none" stroke="#d9c9a3" stroke-width="1.2" stroke-linecap="round" stroke-linejoin="round" stroke-dasharray="4 3"/><path d="M736.2 1553.6 C740.4 1552.3 753.7 1548.0 761.0 1546.2 C768.3 1544.3 776.8 1543.1 780.0 1542.5" fill="none" stroke="#d9c9a3" stroke-width="1.2" stroke-linecap="round" stroke-linejoin="round" stroke-dasharray="4 3"/><path d="M667.0 1617.8 C670.3 1619.9 681.0 1626.1 686.8 1630.2 C692.6 1634.3 699.2 1640.5 701.6 1642.6" fill="none" stroke="#d9c9a3" stroke-width="1.2" stroke-linecap="round" stroke-linejoin="round" stroke-dasharray="4 3"/><path d="M770.0 1444.8 C778.2 1443.2 805.8 1434.5 819.4 1434.9 C833.0 1435.4 846.2 1445.2 851.6 1447.3" fill="none" stroke="#d9c9a3" stroke-width="1.2" stroke-linecap="round" stroke-linejoin="round" stroke-dasharray="4 3"/><path d="M928.2 1439.9 C918.3 1444.0 882.9 1460.1 868.9 1464.6 C854.9 1469.1 848.3 1466.7 844.1 1467.1" fill="none" stroke="#d9c9a3" stroke-width="1.2" stroke-linecap="round" stroke-linejoin="round" stroke-dasharray="4 3"/><path d="M943.0 1496.7 C953.3 1495.9 986.3 1494.7 1004.8 1491.8 C1023.3 1488.9 1037.8 1480.7 1054.2 1479.4 C1070.7 1478.2 1089.4 1481.5 1103.7 1484.4 C1118.0 1487.3 1133.9 1494.7 1140.0 1496.7" fill="none" stroke="#d9c9a3" stroke-width="1.2" stroke-linecap="round" stroke-linejoin="round" stroke-dasharray="4 3"/><path d="M794.7 1612.9 C798.8 1610.4 810.0 1601.8 819.4 1598.1 C828.9 1594.4 846.2 1591.9 851.6 1590.7" fill="none" stroke="#d9c9a3" stroke-width="1.2" stroke-linecap="round" stroke-linejoin="round" stroke-dasharray="4 3"/><path d="M1127.0 1496.7 L1156.7 1502.9" fill="none" stroke="#d9c9a3" stroke-width="1.2" stroke-linecap="round" stroke-linejoin="round" stroke-dasharray="4 3"/><path d="M1127.0 1546.2 C1131.1 1546.6 1143.5 1546.2 1151.7 1548.6 C1160.0 1551.1 1172.3 1558.9 1176.4 1561.0" fill="none" stroke="#d9c9a3" stroke-width="1.2" stroke-linecap="round" stroke-linejoin="round" stroke-dasharray="4 3"/><path d="M1270.4 1588.2 C1275.3 1589.0 1291.4 1591.5 1300.0 1593.1 C1308.7 1594.8 1318.5 1597.2 1322.3 1598.1" fill="none" stroke="#d9c9a3" stroke-width="1.2" stroke-linecap="round" stroke-linejoin="round" stroke-dasharray="4 3"/><path d="M1098.7 1523.9 C1101.6 1524.7 1109.1 1525.2 1116.0 1528.9 C1122.9 1532.6 1136.0 1543.3 1140.0 1546.2" fill="none" stroke="#d9c9a3" stroke-width="1.2" stroke-linecap="round" stroke-linejoin="round" stroke-dasharray="4 3"/><path d="M1272.8 1617.8 C1274.9 1621.1 1280.6 1633.5 1285.2 1637.6 C1289.7 1641.7 1297.5 1641.7 1300.0 1642.6" fill="none" stroke="#d9c9a3" stroke-width="1.2" stroke-linecap="round" stroke-linejoin="round" stroke-dasharray="4 3"/><path d="M780.0 1336.2 C776.0 1337.5 764.1 1340.8 756.0 1343.6 C747.9 1346.5 737.5 1349.8 731.3 1353.5 C725.1 1357.2 723.9 1361.8 718.9 1365.9 C714.0 1370.0 707.0 1375.1 701.6 1378.2 C696.3 1381.3 689.3 1383.4 686.8 1384.4" fill="none" stroke="#cfccc6" stroke-width="3.6" stroke-linecap="round" stroke-linejoin="round" /><path d="M780.0 1336.2 C776.0 1337.5 764.1 1340.8 756.0 1343.6 C747.9 1346.5 737.5 1349.8 731.3 1353.5 C725.1 1357.2 723.9 1361.8 718.9 1365.9 C714.0 1370.0 707.0 1375.1 701.6 1378.2 C696.3 1381.3 689.3 1383.4 686.8 1384.4" fill="none" stroke="#fff" stroke-width="2.2" stroke-linecap="round" stroke-linejoin="round" /><path d="M770.0 1336.2 C774.1 1335.0 787.3 1332.1 794.7 1328.8 C802.1 1325.5 807.1 1320.2 814.5 1316.4 C821.9 1312.7 830.6 1309.7 839.2 1306.6 C847.9 1303.5 861.4 1298.9 866.4 1297.9 C871.3 1296.9 870.5 1298.7 868.9 1300.4 C867.2 1302.0 854.4 1305.3 856.5 1307.8 C858.6 1310.3 882.5 1312.1 881.2 1315.2 C880.0 1318.3 855.3 1321.6 849.1 1326.3 C842.9 1331.1 846.2 1340.1 844.1 1343.6 C842.1 1347.1 835.5 1348.2 836.7 1347.3 C838.0 1346.5 845.4 1341.8 851.6 1338.7 C857.7 1335.6 866.0 1331.7 873.8 1328.8 C881.6 1325.9 889.5 1322.8 898.5 1321.4 C907.6 1319.9 922.4 1318.5 928.2 1320.2 C933.9 1321.8 933.1 1328.8 933.1 1331.3 C933.1 1333.7 926.5 1334.6 928.2 1335.0 C929.8 1335.4 936.4 1334.8 943.0 1333.7 C949.6 1332.7 961.5 1331.7 967.7 1328.8 C973.9 1325.9 979.3 1319.7 980.1 1316.4 C980.9 1313.2 976.4 1309.7 972.7 1309.0 C969.0 1308.4 962.4 1311.9 957.8 1312.7 C953.3 1313.6 947.7 1315.4 945.5 1314.0 C943.2 1312.5 943.0 1307.2 944.2 1304.1 C945.5 1301.0 946.5 1298.3 952.9 1295.4 C959.3 1292.6 976.8 1289.1 982.6 1286.8 C988.3 1284.5 984.6 1282.5 987.5 1281.8 C990.4 1281.2 996.6 1281.4 999.9 1283.1 C1003.2 1284.7 1004.0 1288.6 1007.3 1291.7 C1010.6 1294.8 1015.5 1298.3 1019.6 1301.6 C1023.7 1304.9 1028.7 1308.4 1032.0 1311.5 C1035.3 1314.6 1035.3 1317.7 1039.4 1320.2 C1043.5 1322.6 1052.2 1323.7 1056.7 1326.3 C1061.2 1329.0 1063.7 1333.7 1066.6 1336.2 C1069.5 1338.7 1072.4 1341.6 1074.0 1341.2 C1075.7 1340.8 1073.6 1336.2 1076.5 1333.7 C1079.4 1331.3 1084.7 1328.8 1091.3 1326.3 C1097.9 1323.9 1107.9 1321.2 1116.0 1318.9 C1124.1 1316.7 1136.0 1313.8 1140.0 1312.7" fill="none" stroke="#cfccc6" stroke-width="3.8" stroke-linecap="round" stroke-linejoin="round" /><path d="M770.0 1336.2 C774.1 1335.0 787.3 1332.1 794.7 1328.8 C802.1 1325.5 807.1 1320.2 814.5 1316.4 C821.9 1312.7 830.6 1309.7 839.2 1306.6 C847.9 1303.5 861.4 1298.9 866.4 1297.9 C871.3 1296.9 870.5 1298.7 868.9 1300.4 C867.2 1302.0 854.4 1305.3 856.5 1307.8 C858.6 1310.3 882.5 1312.1 881.2 1315.2 C880.0 1318.3 855.3 1321.6 849.1 1326.3 C842.9 1331.1 846.2 1340.1 844.1 1343.6 C842.1 1347.1 835.5 1348.2 836.7 1347.3 C838.0 1346.5 845.4 1341.8 851.6 1338.7 C857.7 1335.6 866.0 1331.7 873.8 1328.8 C881.6 1325.9 889.5 1322.8 898.5 1321.4 C907.6 1319.9 922.4 1318.5 928.2 1320.2 C933.9 1321.8 933.1 1328.8 933.1 1331.3 C933.1 1333.7 926.5 1334.6 928.2 1335.0 C929.8 1335.4 936.4 1334.8 943.0 1333.7 C949.6 1332.7 961.5 1331.7 967.7 1328.8 C973.9 1325.9 979.3 1319.7 980.1 1316.4 C980.9 1313.2 976.4 1309.7 972.7 1309.0 C969.0 1308.4 962.4 1311.9 957.8 1312.7 C953.3 1313.6 947.7 1315.4 945.5 1314.0 C943.2 1312.5 943.0 1307.2 944.2 1304.1 C945.5 1301.0 946.5 1298.3 952.9 1295.4 C959.3 1292.6 976.8 1289.1 982.6 1286.8 C988.3 1284.5 984.6 1282.5 987.5 1281.8 C990.4 1281.2 996.6 1281.4 999.9 1283.1 C1003.2 1284.7 1004.0 1288.6 1007.3 1291.7 C1010.6 1294.8 1015.5 1298.3 1019.6 1301.6 C1023.7 1304.9 1028.7 1308.4 1032.0 1311.5 C1035.3 1314.6 1035.3 1317.7 1039.4 1320.2 C1043.5 1322.6 1052.2 1323.7 1056.7 1326.3 C1061.2 1329.0 1063.7 1333.7 1066.6 1336.2 C1069.5 1338.7 1072.4 1341.6 1074.0 1341.2 C1075.7 1340.8 1073.6 1336.2 1076.5 1333.7 C1079.4 1331.3 1084.7 1328.8 1091.3 1326.3 C1097.9 1323.9 1107.9 1321.2 1116.0 1318.9 C1124.1 1316.7 1136.0 1313.8 1140.0 1312.7" fill="none" stroke="#fff" stroke-width="2.4" stroke-linecap="round" stroke-linejoin="round" /><path d="M1127.0 1312.7 C1130.3 1312.9 1138.5 1313.4 1146.8 1314.0 C1155.0 1314.6 1169.0 1316.7 1176.4 1316.4 C1183.8 1316.2 1187.1 1314.4 1191.3 1312.7 C1195.4 1311.1 1199.1 1308.8 1201.1 1306.6 C1203.2 1304.3 1197.9 1300.8 1203.6 1299.1 C1209.4 1297.5 1229.8 1296.3 1235.7 1296.7 C1241.7 1297.1 1238.2 1301.6 1239.5 1301.6 C1240.7 1301.6 1238.8 1297.3 1243.2 1296.7 C1247.5 1296.1 1259.6 1298.5 1265.4 1297.9 C1271.2 1297.3 1272.8 1293.2 1277.8 1293.0 C1282.7 1292.8 1288.9 1297.3 1295.1 1296.7 C1301.2 1296.1 1307.8 1291.3 1314.8 1289.3 C1321.8 1287.2 1330.9 1284.7 1337.1 1284.3 C1343.3 1283.9 1347.4 1286.6 1351.9 1286.8 C1356.4 1287.0 1358.5 1284.3 1364.3 1285.6 C1370.0 1286.8 1379.5 1293.2 1386.5 1294.2 C1393.5 1295.2 1400.5 1293.4 1406.3 1291.7 C1412.1 1290.1 1414.9 1285.3 1421.1 1284.3 C1427.3 1283.3 1437.2 1283.5 1443.4 1285.6 C1449.5 1287.6 1456.1 1290.7 1458.2 1296.7 C1460.3 1302.6 1454.9 1315.6 1455.7 1321.4 C1456.5 1327.2 1459.8 1328.0 1463.1 1331.3 C1466.4 1334.6 1475.1 1338.3 1475.5 1341.2 C1475.9 1344.0 1464.4 1344.9 1465.6 1348.6 C1466.8 1352.3 1477.7 1359.5 1482.9 1363.4 C1488.1 1367.3 1494.6 1370.6 1497.0 1372.1" fill="none" stroke="#cfccc6" stroke-width="3.8" stroke-linecap="round" stroke-linejoin="round" /><path d="M1127.0 1312.7 C1130.3 1312.9 1138.5 1313.4 1146.8 1314.0 C1155.0 1314.6 1169.0 1316.7 1176.4 1316.4 C1183.8 1316.2 1187.1 1314.4 1191.3 1312.7 C1195.4 1311.1 1199.1 1308.8 1201.1 1306.6 C1203.2 1304.3 1197.9 1300.8 1203.6 1299.1 C1209.4 1297.5 1229.8 1296.3 1235.7 1296.7 C1241.7 1297.1 1238.2 1301.6 1239.5 1301.6 C1240.7 1301.6 1238.8 1297.3 1243.2 1296.7 C1247.5 1296.1 1259.6 1298.5 1265.4 1297.9 C1271.2 1297.3 1272.8 1293.2 1277.8 1293.0 C1282.7 1292.8 1288.9 1297.3 1295.1 1296.7 C1301.2 1296.1 1307.8 1291.3 1314.8 1289.3 C1321.8 1287.2 1330.9 1284.7 1337.1 1284.3 C1343.3 1283.9 1347.4 1286.6 1351.9 1286.8 C1356.4 1287.0 1358.5 1284.3 1364.3 1285.6 C1370.0 1286.8 1379.5 1293.2 1386.5 1294.2 C1393.5 1295.2 1400.5 1293.4 1406.3 1291.7 C1412.1 1290.1 1414.9 1285.3 1421.1 1284.3 C1427.3 1283.3 1437.2 1283.5 1443.4 1285.6 C1449.5 1287.6 1456.1 1290.7 1458.2 1296.7 C1460.3 1302.6 1454.9 1315.6 1455.7 1321.4 C1456.5 1327.2 1459.8 1328.0 1463.1 1331.3 C1466.4 1334.6 1475.1 1338.3 1475.5 1341.2 C1475.9 1344.0 1464.4 1344.9 1465.6 1348.6 C1466.8 1352.3 1477.7 1359.5 1482.9 1363.4 C1488.1 1367.3 1494.6 1370.6 1497.0 1372.1" fill="none" stroke="#fff" stroke-width="2.4" stroke-linecap="round" stroke-linejoin="round" /><path d="M414.9 1257.1 C419.9 1258.0 435.1 1261.0 444.6 1262.1 C454.1 1263.1 465.6 1263.7 471.8 1263.3 C478.0 1262.9 475.5 1260.6 481.7 1259.6 C487.9 1258.6 501.0 1258.8 508.9 1257.1 C516.7 1255.5 523.7 1249.7 528.6 1249.7 C533.6 1249.7 536.1 1253.0 538.5 1257.1 C541.0 1261.2 538.5 1267.4 543.5 1274.4 C548.4 1281.4 563.6 1290.9 568.2 1299.1 C572.7 1307.4 568.2 1316.9 570.7 1323.9 C573.1 1330.9 576.8 1335.8 583.0 1341.2 C589.2 1346.5 599.5 1351.9 607.7 1356.0 C616.0 1360.1 625.0 1361.3 632.4 1365.9 C639.9 1370.4 644.0 1379.7 652.2 1383.2 C660.5 1386.7 672.8 1386.1 681.9 1386.9 C690.9 1387.7 700.0 1385.4 706.6 1388.1 C713.2 1390.8 717.7 1397.6 721.4 1403.0 C725.1 1408.3 723.9 1417.0 728.8 1420.3 C733.8 1423.6 746.1 1419.8 751.1 1422.7 C756.0 1425.6 754.5 1432.4 758.5 1437.6 C762.5 1442.7 769.3 1448.6 774.9 1453.5 C780.6 1458.4 786.1 1462.7 792.2 1467.1 C798.4 1471.4 804.2 1476.3 812.0 1479.4 C819.8 1482.5 833.0 1483.1 839.2 1485.6 C845.4 1488.1 848.3 1490.3 849.1 1494.3 C849.9 1498.2 846.2 1505.0 844.1 1509.1 C842.1 1513.2 837.1 1514.9 836.7 1519.0 C836.3 1523.1 838.8 1529.9 841.7 1533.8 C844.6 1537.7 849.5 1540.2 854.0 1542.5 C858.6 1544.7 865.2 1543.9 868.9 1547.4 C872.6 1550.9 873.4 1559.3 876.3 1563.5 C879.2 1567.6 881.6 1569.6 886.2 1572.1 C890.7 1574.6 896.5 1574.8 903.5 1578.3 C910.5 1581.8 920.8 1589.0 928.2 1593.1 C935.6 1597.2 943.8 1598.9 948.0 1603.0 C952.1 1607.1 951.7 1612.5 952.9 1617.8 C954.1 1623.2 954.5 1630.5 955.4 1635.1 C956.2 1639.8 957.4 1643.8 957.8 1645.5" fill="none" stroke="#d8d98a" stroke-width="4.6" stroke-linecap="round" stroke-linejoin="round" /><path d="M841.7 1527.6 C842.5 1526.6 842.1 1522.9 846.6 1521.4 C851.2 1520.0 864.3 1520.2 868.9 1519.0 C873.4 1517.7 873.0 1514.9 873.8 1514.0" fill="none" stroke="#d8d98a" stroke-width="3.6" stroke-linecap="round" stroke-linejoin="round" /><path d="M955.4 1635.1 C957.0 1633.5 960.3 1627.5 965.3 1625.3 C970.2 1623.0 981.7 1622.2 985.0 1621.5" fill="none" stroke="#d8d98a" stroke-width="4" stroke-linecap="round" stroke-linejoin="round" /><path d="M414.9 1257.1 C419.9 1258.0 435.1 1261.0 444.6 1262.1 C454.1 1263.1 465.6 1263.7 471.8 1263.3 C478.0 1262.9 475.5 1260.6 481.7 1259.6 C487.9 1258.6 501.0 1258.8 508.9 1257.1 C516.7 1255.5 523.7 1249.7 528.6 1249.7 C533.6 1249.7 536.1 1253.0 538.5 1257.1 C541.0 1261.2 538.5 1267.4 543.5 1274.4 C548.4 1281.4 563.6 1290.9 568.2 1299.1 C572.7 1307.4 568.2 1316.9 570.7 1323.9 C573.1 1330.9 576.8 1335.8 583.0 1341.2 C589.2 1346.5 599.5 1351.9 607.7 1356.0 C616.0 1360.1 625.0 1361.3 632.4 1365.9 C639.9 1370.4 644.0 1379.7 652.2 1383.2 C660.5 1386.7 672.8 1386.1 681.9 1386.9 C690.9 1387.7 700.0 1385.4 706.6 1388.1 C713.2 1390.8 717.7 1397.6 721.4 1403.0 C725.1 1408.3 723.9 1417.0 728.8 1420.3 C733.8 1423.6 746.1 1419.8 751.1 1422.7 C756.0 1425.6 754.5 1432.4 758.5 1437.6 C762.5 1442.7 769.3 1448.6 774.9 1453.5 C780.6 1458.4 786.1 1462.7 792.2 1467.1 C798.4 1471.4 804.2 1476.3 812.0 1479.4 C819.8 1482.5 833.0 1483.1 839.2 1485.6 C845.4 1488.1 848.3 1490.3 849.1 1494.3 C849.9 1498.2 846.2 1505.0 844.1 1509.1 C842.1 1513.2 837.1 1514.9 836.7 1519.0 C836.3 1523.1 838.8 1529.9 841.7 1533.8 C844.6 1537.7 849.5 1540.2 854.0 1542.5 C858.6 1544.7 865.2 1543.9 868.9 1547.4 C872.6 1550.9 873.4 1559.3 876.3 1563.5 C879.2 1567.6 881.6 1569.6 886.2 1572.1 C890.7 1574.6 896.5 1574.8 903.5 1578.3 C910.5 1581.8 920.8 1589.0 928.2 1593.1 C935.6 1597.2 943.8 1598.9 948.0 1603.0 C952.1 1607.1 951.7 1612.5 952.9 1617.8 C954.1 1623.2 954.5 1630.5 955.4 1635.1 C956.2 1639.8 957.4 1643.8 957.8 1645.5" fill="none" stroke="#f7fabf" stroke-width="3.2" stroke-linecap="round" stroke-linejoin="round" /><path d="M841.7 1527.6 C842.5 1526.6 842.1 1522.9 846.6 1521.4 C851.2 1520.0 864.3 1520.2 868.9 1519.0 C873.4 1517.7 873.0 1514.9 873.8 1514.0" fill="none" stroke="#f7fabf" stroke-width="2.3" stroke-linecap="round" stroke-linejoin="round" /><path d="M955.4 1635.1 C957.0 1633.5 960.3 1627.5 965.3 1625.3 C970.2 1623.0 981.7 1622.2 985.0 1621.5" fill="none" stroke="#f7fabf" stroke-width="2.6" stroke-linecap="round" stroke-linejoin="round" /><path d="M516.3 1249.7 C517.9 1248.1 525.3 1243.1 526.2 1239.8 C527.0 1236.5 522.0 1231.6 521.2 1229.9" fill="none" stroke="#d5d2cc" stroke-width="3.0" stroke-linecap="round" stroke-linejoin="round" /><path d="M516.3 1249.7 C517.9 1248.1 525.3 1243.1 526.2 1239.8 C527.0 1236.5 522.0 1231.6 521.2 1229.9" fill="none" stroke="#fff" stroke-width="1.6" stroke-linecap="round" stroke-linejoin="round" /><path d="M508.9 1272.0 C510.5 1274.0 517.5 1279.8 518.7 1284.3 C520.0 1288.8 515.0 1293.8 516.3 1299.1 C517.5 1304.5 524.5 1313.6 526.2 1316.4" fill="none" stroke="#d5d2cc" stroke-width="3.0" stroke-linecap="round" stroke-linejoin="round" /><path d="M508.9 1272.0 C510.5 1274.0 517.5 1279.8 518.7 1284.3 C520.0 1288.8 515.0 1293.8 516.3 1299.1 C517.5 1304.5 524.5 1313.6 526.2 1316.4" fill="none" stroke="#fff" stroke-width="1.6" stroke-linecap="round" stroke-linejoin="round" /><path d="M548.4 1306.6 C550.1 1309.4 553.4 1318.9 558.3 1323.9 C563.2 1328.8 571.5 1332.1 578.1 1336.2 C584.7 1340.3 594.5 1346.5 597.8 1348.6" fill="none" stroke="#d5d2cc" stroke-width="3.0" stroke-linecap="round" stroke-linejoin="round" /><path d="M548.4 1306.6 C550.1 1309.4 553.4 1318.9 558.3 1323.9 C563.2 1328.8 571.5 1332.1 578.1 1336.2 C584.7 1340.3 594.5 1346.5 597.8 1348.6" fill="none" stroke="#fff" stroke-width="1.6" stroke-linecap="round" stroke-linejoin="round" /><path d="M558.3 1274.4 C560.4 1276.1 566.5 1280.2 570.7 1284.3 C574.8 1288.4 581.0 1296.7 583.0 1299.1" fill="none" stroke="#d5d2cc" stroke-width="3.0" stroke-linecap="round" stroke-linejoin="round" /><path d="M558.3 1274.4 C560.4 1276.1 566.5 1280.2 570.7 1284.3 C574.8 1288.4 581.0 1296.7 583.0 1299.1" fill="none" stroke="#fff" stroke-width="1.6" stroke-linecap="round" stroke-linejoin="round" /><path d="M491.6 1267.0 C492.8 1268.3 495.3 1272.6 499.0 1274.4 C502.7 1276.3 511.3 1277.5 513.8 1278.1" fill="none" stroke="#d5d2cc" stroke-width="3.0" stroke-linecap="round" stroke-linejoin="round" /><path d="M491.6 1267.0 C492.8 1268.3 495.3 1272.6 499.0 1274.4 C502.7 1276.3 511.3 1277.5 513.8 1278.1" fill="none" stroke="#fff" stroke-width="1.6" stroke-linecap="round" stroke-linejoin="round" /><path d="M548.4 1274.4 C550.1 1276.9 557.1 1283.9 558.3 1289.3 C559.5 1294.6 556.2 1303.7 555.8 1306.6" fill="none" stroke="#d5d2cc" stroke-width="3.0" stroke-linecap="round" stroke-linejoin="round" /><path d="M548.4 1274.4 C550.1 1276.9 557.1 1283.9 558.3 1289.3 C559.5 1294.6 556.2 1303.7 555.8 1306.6" fill="none" stroke="#fff" stroke-width="1.6" stroke-linecap="round" stroke-linejoin="round" /><path d="M573.1 1306.6 C575.6 1307.4 585.1 1307.8 588.0 1311.5 C590.8 1315.2 590.0 1325.9 590.4 1328.8" fill="none" stroke="#d5d2cc" stroke-width="3.0" stroke-linecap="round" stroke-linejoin="round" /><path d="M573.1 1306.6 C575.6 1307.4 585.1 1307.8 588.0 1311.5 C590.8 1315.2 590.0 1325.9 590.4 1328.8" fill="none" stroke="#fff" stroke-width="1.6" stroke-linecap="round" stroke-linejoin="round" /><path d="M528.6 1318.9 C531.9 1320.6 541.8 1326.3 548.4 1328.8 C555.0 1331.3 564.9 1332.9 568.2 1333.7" fill="none" stroke="#d5d2cc" stroke-width="3.0" stroke-linecap="round" stroke-linejoin="round" /><path d="M528.6 1318.9 C531.9 1320.6 541.8 1326.3 548.4 1328.8 C555.0 1331.3 564.9 1332.9 568.2 1333.7" fill="none" stroke="#fff" stroke-width="1.6" stroke-linecap="round" stroke-linejoin="round" /><path d="M583.0 1299.1 C585.5 1300.0 593.7 1300.0 597.8 1304.1 C602.0 1308.2 606.5 1317.7 607.7 1323.9 C609.0 1330.0 605.7 1338.3 605.3 1341.2" fill="none" stroke="#d5d2cc" stroke-width="3.0" stroke-linecap="round" stroke-linejoin="round" /><path d="M583.0 1299.1 C585.5 1300.0 593.7 1300.0 597.8 1304.1 C602.0 1308.2 606.5 1317.7 607.7 1323.9 C609.0 1330.0 605.7 1338.3 605.3 1341.2" fill="none" stroke="#fff" stroke-width="1.6" stroke-linecap="round" stroke-linejoin="round" /><path d="M529.9 1343.6 L545.9 1343.1 L558.3 1351.1 L583.0 1358.5 L612.7 1365.9 L632.4 1370.8 L639.9 1378.2 L642.3 1385.7 L662.1 1385.7 L672.0 1390.6 L694.2 1391.8 L709.1 1398.0 L716.5 1410.4 L723.9 1427.7 L741.2 1430.1 L748.6 1437.6 L770.0 1457.2 L784.8 1464.6 L799.7 1475.7 L819.4 1483.1 L839.2 1488.1 L846.6 1495.5 L841.7 1504.1 L835.5 1511.6 L833.0 1523.9 L836.7 1531.3 L831.8 1533.8 L835.5 1540.0 L851.6 1546.2 L863.9 1551.1 L868.9 1563.5 L876.3 1572.1 L886.2 1574.6 L876.3 1576.3 L866.4 1572.1 L860.2 1558.5 L851.6 1551.1 L836.7 1544.9 L828.1 1535.0 L819.4 1532.6 L828.1 1530.1 L825.6 1519.0 L823.1 1509.1 L829.3 1501.7 L836.7 1496.7 L833.0 1491.8 L817.0 1488.1 L797.2 1483.1 L782.4 1472.0 L770.0 1463.4 L741.2 1440.5 L721.4 1435.1 L711.5 1415.3 L706.6 1400.5 L689.3 1395.5 L667.0 1395.5 L647.3 1393.1 L632.4 1380.7 L607.7 1370.8 L583.0 1363.4 L558.3 1356.0 L545.9 1351.1 L531.1 1346.1Z" fill="#c9a77f" stroke="#6e5a44" stroke-width="1.300" stroke-linejoin="round"/><rect x="909.6" y="1581.3" width="44" height="11" rx="1.500" fill="#f4f3cf" stroke="#d8d7a8" stroke-width=".8"/><text x="453.5" y="1305.0" font-size="9.5" font-weight="normal" textLength="55.0" lengthAdjust="spacingAndGlyphs" fill="#555" stroke="#f6f4f0" stroke-width="2.200" paint-order="stroke" stroke-linejoin="round">Sharova</text><text x="737.8" y="1349.5" font-size="9.5" font-weight="normal" textLength="41.0" lengthAdjust="spacingAndGlyphs" fill="#555" stroke="#f6f4f0" stroke-width="2.200" paint-order="stroke" stroke-linejoin="round">Zogas</text><text x="624.5" y="1428.5" font-size="9.5" font-weight="normal" textLength="57.0" lengthAdjust="spacingAndGlyphs" fill="#555" stroke="#f6f4f0" stroke-width="2.200" paint-order="stroke" stroke-linejoin="round">Grepcka</text><text x="837.7" y="1466.5" font-size="9.5" font-weight="normal" textLength="50.0" lengthAdjust="spacingAndGlyphs" fill="#555" stroke="#f6f4f0" stroke-width="2.200" paint-order="stroke" stroke-linejoin="round">Dhorës</text><text x="871.4" y="1517.8" font-size="9.5" font-weight="normal" textLength="60.6" lengthAdjust="spacingAndGlyphs" fill="#555" stroke="#f6f4f0" stroke-width="2.200" paint-order="stroke" stroke-linejoin="round">Germenj</text><text x="770.4" y="1559.0" font-size="9.5" font-weight="normal" textLength="67.3" lengthAdjust="spacingAndGlyphs" fill="#555" stroke="#f6f4f0" stroke-width="2.200" paint-order="stroke" stroke-linejoin="round">Blezënckë</text><text x="913.0" y="1589.4" font-size="8.5" font-weight="normal" textLength="37.0" lengthAdjust="spacingAndGlyphs" fill="#666" stroke="#f6f4f0" stroke-width="2.200" paint-order="stroke" stroke-linejoin="round">SH72</text><text x="414.0" y="1550.5" font-size="9.5" font-weight="normal" textLength="12.0" lengthAdjust="spacingAndGlyphs" fill="#555" stroke="#f6f4f0" stroke-width="2.200" paint-order="stroke" stroke-linejoin="round">cë</text><text x="927.5" y="1330.5" font-size="9.5" font-weight="normal" textLength="47.0" lengthAdjust="spacingAndGlyphs" fill="#555" stroke="#f6f4f0" stroke-width="2.200" paint-order="stroke" stroke-linejoin="round">Polenë</text><text x="1091.4" y="1363.0" font-size="9.5" font-weight="normal" textLength="32.8" lengthAdjust="spacingAndGlyphs" fill="#555" stroke="#f6f4f0" stroke-width="2.200" paint-order="stroke" stroke-linejoin="round">Qafë</text><text x="1087.7" y="1416.0" font-size="9.5" font-weight="normal" textLength="51.3" lengthAdjust="spacingAndGlyphs" fill="#555" stroke="#f6f4f0" stroke-width="2.200" paint-order="stroke" stroke-linejoin="round">Visockë</text><text x="1416.3" y="1438.5" font-size="9.5" font-weight="normal" textLength="65.1" lengthAdjust="spacingAndGlyphs" fill="#555" stroke="#f6f4f0" stroke-width="2.200" paint-order="stroke" stroke-linejoin="round">Gjergjovë</text><text x="1048.0" y="1531.0" font-size="9.5" font-weight="normal" textLength="74.3" lengthAdjust="spacingAndGlyphs" fill="#555" stroke="#f6f4f0" stroke-width="2.200" paint-order="stroke" stroke-linejoin="round">Zabërzan i</text><text x="1079.5" y="1541.5" font-size="9.5" font-weight="normal" textLength="11.5" lengthAdjust="spacingAndGlyphs" fill="#555" stroke="#f6f4f0" stroke-width="2.200" paint-order="stroke" stroke-linejoin="round">Ri</text><text x="1153.2" y="1571.5" font-size="9.5" font-weight="normal" textLength="74.4" lengthAdjust="spacingAndGlyphs" fill="#555" stroke="#f6f4f0" stroke-width="2.200" paint-order="stroke" stroke-linejoin="round">Koprenckë</text><path d="M501.4 1345.6 C503.9 1345.2 510.9 1343.1 516.3 1343.1 C521.6 1343.2 529.9 1344.6 533.6 1346.1 C537.3 1347.6 535.6 1351.1 538.5 1352.3 C541.4 1353.4 548.8 1352.9 550.9 1353.0" fill="none" stroke="#35c36b" stroke-width="2.1" stroke-linecap="round" stroke-linejoin="round" /><path d="M545.9 1338.2 C548.8 1339.7 555.4 1344.4 563.2 1347.3 C571.1 1350.3 585.5 1354.1 592.9 1356.0 C600.3 1357.8 605.3 1358.1 607.7 1358.5" fill="none" stroke="#35c36b" stroke-width="2.1" stroke-linecap="round" stroke-linejoin="round" /><path d="M615.1 1377.0 C616.8 1378.0 621.7 1380.8 625.0 1383.2 C628.3 1385.5 631.2 1389.4 634.9 1391.1 C638.6 1392.7 645.2 1392.7 647.3 1393.1" fill="none" stroke="#35c36b" stroke-width="2.1" stroke-linecap="round" stroke-linejoin="round" /><path d="M476.7 1229.9 C479.2 1232.0 487.0 1239.0 491.6 1242.3 C496.1 1245.6 501.9 1248.5 503.9 1249.7" fill="none" stroke="#35c36b" stroke-width="2.1" stroke-linecap="round" stroke-linejoin="round" /><path d="M521.2 1275.7 L528.6 1276.9" fill="none" stroke="#35c36b" stroke-width="2.1" stroke-linecap="round" stroke-linejoin="round" /><path d="M526.2 1283.1 L532.3 1280.6" fill="none" stroke="#35c36b" stroke-width="2.1" stroke-linecap="round" stroke-linejoin="round" /><path d="M547.2 1288.0 L550.9 1289.8" fill="none" stroke="#35c36b" stroke-width="2.1" stroke-linecap="round" stroke-linejoin="round" /><path d="M554.6 1296.7 L558.3 1298.7" fill="none" stroke="#35c36b" stroke-width="2.1" stroke-linecap="round" stroke-linejoin="round" /><path d="M523.7 1311.5 L533.6 1308.5" fill="none" stroke="#35c36b" stroke-width="2.1" stroke-linecap="round" stroke-linejoin="round" /><path d="M683.1 1420.3 L690.5 1424.0" fill="none" stroke="#35c36b" stroke-width="2.1" stroke-linecap="round" stroke-linejoin="round" /><path d="M586.7 1365.4 L590.4 1367.1" fill="none" stroke="#35c36b" stroke-width="2.1" stroke-linecap="round" stroke-linejoin="round" /><path d="M516.3 1619.1 C518.3 1619.3 524.1 1618.9 528.6 1620.3 C533.2 1621.8 540.2 1624.4 543.5 1627.7 C546.8 1631.0 547.0 1637.1 548.4 1640.1 C549.9 1643.0 551.5 1644.6 552.1 1645.5" fill="none" stroke="#35c36b" stroke-width="2.1" stroke-linecap="round" stroke-linejoin="round" /><path d="M518.7 1620.3 L522.5 1627.7" fill="none" stroke="#35c36b" stroke-width="2.1" stroke-linecap="round" stroke-linejoin="round" /><path d="M548.4 1635.1 L555.8 1633.9" fill="none" stroke="#35c36b" stroke-width="2.1" stroke-linecap="round" stroke-linejoin="round" /><path d="M563.2 1645.5 C565.1 1643.3 569.4 1633.1 574.4 1632.2 C579.3 1631.3 587.3 1637.9 592.9 1640.1 C598.5 1642.3 605.3 1644.6 607.7 1645.5" fill="none" stroke="#35c36b" stroke-width="2.1" stroke-linecap="round" stroke-linejoin="round" /><path d="M770.0 1467.1 C771.6 1468.1 776.0 1471.8 779.9 1473.3 C783.8 1474.7 791.2 1475.3 793.5 1475.7" fill="none" stroke="#35c36b" stroke-width="2.1" stroke-linecap="round" stroke-linejoin="round" /><path d="M807.1 1488.1 C809.5 1487.7 816.8 1485.6 821.9 1485.6 C827.1 1485.6 834.3 1487.1 838.0 1488.1 C841.7 1489.1 843.1 1491.2 844.1 1491.8" fill="none" stroke="#35c36b" stroke-width="2.1" stroke-linecap="round" stroke-linejoin="round" /><path d="M808.3 1504.1 C810.2 1504.6 815.9 1505.9 819.4 1506.6 C822.9 1507.4 827.7 1508.3 829.3 1508.6" fill="none" stroke="#35c36b" stroke-width="2.1" stroke-linecap="round" stroke-linejoin="round" /><path d="M861.4 1551.1 C862.5 1552.8 865.6 1557.7 867.6 1561.0 C869.7 1564.3 872.8 1569.2 873.8 1570.9" fill="none" stroke="#35c36b" stroke-width="2.1" stroke-linecap="round" stroke-linejoin="round" /><path d="M856.5 1577.1 C858.6 1577.5 864.5 1579.0 868.9 1579.5 C873.2 1580.1 880.2 1580.1 882.5 1580.3" fill="none" stroke="#35c36b" stroke-width="2.1" stroke-linecap="round" stroke-linejoin="round" /><path d="M888.6 1574.6 C890.3 1574.8 895.7 1574.8 898.5 1575.8 C901.3 1576.9 904.3 1579.9 905.4 1580.8" fill="none" stroke="#35c36b" stroke-width="2.1" stroke-linecap="round" stroke-linejoin="round" /><path d="M954.1 1627.7 L960.3 1636.4" fill="none" stroke="#35c36b" stroke-width="2.1" stroke-linecap="round" stroke-linejoin="round" /><path d="M935.6 1638.8 C937.2 1639.5 942.2 1642.3 945.5 1642.6 C948.8 1642.8 953.7 1640.5 955.4 1640.1" fill="none" stroke="#35c36b" stroke-width="2.1" stroke-linecap="round" stroke-linejoin="round" /><path d="M940.5 1643.8 L952.9 1638.8" fill="none" stroke="#35c36b" stroke-width="2.1" stroke-linecap="round" stroke-linejoin="round" /><path d="M1044.3 1420.3 C1046.0 1421.3 1050.9 1424.8 1054.2 1426.4 C1057.5 1428.1 1061.4 1428.7 1064.1 1430.1 C1066.8 1431.6 1067.8 1435.7 1070.3 1435.1 C1072.8 1434.5 1075.9 1428.7 1078.9 1426.4 C1082.0 1424.2 1085.3 1421.6 1088.8 1421.5 C1092.3 1421.4 1098.1 1425.0 1100.0 1425.7" fill="none" stroke="#35c36b" stroke-width="2.1" stroke-linecap="round" stroke-linejoin="round" /><path d="M1070.3 1435.1 L1069.1 1440.5" fill="none" stroke="#35c36b" stroke-width="2.1" stroke-linecap="round" stroke-linejoin="round" /><path d="M1065.4 1430.0 C1066.1 1431.2 1067.7 1437.4 1069.6 1437.4 C1071.4 1437.4 1075.3 1431.2 1076.5 1430.0" fill="none" stroke="#35c36b" stroke-width="2.1" stroke-linecap="round" stroke-linejoin="round" /><path d="M1069.6 1437.4 L1070.3 1446.8" fill="none" stroke="#35c36b" stroke-width="2.1" stroke-linecap="round" stroke-linejoin="round" /><path d="M1017.2 1527.6 C1019.2 1528.2 1023.3 1530.6 1029.5 1531.3 C1035.7 1532.0 1046.8 1532.2 1054.2 1531.8 C1061.6 1531.4 1068.2 1528.9 1074.0 1528.9 C1079.8 1528.8 1086.4 1530.9 1088.8 1531.3" fill="none" stroke="#35c36b" stroke-width="2.1" stroke-linecap="round" stroke-linejoin="round" /><path d="M1057.9 1519.5 C1060.6 1519.7 1069.3 1520.0 1074.0 1521.0 C1078.7 1521.9 1083.5 1523.8 1086.4 1525.2 C1089.2 1526.5 1090.5 1528.2 1091.3 1528.9" fill="none" stroke="#35c36b" stroke-width="2.1" stroke-linecap="round" stroke-linejoin="round" /><path d="M1061.6 1522.7 L1066.6 1527.6" fill="none" stroke="#35c36b" stroke-width="2.1" stroke-linecap="round" stroke-linejoin="round" /><path d="M704.1 1430.0 C706.2 1431.6 710.7 1437.8 716.5 1439.9 C722.2 1441.9 733.0 1439.9 738.7 1442.4 C744.5 1444.8 746.5 1451.4 751.1 1454.7 C755.6 1458.0 761.1 1458.8 765.9 1462.1 C770.7 1465.4 776.3 1471.8 780.0 1474.5 C783.7 1477.2 786.8 1477.6 788.2 1478.2" fill="none" stroke="#e67e22" stroke-width="2.2" stroke-linecap="round" stroke-linejoin="round" /><path d="M779.9 1477.0 C781.9 1478.0 787.3 1481.1 792.2 1483.1 C797.2 1485.2 804.4 1487.7 809.5 1489.3 C814.7 1491.0 819.8 1491.9 823.1 1493.0 C826.4 1494.2 828.3 1495.7 829.3 1496.2" fill="none" stroke="#e67e22" stroke-width="2.2" stroke-linecap="round" stroke-linejoin="round" /><path d="M914.6 1533.8 C915.4 1533.2 917.9 1530.0 919.5 1530.1 C921.2 1530.2 923.0 1534.0 924.5 1534.3 C925.9 1534.6 925.1 1532.3 928.2 1531.8 C931.3 1531.3 938.1 1531.6 943.0 1531.3 C948.0 1531.0 952.9 1531.1 957.8 1530.1 C962.8 1529.1 966.9 1526.3 972.7 1525.2 C978.4 1524.0 986.7 1523.8 992.4 1523.4 C998.2 1523.0 1003.2 1522.2 1007.3 1522.7 C1011.4 1523.2 1014.3 1525.2 1017.2 1526.4 C1020.0 1527.6 1020.5 1529.6 1024.6 1530.1 C1028.7 1530.6 1035.7 1529.8 1041.9 1529.4 C1048.1 1528.9 1055.5 1528.3 1061.6 1527.6 C1067.8 1526.9 1074.4 1525.8 1078.9 1525.2 C1083.5 1524.5 1086.8 1523.5 1088.8 1523.9 C1090.9 1524.3 1090.9 1527.0 1091.3 1527.6" fill="none" stroke="#e67e22" stroke-width="2.2" stroke-linecap="round" stroke-linejoin="round" /><path d="M1480 1645.500 L1497 1632.500" stroke="#6e93c4" stroke-width="2.600"/><rect x="413.5" y="1228" width="1083.5" height="34.500" fill="#fbfbfa" opacity=".82"/><text x="501.0" y="1267.3" font-size="9.5" font-weight="normal" textLength="77.5" lengthAdjust="spacingAndGlyphs" fill="#444" stroke="#f6f4f0" stroke-width="2.200" paint-order="stroke" stroke-linejoin="round">Çorovodë</text><text x="866.500" y="1249.800" font-size="9.500" font-weight="bold" textLength="183.300" lengthAdjust="spacingAndGlyphs" fill="#222">[% diva_status_summary() %]</text></svg>
<div class="a" style="left:413.50px;top:1227.50px;width:1083.50px;height:1.00px;background:#c9c9c9;"></div>
</div>
<span class="t" style="top:1684.44px;font-size:19.00px;line-height:19.00px;color:#000;font-weight:bold;left:456.00px;transform-origin:0 50%;transform:scaleX(0.9547);">Standard SQL queries (core package for professional users and scientific researchers)</span>
<div class="a" style="left:11.60px;top:1723.30px;width:1476.40px;height:1.30px;background:#3a3a3a;"></div>
<div class="a" style="left:11.60px;top:2016.40px;width:1476.40px;height:1.30px;background:#3a3a3a;"></div>
<div class="a" style="left:11.60px;top:1723.30px;width:1.30px;height:294.50px;background:#3a3a3a;"></div>
<div class="a" style="left:364.60px;top:1723.30px;width:1.30px;height:294.50px;background:#3a3a3a;"></div>
<div class="a" style="left:692.20px;top:1723.30px;width:1.30px;height:294.50px;background:#3a3a3a;"></div>
<div class="a" style="left:1070.50px;top:1723.30px;width:1.30px;height:294.50px;background:#3a3a3a;"></div>
<div class="a" style="left:1486.70px;top:1723.30px;width:1.30px;height:294.50px;background:#3a3a3a;"></div>
<span class="t" style="top:1750.33px;font-size:20.50px;line-height:20.50px;color:#000;font-family:'Liberation Serif', serif;font-weight:bold;left:22.70px;transform-origin:0 50%;transform:scaleX(0.9564);">Total indicators by category</span>
<span class="t" style="top:1750.33px;font-size:20.50px;line-height:20.50px;color:#000;font-family:'Liberation Serif', serif;font-weight:bold;left:375.30px;transform-origin:0 50%;transform:scaleX(0.9527);">Indicators with defined source</span>
<span class="t" style="top:1746.63px;font-size:20.50px;line-height:20.50px;color:#000;font-family:'Liberation Serif', serif;font-weight:bold;left:703.00px;transform-origin:0 50%;transform:scaleX(0.9527);">Distribution of indicators by reliability</span>
<span class="t" style="top:1769.83px;font-size:20.50px;line-height:20.50px;color:#000;font-family:'Liberation Serif', serif;font-weight:bold;left:703.00px;transform-origin:0 50%;">level</span>
<span class="t" style="top:1746.63px;font-size:20.50px;line-height:20.50px;color:#000;font-family:'Liberation Serif', serif;font-weight:bold;left:1081.30px;transform-origin:0 50%;transform:scaleX(0.9513);">Number of indicators by unit and category</span>
<span class="t" style="top:1815.68px;font-size:15.64px;line-height:15.64px;color:#2a2a2a;font-family:'Liberation Mono', monospace;white-space:pre;left:22.50px;transform-origin:0 50%;transform:scaleX(1.1299);">SELECT</span>
<span class="t" style="top:1835.78px;font-size:15.64px;line-height:15.64px;color:#2a2a2a;font-family:'Liberation Mono', monospace;white-space:pre;left:22.50px;transform-origin:0 50%;transform:scaleX(1.1299);">    category,</span>
<span class="t" style="top:1855.88px;font-size:15.64px;line-height:15.64px;color:#2a2a2a;font-family:'Liberation Mono', monospace;white-space:pre;left:22.50px;transform-origin:0 50%;transform:scaleX(1.1299);">    COUNT(*) AS</span>
<span class="t" style="top:1875.98px;font-size:15.64px;line-height:15.64px;color:#2a2a2a;font-family:'Liberation Mono', monospace;white-space:pre;left:22.50px;transform-origin:0 50%;transform:scaleX(1.1299);">total_indicators</span>
<span class="t" style="top:1896.08px;font-size:15.64px;line-height:15.64px;color:#2a2a2a;font-family:'Liberation Mono', monospace;white-space:pre;left:22.50px;transform-origin:0 50%;transform:scaleX(1.1299);">FROM all_indicators</span>
<span class="t" style="top:1916.18px;font-size:15.64px;line-height:15.64px;color:#2a2a2a;font-family:'Liberation Mono', monospace;white-space:pre;left:22.50px;transform-origin:0 50%;transform:scaleX(1.1299);">GROUP BY category</span>
<span class="t" style="top:1936.28px;font-size:15.64px;line-height:15.64px;color:#2a2a2a;font-family:'Liberation Mono', monospace;white-space:pre;left:22.50px;transform-origin:0 50%;transform:scaleX(1.1299);">ORDER BY category;</span>
<span class="t" style="top:1796.68px;font-size:15.64px;line-height:15.64px;color:#2a2a2a;font-family:'Liberation Mono', monospace;white-space:pre;left:375.30px;transform-origin:0 50%;transform:scaleX(1.1299);">SELECT</span>
<span class="t" style="top:1816.78px;font-size:15.64px;line-height:15.64px;color:#2a2a2a;font-family:'Liberation Mono', monospace;white-space:pre;left:375.30px;transform-origin:0 50%;transform:scaleX(1.1299);">    category,</span>
<span class="t" style="top:1836.88px;font-size:15.64px;line-height:15.64px;color:#2a2a2a;font-family:'Liberation Mono', monospace;white-space:pre;left:375.30px;transform-origin:0 50%;transform:scaleX(1.1299);">    COUNT(*) AS with_source</span>
<span class="t" style="top:1856.98px;font-size:15.64px;line-height:15.64px;color:#2a2a2a;font-family:'Liberation Mono', monospace;white-space:pre;left:375.30px;transform-origin:0 50%;transform:scaleX(1.1299);">FROM all_indicators</span>
<span class="t" style="top:1877.08px;font-size:15.64px;line-height:15.64px;color:#2a2a2a;font-family:'Liberation Mono', monospace;white-space:pre;left:375.30px;transform-origin:0 50%;transform:scaleX(1.1299);">WHERE source_name_id IS NOT</span>
<span class="t" style="top:1897.18px;font-size:15.64px;line-height:15.64px;color:#2a2a2a;font-family:'Liberation Mono', monospace;white-space:pre;left:375.30px;transform-origin:0 50%;transform:scaleX(1.1299);">NULL</span>
<span class="t" style="top:1917.28px;font-size:15.64px;line-height:15.64px;color:#2a2a2a;font-family:'Liberation Mono', monospace;white-space:pre;left:375.30px;transform-origin:0 50%;transform:scaleX(1.1299);">GROUP BY category</span>
<span class="t" style="top:1937.38px;font-size:15.64px;line-height:15.64px;color:#2a2a2a;font-family:'Liberation Mono', monospace;white-space:pre;left:375.30px;transform-origin:0 50%;transform:scaleX(1.1299);">ORDER BY category;</span>
<span class="t" style="top:1812.21px;font-size:14.12px;line-height:14.12px;color:#2a2a2a;font-family:'Liberation Mono', monospace;white-space:pre;left:703.00px;transform-origin:0 50%;transform:scaleX(1.1299);">SELECT</span>
<span class="t" style="top:1830.31px;font-size:14.12px;line-height:14.12px;color:#2a2a2a;font-family:'Liberation Mono', monospace;white-space:pre;left:703.00px;transform-origin:0 50%;transform:scaleX(1.1299);">    category,</span>
<span class="t" style="top:1848.41px;font-size:14.12px;line-height:14.12px;color:#2a2a2a;font-family:'Liberation Mono', monospace;white-space:pre;left:703.00px;transform-origin:0 50%;transform:scaleX(1.1299);">    rl.label AS reliability,</span>
<span class="t" style="top:1866.51px;font-size:14.12px;line-height:14.12px;color:#2a2a2a;font-family:'Liberation Mono', monospace;white-space:pre;left:703.00px;transform-origin:0 50%;transform:scaleX(1.1299);">    COUNT(*) AS total</span>
<span class="t" style="top:1884.61px;font-size:14.12px;line-height:14.12px;color:#2a2a2a;font-family:'Liberation Mono', monospace;white-space:pre;left:703.00px;transform-origin:0 50%;transform:scaleX(1.1299);">FROM all_indicators ai</span>
<span class="t" style="top:1902.71px;font-size:14.12px;line-height:14.12px;color:#2a2a2a;font-family:'Liberation Mono', monospace;white-space:pre;left:703.00px;transform-origin:0 50%;transform:scaleX(1.1299);">LEFT JOIN reliability_levels rl</span>
<span class="t" style="top:1920.81px;font-size:14.12px;line-height:14.12px;color:#2a2a2a;font-family:'Liberation Mono', monospace;white-space:pre;left:703.00px;transform-origin:0 50%;transform:scaleX(1.1299);">    ON ai.reliability_id =</span>
<span class="t" style="top:1938.91px;font-size:14.12px;line-height:14.12px;color:#2a2a2a;font-family:'Liberation Mono', monospace;white-space:pre;left:703.00px;transform-origin:0 50%;transform:scaleX(1.1299);">rl.reliability_id</span>
<span class="t" style="top:1957.01px;font-size:14.12px;line-height:14.12px;color:#2a2a2a;font-family:'Liberation Mono', monospace;white-space:pre;left:703.00px;transform-origin:0 50%;transform:scaleX(1.1299);">GROUP BY category, rl.label</span>
<span class="t" style="top:1975.11px;font-size:14.12px;line-height:14.12px;color:#2a2a2a;font-family:'Liberation Mono', monospace;white-space:pre;left:703.00px;transform-origin:0 50%;transform:scaleX(1.1299);">ORDER BY category, rl.label;</span>
<span class="t" style="top:1791.88px;font-size:15.64px;line-height:15.64px;color:#2a2a2a;font-family:'Liberation Mono', monospace;white-space:pre;left:1081.30px;transform-origin:0 50%;transform:scaleX(1.1299);">SELECT</span>
<span class="t" style="top:1812.05px;font-size:15.64px;line-height:15.64px;color:#2a2a2a;font-family:'Liberation Mono', monospace;white-space:pre;left:1081.30px;transform-origin:0 50%;transform:scaleX(1.1299);">    category,</span>
<span class="t" style="top:1832.22px;font-size:15.64px;line-height:15.64px;color:#2a2a2a;font-family:'Liberation Mono', monospace;white-space:pre;left:1081.30px;transform-origin:0 50%;transform:scaleX(1.1299);">    unit_name AS unit,</span>
<span class="t" style="top:1852.39px;font-size:15.64px;line-height:15.64px;color:#2a2a2a;font-family:'Liberation Mono', monospace;white-space:pre;left:1081.30px;transform-origin:0 50%;transform:scaleX(1.1299);">    COUNT(*) AS total</span>
<span class="t" style="top:1872.56px;font-size:15.64px;line-height:15.64px;color:#2a2a2a;font-family:'Liberation Mono', monospace;white-space:pre;left:1081.30px;transform-origin:0 50%;transform:scaleX(1.1299);">FROM all_indicators ai</span>
<span class="t" style="top:1892.73px;font-size:15.64px;line-height:15.64px;color:#2a2a2a;font-family:'Liberation Mono', monospace;white-space:pre;left:1081.30px;transform-origin:0 50%;transform:scaleX(1.1299);">LEFT JOIN units u</span>
<span class="t" style="top:1912.90px;font-size:15.64px;line-height:15.64px;color:#2a2a2a;font-family:'Liberation Mono', monospace;white-space:pre;left:1081.30px;transform-origin:0 50%;transform:scaleX(1.1299);">    ON ai.unit_id = u.unit_id</span>
<span class="t" style="top:1933.07px;font-size:15.64px;line-height:15.64px;color:#2a2a2a;font-family:'Liberation Mono', monospace;white-space:pre;left:1081.30px;transform-origin:0 50%;transform:scaleX(1.1299);">GROUP BY category, unit_name</span>
<span class="t" style="top:1953.24px;font-size:15.64px;line-height:15.64px;color:#2a2a2a;font-family:'Liberation Mono', monospace;white-space:pre;left:1081.30px;transform-origin:0 50%;transform:scaleX(1.1299);">ORDER BY category, unit_name;</span>
</body></html>
